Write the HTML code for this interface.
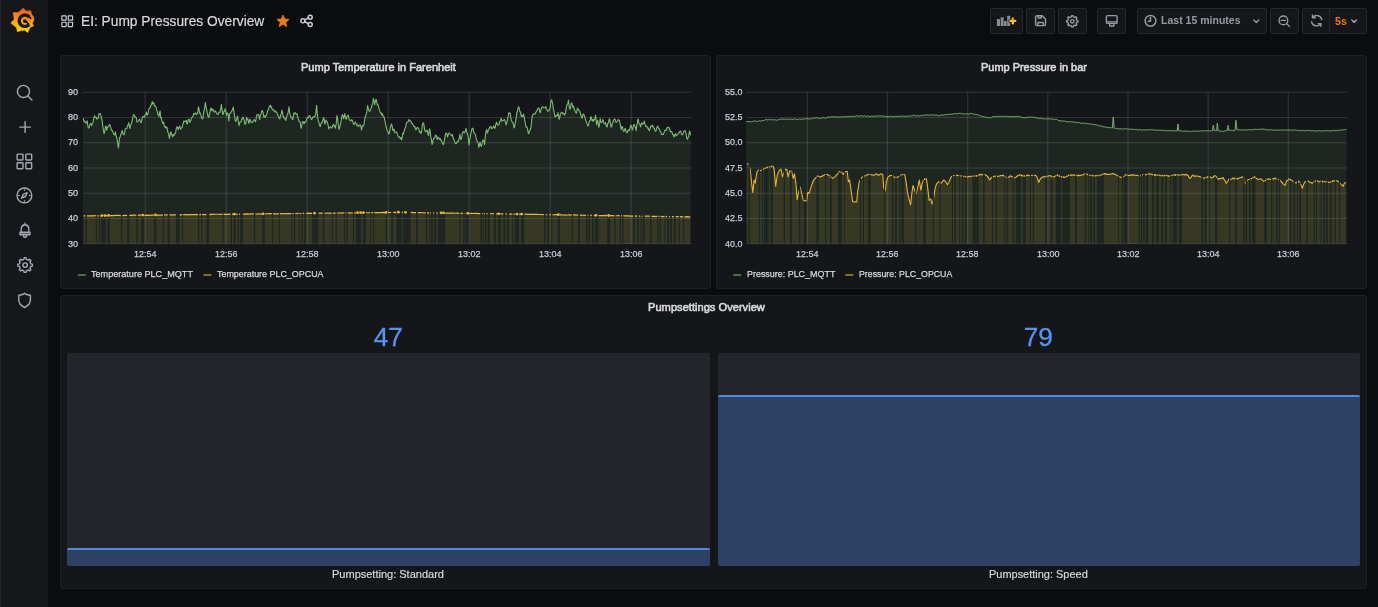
<!DOCTYPE html>
<html><head><meta charset="utf-8"><title>EI: Pump Pressures Overview - Grafana</title>
<style>
html,body{margin:0;padding:0}
body{width:1378px;height:607px;overflow:hidden;background:#0b0c0e;position:relative;font-family:"Liberation Sans",sans-serif}
.t{position:absolute;white-space:nowrap;display:block}
.i{position:absolute;display:block;overflow:visible}
.side{position:absolute;left:0;top:0;width:48px;height:607px;background:#15171a}
.panel{position:absolute;background:#141619;border:1px solid #1e2024;border-radius:3px;box-sizing:border-box}
.btn{position:absolute;top:8px;height:25.5px;background:#141619;border:1px solid #25272c;border-radius:2px;box-sizing:border-box}
.gauge{position:absolute;background:#25262b;border-radius:2px;overflow:hidden}
.fill{position:absolute;left:0;right:0;bottom:0;background:#2d4165;border-top:2px solid #5288de;border-radius:2px 2px 0 0}
svg.chart{position:absolute;left:0;top:0}
#root{position:absolute;left:0;top:0;width:1378px;height:607px;will-change:transform}
</style></head><body><div id="root">

<div class="side"></div>
<svg class="i" style="left:8px;top:5px" width="30" height="30" viewBox="8 5 30 30">
<defs><linearGradient id="lg" x1="0.3" y1="1" x2="0.45" y2="0"><stop offset="0" stop-color="#fcdc10"/><stop offset="0.5" stop-color="#f8981f"/><stop offset="1" stop-color="#f0562a"/></linearGradient></defs>
<path fill="url(#lg)" stroke="url(#lg)" stroke-width="0.6" stroke-linejoin="round" d="M23.40,8.00 L25.70,10.90 L30.70,10.80 L31.60,14.20 L33.40,16.60 L34.10,19.20 L33.40,21.40 L32.40,23.20 L33.60,25.90 L30.20,27.20 L27.70,32.50 L24.90,30.20 L21.40,30.60 L17.40,31.60 L16.50,27.60 L10.80,23.10 L14.30,19.20 L13.10,12.60 L17.60,12.60 L19.60,11.40Z"/>
<path fill="none" stroke="#15171a" stroke-width="3.3" stroke-linecap="butt" stroke-linejoin="round" d="M29.30,17.10 L28.82,16.60 L28.28,16.16 L27.69,15.79 L27.07,15.49 L26.41,15.28 L25.73,15.14 L25.03,15.09 L24.34,15.12 L23.66,15.23 L23.00,15.43 L22.36,15.70 L21.77,16.05 L21.22,16.47 L20.73,16.95 L20.29,17.48 L19.93,18.07 L19.64,18.69 L19.43,19.34 L19.30,20.02 L19.25,20.70 L19.29,21.39 L19.40,22.06 L19.60,22.71 L19.87,23.34 L20.22,23.93 L20.64,24.46 L21.12,24.95 L21.65,25.37 L22.23,25.73 L22.85,26.01 L23.49,26.22 L24.16,26.34 L24.84,26.38 L25.51,26.35 L26.18,26.23 L26.82,26.03 L27.44,25.75 L28.02,25.40 L28.55,24.99 L29.02,24.51"/>
<path fill="none" stroke="#15171a" stroke-width="1.6" stroke-linecap="round" d="M30.74,18.44 L30.71,18.40 L30.69,18.36 L30.66,18.31 L30.63,18.27 L30.60,18.23 L30.57,18.19 L30.54,18.15 L30.51,18.11 L30.48,18.07 L30.45,18.03 L30.42,17.99 L30.39,17.96 L30.36,17.92 L30.32,17.88 L30.29,17.84 L30.26,17.80 L30.23,17.77 L30.19,17.73 L30.16,17.69 L30.13,17.66 L30.10,17.62 L30.06,17.59 L30.03,17.55 L29.99,17.52 L29.96,17.48 L29.93,17.45 L29.89,17.41 L29.86,17.38 L29.82,17.35 L29.78,17.32 L29.75,17.28 L29.71,17.25 L29.68,17.22 L29.64,17.19 L29.60,17.16 L29.57,17.13 L29.53,17.10 L29.49,17.07 L29.46,17.04 L29.42,17.01"/>
<circle cx="24.799999999999997" cy="21.1" r="1.9" fill="#15171a"/>
<path fill="none" stroke="#15171a" stroke-width="1.7" stroke-linecap="round" d="M25.94,21.40 L28.62,24.15"/>
</svg>
<div style="position:absolute;left:0;top:0;width:1px;height:607px;background:#202226"></div>
<svg class="i" style="left:16.1px;top:83.5px" width="16.9" height="16.9" viewBox="0 0 24 24" fill="none" stroke="#a4a8b1" stroke-width="2.0" stroke-linecap="round" stroke-linejoin="round"><circle cx="10.6" cy="10.6" r="8.6"/><path d="M17 17 L22.6 22.6"/></svg>
<svg class="i" style="left:17.65px;top:119.6px" width="14.2" height="14.2" viewBox="0 0 24 24" fill="none" stroke="#a4a8b1" stroke-width="2.4" stroke-linecap="round" stroke-linejoin="round"><path d="M12 3 V21 M3 12 H21"/></svg>
<svg class="i" style="left:16.2px;top:152.8px" width="16.8" height="16.8" viewBox="0 0 24 24" fill="none" stroke="#a4a8b1" stroke-width="2.0" stroke-linecap="round" stroke-linejoin="round"><rect x="1.6" y="1.6" width="8.4" height="8.4" rx="1"/><rect x="14" y="1.6" width="8.4" height="8.4" rx="1"/><rect x="1.6" y="14" width="8.4" height="8.4" rx="1"/><rect x="14" y="14" width="8.4" height="8.4" rx="1"/></svg>
<svg class="i" style="left:16.2px;top:187.4px" width="16.8" height="16.8" viewBox="0 0 24 24" fill="none" stroke="#a4a8b1" stroke-width="2.0" stroke-linecap="round" stroke-linejoin="round"><circle cx="12" cy="12" r="10.6"/><path d="M16 8 L13.6 13.6 L8 16 L10.4 10.4 Z"/><path d="M12 3.6 V4.8 M12 19.2 V20.4 M3.6 12 H4.8 M19.2 12 H20.4" stroke-width="1.5"/></svg>
<svg class="i" style="left:17.7px;top:222.4px" width="14" height="16.6" viewBox="0 0 24 24" preserveAspectRatio="none" fill="none" stroke="#a4a8b1" stroke-width="2.3" stroke-linecap="round" stroke-linejoin="round"><path d="M12 1.8 V4 M5.4 15 V11 C5.4 6.8 8 4.2 12 4.2 C16 4.2 18.6 6.8 18.6 11 V15 M3.4 15 H20.6 V18.2 H3.4 Z M9.4 20.6 C10.4 22.4 13.6 22.4 14.6 20.6"/></svg>
<svg class="i" style="left:16.7px;top:257.4px" width="16.2" height="16.2" viewBox="0 0 24 24" fill="none" stroke="#a4a8b1" stroke-width="2.1" stroke-linecap="round" stroke-linejoin="round"><path d="M10.17,3.49 L10.63,1.19 L13.37,1.19 L13.83,3.49 L16.72,4.69 L18.68,3.39 L20.61,5.32 L19.31,7.28 L20.51,10.17 L22.81,10.63 L22.81,13.37 L20.51,13.83 L19.31,16.72 L20.61,18.68 L18.68,20.61 L16.72,19.31 L13.83,20.51 L13.37,22.81 L10.63,22.81 L10.17,20.51 L7.28,19.31 L5.32,20.61 L3.39,18.68 L4.69,16.72 L3.49,13.83 L1.19,13.37 L1.19,10.63 L3.49,10.17 L4.69,7.28 L3.39,5.32 L5.32,3.39 L7.28,4.69Z"/><circle cx="12" cy="12" r="3.3"/></svg>
<svg class="i" style="left:17.2px;top:291.8px" width="15.2" height="16.4" viewBox="0 0 24 24" preserveAspectRatio="none" fill="none" stroke="#a4a8b1" stroke-width="2.2" stroke-linecap="round" stroke-linejoin="round"><path d="M12 2 C9.5 4 6 4.8 2.8 4.8 V11.5 C2.8 17 7 20.6 12 22.6 C17 20.6 21.2 17 21.2 11.5 V4.8 C18 4.8 14.5 4 12 2 Z"/></svg>
<svg class="i" style="left:61px;top:15.3px" width="12.4" height="12.4" viewBox="0 0 24 24" fill="none" stroke="#c7d0d9" stroke-width="2.3" stroke-linecap="round" stroke-linejoin="round"><rect x="1.6" y="1.6" width="8.4" height="8.4" rx="1"/><rect x="14" y="1.6" width="8.4" height="8.4" rx="1"/><rect x="1.6" y="14" width="8.4" height="8.4" rx="1"/><rect x="14" y="14" width="8.4" height="8.4" rx="1"/></svg>
<span class="t" style="left:81.00px;top:14.01px;font-size:14.4px;line-height:14.4px;color:#d8d9da;transform:scaleX(0.9549);transform-origin:0 0;-webkit-text-stroke:0.2px #d8d9da;">EI: Pump Pressures Overview</span>
<svg class="i" style="left:276px;top:14px" width="14" height="14" viewBox="0 0 14 14"><path d="M7.00,1.00 L8.70,5.05 L13.09,5.42 L9.76,8.30 L10.76,12.58 L7.00,10.30 L3.24,12.58 L4.24,8.30 L0.91,5.42 L5.30,5.05Z" fill="#eb7b18" stroke="#eb7b18" stroke-width="0.8" stroke-linejoin="round"/></svg>
<svg class="i" style="left:298px;top:12px" width="18" height="18" viewBox="298 12 18 18" fill="none" stroke="#c7d0d9" stroke-width="1.45" stroke-linecap="round"><circle cx="310.2" cy="17.2" r="2.05"/><circle cx="302.9" cy="20.8" r="2.05"/><circle cx="310.2" cy="24.5" r="2.05"/><path d="M304.8 19.85 L308.3 18.15 M304.8 21.75 L308.3 23.55"/></svg>
<div class="btn" style="left:990px;width:33.2px"></div>
<div class="btn" style="left:1026px;width:29px"></div>
<div class="btn" style="left:1058px;width:28.6px"></div>
<div class="btn" style="left:1097.3px;width:28.8px"></div>
<div class="btn" style="left:1137px;width:130px"></div>
<div class="btn" style="left:1270.2px;width:28.6px"></div>
<div class="btn" style="left:1302px;width:64.8px"></div>
<div style="position:absolute;left:1329.2px;top:8px;width:1px;height:25.5px;background:#25272c"></div>
<svg class="i" style="left:995px;top:13px" width="24" height="15" viewBox="995 13 24 15">
<defs><linearGradient id="pg" x1="0" y1="0" x2="0" y2="1"><stop offset="0" stop-color="#f59a30"/><stop offset="1" stop-color="#fbd22c"/></linearGradient></defs>
<g fill="#888c94"><rect x="996.9" y="18.9" width="3.1" height="7" rx="0.5"/><rect x="1000.7" y="17.2" width="2.9" height="8.7" rx="0.5"/><rect x="1004.0" y="20.9" width="2.7" height="5" rx="0.5"/><rect x="1007.2" y="15.7" width="2.9" height="10.2" rx="0.5"/></g>
<path d="M1012.8 18.3 V23.5 M1010.2 20.9 H1015.4" stroke="#141619" stroke-width="3.9" stroke-linecap="round" fill="none"/>
<path d="M1012.8 18.4 V23.4 M1010.3 20.9 H1015.3" stroke="url(#pg)" stroke-width="2.3" stroke-linecap="round" fill="none"/></svg>
<svg class="i" style="left:1033px;top:13px" width="15" height="15" viewBox="1033 13 15 15" fill="none" stroke="#969aa2" stroke-width="1.45" stroke-linejoin="round" stroke-linecap="round"><path d="M1035.6 17 C1035.6 16.2 1036.2 15.7 1037 15.7 H1042.2 L1045.5 19 V24.2 C1045.5 25 1044.9 25.6 1044.1 25.6 H1037 C1036.2 25.6 1035.6 25 1035.6 24.2 Z M1038.2 15.9 V18 H1041.2 V15.9 M1037.9 25.4 V22.4 H1043.2 V25.4"/></svg>
<svg class="i" style="left:1065.8px;top:14.6px" width="12.6" height="12.6" viewBox="0 0 24 24" fill="none" stroke="#969aa2" stroke-width="2.6" stroke-linecap="round" stroke-linejoin="round"><path d="M10.17,3.49 L10.63,1.19 L13.37,1.19 L13.83,3.49 L16.72,4.69 L18.68,3.39 L20.61,5.32 L19.31,7.28 L20.51,10.17 L22.81,10.63 L22.81,13.37 L20.51,13.83 L19.31,16.72 L20.61,18.68 L18.68,20.61 L16.72,19.31 L13.83,20.51 L13.37,22.81 L10.63,22.81 L10.17,20.51 L7.28,19.31 L5.32,20.61 L3.39,18.68 L4.69,16.72 L3.49,13.83 L1.19,13.37 L1.19,10.63 L3.49,10.17 L4.69,7.28 L3.39,5.32 L5.32,3.39 L7.28,4.69Z"/><circle cx="12" cy="12" r="3.3"/></svg>
<svg class="i" style="left:1104px;top:13px" width="16" height="15" viewBox="1104 13 16 15" fill="none" stroke="#969aa2" stroke-width="1.4" stroke-linejoin="round"><rect x="1106.4" y="15.6" width="10.7" height="7.8" rx="1.2"/><path d="M1106.4 21.9 H1117.1 M1109.7 23.6 V26 H1113.9 V23.6"/></svg>
<svg class="i" style="left:1143px;top:13px" width="16" height="16" viewBox="1143 13 16 16" fill="none" stroke="#969aa2" stroke-width="1.5" stroke-linecap="round" stroke-linejoin="round"><circle cx="1150.5" cy="20.8" r="5.4"/><path d="M1150.5 17.4 V21.2 H1148.2"/></svg>
<span class="t" style="left:1161.40px;top:15.12px;font-size:11.2px;line-height:11.2px;color:#969aa2;transform:scaleX(0.9403);transform-origin:0 0;font-weight:bold;">Last 15 minutes</span>
<svg class="i" style="left:1252px;top:17.1px" width="8.6" height="8.6" viewBox="0 0 24 24" fill="none" stroke="#969aa2" stroke-width="3.6" stroke-linecap="round" stroke-linejoin="round"><path d="M5 8.5 L12 15.5 L19 8.5"/></svg>
<svg class="i" style="left:1278.3px;top:14.7px" width="12.2" height="12.2" viewBox="0 0 24 24" fill="none" stroke="#969aa2" stroke-width="2.7" stroke-linecap="round" stroke-linejoin="round"><circle cx="10.6" cy="10.6" r="8.6"/><path d="M17 17 L22.6 22.6 M6.6 10.6 H14.6"/></svg>
<svg class="i" style="left:1309.5px;top:14.2px" width="13.4" height="13.4" viewBox="0 0 24 24" fill="none" stroke="#969aa2" stroke-width="2.5" stroke-linecap="round" stroke-linejoin="round"><path d="M21.2 10 A9.4 9.4 0 0 0 4.6 6.4 M2.8 14 A9.4 9.4 0 0 0 19.4 17.6 M4.4 1.8 V6.8 H9.4 M19.6 22.2 V17.2 H14.6"/></svg>
<span class="t" style="left:1335.20px;top:15.62px;font-size:11.2px;line-height:11.2px;color:#eb7b18;transform:scaleX(0.9472);transform-origin:0 0;font-weight:bold;">5s</span>
<svg class="i" style="left:1350.2px;top:17.3px" width="8.2" height="8.2" viewBox="0 0 24 24" fill="none" stroke="#b8bcc4" stroke-width="3.6" stroke-linecap="round" stroke-linejoin="round"><path d="M5 8.5 L12 15.5 L19 8.5"/></svg>
<div class="panel" style="left:60px;top:55.4px;width:651px;height:233.6px"></div>
<div class="panel" style="left:716px;top:55.4px;width:651px;height:233.6px"></div>
<div class="panel" style="left:60px;top:295.3px;width:1307px;height:293.7px"></div>
<span class="t" style="left:300.90px;top:61.82px;font-size:11.2px;line-height:11.2px;color:#d8d9da;transform:scaleX(0.9854);transform-origin:0 0;-webkit-text-stroke:0.6px #d8d9da;">Pump Temperature in Farenheit</span>
<span class="t" style="left:981.40px;top:61.82px;font-size:11.2px;line-height:11.2px;color:#d8d9da;transform:scaleX(0.9786);transform-origin:0 0;-webkit-text-stroke:0.6px #d8d9da;">Pump Pressure in bar</span>
<span class="t" style="left:648.00px;top:302.02px;font-size:11.2px;line-height:11.2px;color:#d8d9da;transform:scaleX(0.9945);transform-origin:0 0;-webkit-text-stroke:0.6px #d8d9da;">Pumpsettings Overview</span>
<svg class="chart" width="1378" height="607" viewBox="0 0 1378 607">
<rect x="83.0" y="91.80" width="608.40" height="1" fill="rgba(200,204,212,0.17)"/>
<rect x="83.0" y="117.03" width="608.40" height="1" fill="rgba(200,204,212,0.17)"/>
<rect x="83.0" y="142.26" width="608.40" height="1" fill="rgba(200,204,212,0.17)"/>
<rect x="83.0" y="167.49" width="608.40" height="1" fill="rgba(200,204,212,0.17)"/>
<rect x="83.0" y="192.72" width="608.40" height="1" fill="rgba(200,204,212,0.17)"/>
<rect x="83.0" y="217.95" width="608.40" height="1" fill="rgba(200,204,212,0.17)"/>
<rect x="83.0" y="243.18" width="608.40" height="1" fill="rgba(200,204,212,0.17)"/>
<rect x="144.60" y="92.3" width="1.2" height="151.40" fill="rgba(200,204,212,0.15)"/>
<rect x="225.60" y="92.3" width="1.2" height="151.40" fill="rgba(200,204,212,0.15)"/>
<rect x="306.60" y="92.3" width="1.2" height="151.40" fill="rgba(200,204,212,0.15)"/>
<rect x="387.60" y="92.3" width="1.2" height="151.40" fill="rgba(200,204,212,0.15)"/>
<rect x="468.60" y="92.3" width="1.2" height="151.40" fill="rgba(200,204,212,0.15)"/>
<rect x="549.60" y="92.3" width="1.2" height="151.40" fill="rgba(200,204,212,0.15)"/>
<rect x="630.60" y="92.3" width="1.2" height="151.40" fill="rgba(200,204,212,0.15)"/>
<path d="M83.00,118.21 L83.48,119.10 L84.06,121.76 L84.93,121.03 L85.81,123.16 L86.50,122.77 L87.20,120.88 L87.78,125.72 L88.36,128.10 L89.11,127.58 L89.87,124.30 L90.74,123.61 L91.61,125.75 L92.19,123.27 L92.77,123.06 L93.64,118.89 L94.51,115.72 L95.38,117.63 L96.26,117.20 L96.84,119.08 L97.42,118.76 L98.00,118.52 L98.58,115.93 L99.16,113.44 L99.74,113.80 L100.32,113.61 L100.90,115.09 L101.48,118.75 L102.06,119.63 L102.64,125.10 L103.22,128.55 L104.03,133.74 L104.79,131.00 L105.54,126.06 L106.12,126.24 L106.71,130.19 L107.58,127.01 L108.45,126.76 L109.26,124.61 L110.01,124.96 L110.77,127.83 L111.64,130.35 L112.51,130.61 L113.38,133.31 L114.25,134.68 L114.83,134.86 L115.41,131.74 L115.99,135.87 L116.57,137.06 L117.45,141.06 L118.32,148.01 L118.90,144.22 L119.48,137.79 L120.06,137.29 L120.64,134.84 L121.34,133.21 L122.03,130.65 L122.61,131.06 L123.19,134.82 L123.95,134.81 L124.70,132.43 L125.28,128.99 L125.86,128.51 L126.73,128.55 L127.61,125.47 L128.19,124.66 L128.77,122.55 L129.35,126.72 L129.93,128.72 L130.51,125.07 L131.09,124.35 L131.96,121.53 L132.83,117.20 L133.58,114.53 L134.34,115.24 L135.04,117.28 L135.73,117.07 L136.31,117.90 L136.89,122.06 L137.76,121.62 L138.64,120.60 L139.22,119.36 L139.80,119.45 L140.38,121.72 L140.96,122.59 L141.54,121.90 L142.12,118.39 L142.99,116.25 L143.86,116.64 L144.44,116.96 L145.02,115.25 L145.72,114.55 L146.42,112.13 L147.00,115.06 L147.58,114.52 L148.16,112.72 L148.74,109.73 L149.20,108.03 L149.67,108.10 L150.25,107.65 L150.83,105.17 L151.52,104.95 L152.22,101.61 L152.80,103.86 L153.38,102.65 L153.85,102.94 L154.31,105.70 L154.89,105.40 L155.47,106.77 L156.05,106.76 L156.63,110.02 L157.21,110.94 L157.79,114.33 L158.37,114.70 L158.96,116.72 L159.54,112.30 L160.12,111.09 L160.70,117.87 L161.28,117.59 L161.86,120.39 L162.67,123.12 L163.13,123.66 L163.60,121.95 L164.06,124.91 L164.53,126.25 L165.22,127.79 L165.92,126.53 L166.50,128.16 L167.08,127.66 L167.66,131.55 L168.24,133.09 L168.82,135.07 L169.40,138.47 L169.87,136.47 L170.33,132.43 L170.91,131.75 L171.49,134.82 L172.08,134.42 L172.66,136.98 L173.35,134.61 L174.05,135.34 L174.75,133.64 L175.44,133.48 L176.20,128.99 L176.95,126.69 L177.53,127.22 L178.11,129.73 L178.98,127.15 L179.85,126.12 L180.44,129.24 L181.02,128.87 L181.60,127.61 L182.18,127.51 L182.76,124.45 L183.34,123.07 L183.92,120.76 L184.50,121.28 L185.37,121.65 L186.24,120.33 L186.82,123.49 L187.40,124.01 L187.98,120.60 L188.56,119.57 L189.14,119.27 L189.72,122.47 L190.30,121.02 L190.89,120.75 L191.47,117.82 L192.05,117.28 L192.92,116.46 L193.79,113.40 L194.66,114.22 L195.53,112.88 L196.40,114.48 L197.27,113.88 L197.85,111.66 L198.43,106.86 L199.01,108.99 L199.59,113.45 L200.17,112.94 L200.75,114.34 L201.63,117.96 L202.50,119.00 L203.08,117.13 L203.66,112.60 L204.53,108.30 L205.40,102.62 L205.98,106.71 L206.56,109.06 L207.43,113.78 L208.30,117.38 L208.88,117.20 L209.46,113.78 L210.04,112.28 L210.62,108.60 L211.20,108.15 L211.79,110.54 L212.37,110.42 L212.95,109.05 L213.82,111.65 L214.69,111.99 L215.56,110.91 L216.43,113.14 L217.30,114.22 L218.17,114.34 L219.04,112.12 L219.91,112.43 L220.67,109.32 L221.42,104.45 L222.00,109.24 L222.58,114.40 L223.28,114.18 L223.98,111.00 L224.56,111.23 L225.14,108.53 L225.83,111.46 L226.53,115.49 L227.11,112.96 L227.69,113.26 L228.27,115.53 L228.85,120.89 L229.43,115.75 L230.01,112.93 L230.77,112.90 L231.52,111.30 L232.39,110.07 L233.27,106.95 L233.85,111.45 L234.43,114.50 L235.01,119.12 L235.59,121.47 L236.46,120.10 L237.33,116.65 L237.55,116.01 L238.31,121.49 L239.06,125.66 L239.64,123.01 L240.22,121.67 L240.98,121.82 L241.73,118.78 L242.31,119.10 L242.90,117.31 L243.59,118.24 L244.29,120.85 L244.87,124.16 L245.45,124.28 L246.03,121.82 L246.61,117.31 L247.31,119.76 L248.00,119.20 L248.47,122.46 L248.93,123.32 L249.51,120.20 L250.09,119.14 L250.97,122.23 L251.84,121.97 L252.71,122.43 L253.58,119.69 L254.45,119.72 L255.32,121.85 L255.90,120.21 L256.48,116.17 L257.35,114.23 L258.22,114.49 L258.92,115.75 L259.62,119.57 L260.37,114.80 L261.12,113.83 L261.88,110.52 L262.63,110.86 L263.21,113.11 L263.80,117.19 L264.49,115.74 L265.19,117.41 L265.89,115.57 L266.58,115.22 L267.34,112.03 L268.09,109.87 L268.67,108.86 L269.25,106.54 L269.83,106.51 L270.41,105.28 L270.99,107.24 L271.57,106.82 L272.16,109.58 L272.74,110.10 L273.61,109.37 L274.48,111.46 L275.06,111.86 L275.64,110.95 L276.34,112.13 L277.03,112.74 L277.79,115.44 L278.54,115.76 L279.12,118.17 L279.70,118.91 L280.28,117.08 L280.86,114.48 L281.44,113.40 L282.02,110.09 L282.61,112.24 L283.19,117.03 L283.77,116.54 L284.35,118.91 L285.10,118.37 L285.86,120.70 L286.44,117.18 L287.02,115.60 L287.60,114.19 L288.18,112.15 L288.99,106.87 L289.57,112.21 L290.15,114.83 L290.91,117.03 L291.66,117.15 L292.24,119.27 L292.82,119.58 L293.40,115.53 L293.98,112.71 L294.68,113.89 L295.38,112.78 L296.25,114.11 L297.12,113.83 L297.70,117.55 L298.28,118.57 L299.15,121.48 L300.02,121.45 L300.60,125.72 L301.18,128.28 L301.76,125.67 L302.34,121.49 L303.21,121.72 L304.09,123.67 L304.96,121.66 L305.83,122.00 L306.70,118.92 L307.57,117.36 L308.32,118.04 L309.08,115.78 L309.78,115.53 L310.47,117.33 L311.34,119.65 L312.21,118.81 L313.08,116.72 L313.96,116.79 L314.65,117.10 L315.35,115.12 L315.99,111.63 L316.63,105.20 L317.15,112.10 L317.67,117.93 L318.25,120.90 L318.83,122.05 L319.59,125.57 L320.34,126.45 L320.92,123.35 L321.50,123.01 L322.08,121.62 L322.66,121.88 L323.24,118.55 L323.82,117.63 L324.40,121.54 L324.99,124.22 L325.57,121.42 L326.15,119.93 L326.73,121.73 L327.31,122.08 L328.06,124.78 L328.82,128.87 L329.51,127.24 L330.21,126.99 L330.79,126.67 L331.37,128.25 L332.24,127.20 L333.11,124.29 L333.69,124.56 L334.27,126.59 L334.85,125.83 L335.44,128.25 L336.19,123.66 L336.94,115.63 L337.53,117.82 L338.11,122.78 L338.92,129.42 L339.50,128.36 L340.08,125.97 L340.66,123.72 L341.24,120.27 L341.82,116.64 L342.40,114.68 L342.98,115.59 L343.56,118.71 L344.14,117.02 L344.72,113.52 L345.48,117.47 L346.23,119.31 L347.22,115.95 L348.21,115.18 L349.08,118.94 L349.95,120.40 L350.82,120.99 L351.69,119.53 L352.56,121.15 L353.43,123.89 L354.30,124.26 L355.17,121.98 L356.04,123.29 L356.92,125.66 L357.79,125.05 L358.66,126.61 L359.53,124.99 L360.40,124.90 L360.98,126.78 L361.56,130.23 L362.14,126.71 L362.72,125.38 L363.30,125.99 L363.88,125.15 L364.46,120.88 L365.04,118.10 L365.62,115.46 L366.20,114.22 L366.90,111.37 L367.60,105.49 L368.35,108.86 L369.11,110.87 L369.69,111.51 L370.27,109.85 L371.14,108.25 L372.01,105.23 L372.71,103.19 L373.40,98.33 L374.04,101.07 L374.68,104.78 L375.38,101.01 L376.07,99.21 L376.65,101.20 L377.24,105.03 L377.82,104.63 L378.40,105.75 L379.27,109.64 L380.14,112.18 L380.72,113.29 L381.30,112.95 L381.88,115.17 L382.46,113.75 L383.33,116.98 L384.20,117.13 L384.78,120.54 L385.36,122.67 L385.94,126.08 L386.52,127.97 L387.10,130.65 L387.69,131.18 L388.27,133.12 L388.85,134.06 L389.43,133.04 L390.01,129.26 L390.76,125.67 L391.52,123.93 L392.21,126.15 L392.90,130.54 L393.48,130.62 L394.06,128.95 L394.82,132.60 L395.57,132.34 L396.39,131.93 L397.20,133.48 L397.95,135.93 L398.71,136.92 L399.46,136.75 L400.22,138.59 L400.91,137.53 L401.61,139.97 L402.19,137.25 L402.77,133.00 L403.47,133.82 L404.17,131.14 L404.92,128.24 L405.67,127.26 L406.26,123.67 L406.84,122.10 L407.59,122.27 L408.35,121.21 L409.04,119.48 L409.74,120.89 L410.61,120.76 L411.48,123.02 L412.35,123.44 L413.22,124.92 L414.09,126.84 L414.96,126.64 L415.54,129.50 L416.12,129.83 L417.00,127.58 L417.87,127.58 L418.74,128.60 L419.61,132.39 L420.36,131.75 L421.12,133.54 L421.70,130.40 L422.28,125.71 L422.86,122.79 L423.44,122.98 L424.02,125.05 L424.60,130.01 L425.30,131.65 L425.99,131.67 L426.69,130.11 L427.39,130.74 L427.97,134.47 L428.55,135.37 L429.13,131.06 L429.71,128.82 L430.29,132.37 L430.87,137.68 L431.45,139.51 L432.03,144.46 L432.61,143.00 L433.19,139.79 L433.95,138.00 L434.70,138.20 L435.28,135.57 L435.86,134.97 L436.62,136.55 L437.37,139.53 L438.07,137.14 L438.77,137.65 L439.46,139.55 L440.16,138.54 L440.91,140.61 L441.67,140.58 L442.54,143.65 L443.41,144.53 L443.99,142.76 L444.57,139.16 L445.27,135.05 L445.97,133.05 L446.72,133.45 L447.47,136.97 L448.35,134.17 L449.22,132.72 L450.09,134.12 L450.96,134.64 L451.71,135.82 L452.47,134.65 L453.16,138.45 L453.86,139.29 L454.73,142.08 L455.60,143.69 L456.47,143.60 L457.34,141.18 L458.04,141.96 L458.74,139.83 L459.32,138.44 L459.90,134.16 L460.48,138.40 L461.06,139.61 L461.81,136.96 L462.57,132.52 L463.44,131.48 L464.31,132.98 L465.18,131.21 L466.05,128.54 L466.81,132.72 L467.56,133.70 L468.26,137.76 L468.96,144.91 L469.54,140.75 L470.12,137.95 L470.70,134.33 L471.28,131.76 L472.15,128.41 L473.02,128.29 L473.77,132.35 L474.53,133.51 L475.22,134.23 L475.92,137.14 L476.79,140.69 L477.66,141.86 L478.24,143.38 L478.82,147.47 L479.40,145.48 L479.99,141.79 L480.74,145.32 L481.49,146.44 L482.19,142.91 L482.89,139.88 L483.76,140.69 L484.63,144.56 L485.21,136.86 L485.79,132.90 L486.60,129.49 L487.07,132.07 L487.53,132.97 L488.40,129.84 L489.27,128.37 L490.03,126.68 L490.78,126.55 L491.48,128.54 L492.18,128.19 L492.87,127.84 L493.57,125.84 L494.33,127.62 L495.08,128.21 L495.83,124.17 L496.59,122.13 L497.29,124.54 L497.98,124.96 L498.85,125.06 L499.72,121.40 L500.48,120.89 L501.23,118.40 L501.93,121.16 L502.63,120.77 L503.50,120.47 L504.37,119.41 L505.24,121.17 L506.11,124.98 L506.81,122.88 L507.50,119.48 L508.08,116.70 L508.66,112.95 L509.25,113.41 L509.83,112.72 L510.41,114.29 L510.99,119.12 L511.74,121.39 L512.50,122.07 L513.25,123.52 L514.01,127.91 L514.59,126.90 L515.17,123.04 L515.75,120.73 L516.33,116.83 L516.91,112.45 L517.49,111.01 L518.07,107.56 L518.65,106.85 L519.23,107.93 L519.81,111.48 L520.51,111.91 L521.20,116.25 L521.79,115.14 L522.37,116.83 L522.95,116.11 L523.53,114.16 L524.11,116.61 L524.69,120.50 L525.38,123.03 L526.08,127.22 L526.84,126.73 L527.59,129.19 L528.17,132.82 L528.75,133.58 L529.33,131.41 L529.91,130.48 L530.49,129.08 L531.07,126.57 L531.65,120.53 L532.24,116.24 L533.11,114.04 L533.98,113.81 L534.85,114.26 L535.72,112.58 L536.47,111.15 L537.23,110.36 L537.92,108.23 L538.62,108.09 L539.20,108.44 L539.78,111.99 L540.36,112.63 L540.94,109.86 L541.81,107.45 L542.69,106.61 L543.44,107.78 L544.19,108.02 L545.00,107.68 L545.81,106.45 L546.50,109.50 L547.20,110.03 L547.95,111.38 L548.71,110.67 L549.46,109.64 L550.22,107.23 L551.03,100.54 L551.61,99.91 L552.19,101.64 L552.77,104.25 L553.35,109.17 L553.93,110.95 L554.51,114.51 L555.09,116.81 L555.67,116.77 L556.26,115.47 L556.84,114.98 L557.42,115.52 L558.00,112.53 L558.58,116.48 L559.16,119.38 L559.74,117.63 L560.32,114.20 L561.19,112.37 L562.06,112.39 L562.93,113.94 L563.80,113.04 L564.38,115.08 L564.96,114.39 L565.54,112.89 L566.12,108.16 L566.71,105.64 L567.29,104.26 L567.87,103.60 L568.45,99.99 L569.20,106.50 L569.96,109.44 L570.54,107.48 L571.12,103.91 L571.81,102.86 L572.51,105.44 L573.09,107.69 L573.67,106.22 L574.25,109.33 L574.83,110.34 L575.53,112.08 L576.23,113.25 L576.81,111.39 L577.39,107.98 L578.14,108.91 L578.90,110.64 L579.65,110.79 L580.41,113.26 L581.10,116.09 L581.80,118.09 L582.38,117.14 L582.96,114.02 L583.83,114.37 L584.70,116.74 L585.28,118.56 L585.86,120.74 L586.44,121.88 L587.02,123.66 L587.78,125.89 L588.53,125.49 L589.11,121.98 L589.70,120.85 L590.28,119.86 L590.86,116.71 L591.44,117.45 L592.02,120.66 L592.71,119.69 L593.41,121.43 L593.99,119.15 L594.57,119.66 L595.04,118.48 L595.50,114.98 L596.08,119.00 L596.66,124.82 L597.24,121.38 L597.82,120.42 L598.40,125.49 L598.98,127.22 L599.56,123.79 L600.15,118.53 L600.73,121.71 L601.31,122.61 L602.00,122.11 L602.70,119.61 L603.40,121.09 L604.09,123.72 L604.85,123.70 L605.60,122.44 L606.36,126.46 L607.11,127.00 L607.81,123.37 L608.51,122.70 L609.32,118.70 L609.90,119.82 L610.48,123.76 L611.06,127.10 L611.64,126.54 L612.28,123.28 L612.92,122.84 L613.61,119.90 L614.31,119.02 L615.01,119.03 L615.70,121.93 L616.46,122.22 L617.21,121.48 L617.97,119.77 L618.72,119.77 L619.42,120.47 L620.12,123.31 L620.70,127.19 L621.28,129.51 L621.86,126.73 L622.44,126.49 L623.13,130.18 L623.83,131.54 L624.59,129.37 L625.34,128.32 L625.92,131.02 L626.50,132.45 L627.26,132.76 L628.01,130.23 L628.71,129.78 L629.40,130.76 L630.10,127.27 L630.80,125.05 L631.55,127.05 L632.31,130.18 L632.89,128.04 L633.47,124.95 L634.05,124.41 L634.63,125.58 L635.38,127.17 L636.14,130.76 L636.72,126.14 L637.30,122.97 L637.76,120.09 L638.23,118.97 L638.81,122.60 L639.39,123.93 L639.97,124.19 L640.55,126.85 L641.25,124.27 L641.94,122.86 L642.64,124.21 L643.34,123.48 L643.80,123.38 L644.27,121.03 L644.85,123.89 L645.43,125.41 L646.12,126.36 L646.82,126.13 L647.52,128.31 L648.21,127.75 L648.80,130.13 L649.38,130.57 L650.13,128.69 L650.89,125.76 L651.76,126.52 L652.63,125.19 L653.50,127.85 L654.37,128.27 L655.24,131.29 L656.11,130.72 L656.98,127.01 L657.85,126.12 L658.61,128.39 L659.36,128.78 L660.06,131.24 L660.75,131.93 L661.63,134.60 L662.50,134.38 L663.25,134.58 L664.01,132.60 L664.70,130.45 L665.40,129.96 L666.10,130.57 L666.79,128.50 L667.55,127.17 L668.30,127.66 L669.06,127.49 L669.81,129.77 L670.51,131.83 L671.20,131.43 L671.90,131.76 L672.60,134.61 L673.35,134.79 L674.11,137.08 L674.86,134.44 L675.62,133.56 L676.31,135.99 L677.01,135.04 L677.71,134.69 L678.40,132.69 L679.16,132.90 L679.91,131.35 L680.67,131.06 L681.42,133.84 L682.12,134.83 L682.82,134.34 L683.69,131.59 L684.56,130.60 L685.31,130.82 L686.07,133.66 L686.76,137.93 L687.46,139.28 L688.04,137.31 L688.62,136.93 L689.09,133.09 L689.55,130.93 L690.01,132.10 L690.60,135.02 L690.6,243.7 L83.0,243.7Z" fill="#73bf69" fill-opacity="0.10"/>
<clipPath id="clip1"><rect x="83.61" y="92.3" width="1.82" height="153.39999999999998"/><rect x="86.95" y="92.3" width="8.81" height="153.39999999999998"/><rect x="96.87" y="92.3" width="1.92" height="153.39999999999998"/><rect x="100.11" y="92.3" width="0.91" height="153.39999999999998"/><rect x="105.88" y="92.3" width="1.52" height="153.39999999999998"/><rect x="110.03" y="92.3" width="10.83" height="153.39999999999998"/><rect x="122.38" y="92.3" width="4.86" height="153.39999999999998"/><rect x="129.36" y="92.3" width="6.99" height="153.39999999999998"/><rect x="137.77" y="92.3" width="3.34" height="153.39999999999998"/><rect x="144.45" y="92.3" width="9.41" height="153.39999999999998"/><rect x="156.50" y="92.3" width="6.38" height="153.39999999999998"/><rect x="164.09" y="92.3" width="3.64" height="153.39999999999998"/><rect x="169.55" y="92.3" width="6.38" height="153.39999999999998"/><rect x="179.68" y="92.3" width="2.63" height="153.39999999999998"/><rect x="183.12" y="92.3" width="14.98" height="153.39999999999998"/><rect x="199.22" y="92.3" width="1.92" height="153.39999999999998"/><rect x="202.25" y="92.3" width="4.15" height="153.39999999999998"/><rect x="209.14" y="92.3" width="13.36" height="153.39999999999998"/><rect x="223.61" y="92.3" width="6.99" height="153.39999999999998"/><rect x="232.01" y="92.3" width="1.72" height="153.39999999999998"/><rect x="235.56" y="92.3" width="2.23" height="153.39999999999998"/><rect x="239.00" y="92.3" width="1.11" height="153.39999999999998"/><rect x="242.85" y="92.3" width="11.14" height="153.39999999999998"/><rect x="255.30" y="92.3" width="6.88" height="153.39999999999998"/><rect x="264.81" y="92.3" width="7.09" height="153.39999999999998"/><rect x="273.01" y="92.3" width="5.67" height="153.39999999999998"/><rect x="279.80" y="92.3" width="11.54" height="153.39999999999998"/><rect x="292.35" y="92.3" width="1.42" height="153.39999999999998"/><rect x="295.18" y="92.3" width="3.44" height="153.39999999999998"/><rect x="299.54" y="92.3" width="1.72" height="153.39999999999998"/><rect x="302.57" y="92.3" width="1.62" height="153.39999999999998"/><rect x="306.12" y="92.3" width="5.97" height="153.39999999999998"/><rect x="318.47" y="92.3" width="4.35" height="153.39999999999998"/><rect x="324.34" y="92.3" width="7.59" height="153.39999999999998"/><rect x="332.84" y="92.3" width="2.83" height="153.39999999999998"/><rect x="336.79" y="92.3" width="7.49" height="153.39999999999998"/><rect x="345.40" y="92.3" width="1.11" height="153.39999999999998"/><rect x="347.83" y="92.3" width="5.06" height="153.39999999999998"/><rect x="354.00" y="92.3" width="1.92" height="153.39999999999998"/><rect x="361.19" y="92.3" width="1.82" height="153.39999999999998"/><rect x="366.05" y="92.3" width="4.15" height="153.39999999999998"/><rect x="371.31" y="92.3" width="1.82" height="153.39999999999998"/><rect x="374.25" y="92.3" width="11.44" height="153.39999999999998"/><rect x="387.81" y="92.3" width="3.44" height="153.39999999999998"/><rect x="393.08" y="92.3" width="3.34" height="153.39999999999998"/><rect x="401.68" y="92.3" width="1.11" height="153.39999999999998"/><rect x="410.69" y="92.3" width="5.26" height="153.39999999999998"/><rect x="417.78" y="92.3" width="7.90" height="153.39999999999998"/><rect x="427.19" y="92.3" width="1.82" height="153.39999999999998"/><rect x="429.82" y="92.3" width="1.11" height="153.39999999999998"/><rect x="433.06" y="92.3" width="1.21" height="153.39999999999998"/><rect x="436.20" y="92.3" width="1.82" height="153.39999999999998"/><rect x="445.21" y="92.3" width="14.17" height="153.39999999999998"/><rect x="460.50" y="92.3" width="2.63" height="153.39999999999998"/><rect x="464.65" y="92.3" width="0.71" height="153.39999999999998"/><rect x="469.51" y="92.3" width="10.83" height="153.39999999999998"/><rect x="481.86" y="92.3" width="0.81" height="153.39999999999998"/><rect x="483.78" y="92.3" width="1.11" height="153.39999999999998"/><rect x="486.41" y="92.3" width="1.21" height="153.39999999999998"/><rect x="489.86" y="92.3" width="3.95" height="153.39999999999998"/><rect x="495.83" y="92.3" width="2.23" height="153.39999999999998"/><rect x="500.69" y="92.3" width="2.63" height="153.39999999999998"/><rect x="505.34" y="92.3" width="1.72" height="153.39999999999998"/><rect x="508.89" y="92.3" width="3.44" height="153.39999999999998"/><rect x="513.44" y="92.3" width="1.52" height="153.39999999999998"/><rect x="519.01" y="92.3" width="2.02" height="153.39999999999998"/><rect x="524.27" y="92.3" width="19.54" height="153.39999999999998"/><rect x="545.53" y="92.3" width="1.72" height="153.39999999999998"/><rect x="549.38" y="92.3" width="1.52" height="153.39999999999998"/><rect x="552.42" y="92.3" width="5.26" height="153.39999999999998"/><rect x="559.91" y="92.3" width="11.84" height="153.39999999999998"/><rect x="572.97" y="92.3" width="5.06" height="153.39999999999998"/><rect x="579.75" y="92.3" width="6.38" height="153.39999999999998"/><rect x="587.65" y="92.3" width="0.91" height="153.39999999999998"/><rect x="590.08" y="92.3" width="1.92" height="153.39999999999998"/><rect x="593.72" y="92.3" width="1.32" height="153.39999999999998"/><rect x="598.58" y="92.3" width="8.71" height="153.39999999999998"/><rect x="610.12" y="92.3" width="4.15" height="153.39999999999998"/><rect x="615.59" y="92.3" width="4.15" height="153.39999999999998"/><rect x="621.05" y="92.3" width="1.11" height="153.39999999999998"/><rect x="623.48" y="92.3" width="9.72" height="153.39999999999998"/><rect x="634.92" y="92.3" width="2.02" height="153.39999999999998"/><rect x="638.67" y="92.3" width="1.82" height="153.39999999999998"/><rect x="641.60" y="92.3" width="1.11" height="153.39999999999998"/><rect x="644.64" y="92.3" width="5.26" height="153.39999999999998"/><rect x="651.52" y="92.3" width="5.87" height="153.39999999999998"/><rect x="658.51" y="92.3" width="1.11" height="153.39999999999998"/><rect x="660.74" y="92.3" width="3.75" height="153.39999999999998"/><rect x="665.60" y="92.3" width="1.52" height="153.39999999999998"/><rect x="669.04" y="92.3" width="1.11" height="153.39999999999998"/><rect x="671.97" y="92.3" width="1.92" height="153.39999999999998"/><rect x="675.72" y="92.3" width="3.04" height="153.39999999999998"/><rect x="679.87" y="92.3" width="3.34" height="153.39999999999998"/><rect x="684.32" y="92.3" width="6.28" height="153.39999999999998"/></clipPath>
<clipPath id="clip1g"><rect x="101.32" y="92.3" width="4.26" height="153.39999999999998"/><rect x="107.70" y="92.3" width="2.03" height="153.39999999999998"/><rect x="127.54" y="92.3" width="1.53" height="153.39999999999998"/><rect x="141.41" y="92.3" width="2.74" height="153.39999999999998"/><rect x="154.16" y="92.3" width="2.03" height="153.39999999999998"/><rect x="168.03" y="92.3" width="1.22" height="153.39999999999998"/><rect x="176.23" y="92.3" width="3.15" height="153.39999999999998"/><rect x="206.70" y="92.3" width="2.13" height="153.39999999999998"/><rect x="234.04" y="92.3" width="1.22" height="153.39999999999998"/><rect x="240.41" y="92.3" width="2.13" height="153.39999999999998"/><rect x="262.48" y="92.3" width="2.03" height="153.39999999999998"/><rect x="304.49" y="92.3" width="1.32" height="153.39999999999998"/><rect x="312.39" y="92.3" width="5.78" height="153.39999999999998"/><rect x="356.22" y="92.3" width="4.66" height="153.39999999999998"/><rect x="363.31" y="92.3" width="2.44" height="153.39999999999998"/><rect x="385.99" y="92.3" width="1.53" height="153.39999999999998"/><rect x="391.55" y="92.3" width="1.22" height="153.39999999999998"/><rect x="396.72" y="92.3" width="4.66" height="153.39999999999998"/><rect x="403.09" y="92.3" width="7.30" height="153.39999999999998"/><rect x="416.26" y="92.3" width="1.22" height="153.39999999999998"/><rect x="431.24" y="92.3" width="1.53" height="153.39999999999998"/><rect x="434.58" y="92.3" width="1.32" height="153.39999999999998"/><rect x="438.32" y="92.3" width="6.59" height="153.39999999999998"/><rect x="465.66" y="92.3" width="3.55" height="153.39999999999998"/><rect x="487.93" y="92.3" width="1.63" height="153.39999999999998"/><rect x="494.10" y="92.3" width="1.42" height="153.39999999999998"/><rect x="498.35" y="92.3" width="2.03" height="153.39999999999998"/><rect x="503.62" y="92.3" width="1.42" height="153.39999999999998"/><rect x="507.36" y="92.3" width="1.22" height="153.39999999999998"/><rect x="515.26" y="92.3" width="3.45" height="153.39999999999998"/><rect x="521.33" y="92.3" width="2.64" height="153.39999999999998"/><rect x="544.11" y="92.3" width="1.12" height="153.39999999999998"/><rect x="547.55" y="92.3" width="1.53" height="153.39999999999998"/><rect x="557.98" y="92.3" width="1.63" height="153.39999999999998"/><rect x="578.33" y="92.3" width="1.12" height="153.39999999999998"/><rect x="592.30" y="92.3" width="1.12" height="153.39999999999998"/><rect x="595.34" y="92.3" width="2.94" height="153.39999999999998"/><rect x="607.59" y="92.3" width="2.23" height="153.39999999999998"/><rect x="633.50" y="92.3" width="1.12" height="153.39999999999998"/><rect x="637.25" y="92.3" width="1.12" height="153.39999999999998"/><rect x="643.02" y="92.3" width="1.32" height="153.39999999999998"/><rect x="667.41" y="92.3" width="1.32" height="153.39999999999998"/><rect x="670.45" y="92.3" width="1.22" height="153.39999999999998"/><rect x="674.20" y="92.3" width="1.22" height="153.39999999999998"/></clipPath>
<g clip-path="url(#clip1)"><path d="M83.00,215.94 L85.00,215.95 L87.00,215.94 L89.00,215.96 L91.00,215.88 L93.00,215.91 L95.00,215.62 L97.00,215.73 L99.00,215.85 L101.00,215.74 L103.00,215.79 L105.00,215.53 L107.00,215.62 L109.00,215.53 L111.00,215.60 L113.00,215.58 L115.00,215.39 L117.00,215.43 L119.00,215.43 L121.00,215.59 L123.00,215.53 L125.00,215.32 L127.00,215.49 L129.00,215.27 L131.00,215.39 L133.00,215.22 L135.00,215.16 L137.00,215.40 L139.00,215.18 L141.00,215.16 L143.00,215.36 L145.00,215.31 L147.00,215.11 L149.00,215.29 L151.00,215.14 L153.00,215.16 L155.00,214.99 L157.00,215.19 L159.00,215.09 L161.00,215.15 L163.00,215.11 L165.00,214.91 L167.00,214.90 L169.00,214.82 L171.00,214.79 L173.00,214.75 L175.00,214.80 L177.00,214.86 L179.00,214.66 L181.00,214.84 L183.00,214.72 L185.00,214.68 L187.00,214.81 L189.00,214.69 L191.00,214.62 L193.00,214.65 L195.00,214.69 L197.00,214.47 L199.00,214.73 L201.00,214.42 L203.00,214.61 L205.00,214.62 L207.00,214.35 L209.00,214.56 L211.00,214.41 L213.00,214.45 L215.00,214.25 L217.00,214.24 L219.00,214.26 L221.00,214.47 L223.00,214.22 L225.00,214.36 L227.00,214.39 L229.00,214.37 L231.00,214.17 L233.00,214.15 L235.00,214.18 L237.00,214.23 L239.00,214.01 L241.00,214.18 L243.00,214.17 L245.00,214.17 L247.00,213.90 L249.00,214.15 L251.00,213.87 L253.00,213.92 L255.00,213.98 L257.00,214.05 L259.00,213.85 L261.00,214.01 L263.00,213.87 L265.00,213.78 L267.00,213.76 L269.00,213.69 L271.00,213.64 L273.00,213.64 L275.00,213.78 L277.00,213.85 L279.00,213.57 L281.00,213.52 L283.00,213.77 L285.00,213.62 L287.00,213.56 L289.00,213.48 L291.00,213.57 L293.00,213.61 L295.00,213.48 L297.00,213.45 L299.00,213.31 L301.00,213.55 L303.00,213.26 L305.00,213.38 L307.00,213.46 L309.00,213.22 L311.00,213.38 L313.00,213.42 L315.00,213.30 L317.00,213.33 L319.00,213.10 L321.00,213.18 L323.00,213.07 L325.00,213.26 L327.00,213.07 L329.00,213.09 L331.00,213.23 L333.00,213.17 L335.00,213.18 L337.00,213.00 L339.00,212.99 L341.00,213.04 L343.00,212.94 L345.00,212.86 L347.00,212.87 L349.00,212.77 L351.00,212.82 L353.00,212.98 L355.00,212.95 L357.00,212.83 L359.00,212.77 L361.00,212.69 L363.00,212.60 L365.00,212.63 L367.00,212.76 L369.00,212.76 L371.00,212.59 L373.00,212.69 L375.00,212.67 L377.00,212.62 L379.00,212.59 L381.00,212.59 L383.00,212.45 L385.00,212.53 L387.00,212.38 L389.00,212.42 L391.00,212.48 L393.00,212.44 L395.00,212.29 L397.00,212.47 L399.00,212.36 L401.00,212.34 L403.00,212.20 L405.00,212.39 L407.00,212.34 L409.00,212.49 L411.00,212.46 L413.00,212.60 L415.00,212.58 L417.00,212.66 L419.00,212.56 L421.00,212.68 L423.00,212.74 L425.00,212.79 L427.00,212.68 L429.00,212.86 L431.00,212.90 L433.00,212.88 L435.00,213.00 L437.00,213.02 L439.00,212.92 L441.00,212.96 L443.00,212.88 L445.00,213.11 L447.00,213.18 L449.00,213.07 L451.00,213.16 L453.00,213.20 L455.00,213.24 L457.00,213.10 L459.00,213.32 L461.00,213.29 L463.00,213.35 L465.00,213.31 L467.00,213.40 L469.00,213.47 L471.00,213.46 L473.00,213.52 L475.00,213.35 L477.00,213.42 L479.00,213.53 L481.00,213.63 L483.00,213.53 L485.00,213.70 L487.00,213.72 L489.00,213.57 L491.00,213.73 L493.00,213.69 L495.00,213.67 L497.00,213.73 L499.00,213.81 L501.00,213.80 L503.00,213.84 L505.00,213.82 L507.00,213.98 L509.00,213.99 L511.00,214.09 L513.00,214.12 L515.00,214.04 L517.00,214.27 L519.00,214.03 L521.00,214.19 L523.00,214.18 L525.00,214.25 L527.00,214.19 L529.00,214.44 L531.00,214.34 L533.00,214.27 L535.00,214.47 L537.00,214.35 L539.00,214.51 L541.00,214.48 L543.00,214.59 L545.00,214.73 L547.00,214.72 L549.00,214.63 L551.00,214.78 L553.00,214.76 L555.00,214.71 L557.00,214.68 L559.00,214.85 L561.00,214.87 L563.00,215.02 L565.00,215.05 L567.00,214.98 L569.00,214.93 L571.00,215.12 L573.00,214.89 L575.00,214.95 L577.00,215.12 L579.00,215.17 L581.00,215.06 L583.00,215.24 L585.00,215.35 L587.00,215.22 L589.00,215.27 L591.00,215.24 L593.00,215.29 L595.00,215.53 L597.00,215.38 L599.00,215.59 L601.00,215.61 L603.00,215.54 L605.00,215.47 L607.00,215.72 L609.00,215.61 L611.00,215.61 L613.00,215.62 L615.00,215.85 L617.00,215.73 L619.00,215.70 L621.00,215.79 L623.00,215.72 L625.00,215.90 L627.00,215.88 L629.00,215.86 L631.00,216.04 L633.00,216.09 L635.00,215.87 L637.00,216.06 L639.00,216.02 L641.00,216.25 L643.00,216.23 L645.00,216.10 L647.00,216.14 L649.00,216.14 L651.00,216.42 L653.00,216.24 L655.00,216.37 L657.00,216.36 L659.00,216.44 L661.00,216.46 L663.00,216.54 L665.00,216.38 L667.00,216.60 L669.00,216.50 L671.00,216.60 L673.00,216.57 L675.00,216.59 L677.00,216.69 L679.00,216.71 L681.00,216.71 L683.00,216.85 L685.00,216.84 L687.00,216.70 L689.00,216.80 L690.60,216.89 L690.6,243.7 L83.0,243.7Z" fill="#eab839" fill-opacity="0.125"/><path d="M83.00,215.94 L85.00,215.95 L87.00,215.94 L89.00,215.96 L91.00,215.88 L93.00,215.91 L95.00,215.62 L97.00,215.73 L99.00,215.85 L101.00,215.74 L103.00,215.79 L105.00,215.53 L107.00,215.62 L109.00,215.53 L111.00,215.60 L113.00,215.58 L115.00,215.39 L117.00,215.43 L119.00,215.43 L121.00,215.59 L123.00,215.53 L125.00,215.32 L127.00,215.49 L129.00,215.27 L131.00,215.39 L133.00,215.22 L135.00,215.16 L137.00,215.40 L139.00,215.18 L141.00,215.16 L143.00,215.36 L145.00,215.31 L147.00,215.11 L149.00,215.29 L151.00,215.14 L153.00,215.16 L155.00,214.99 L157.00,215.19 L159.00,215.09 L161.00,215.15 L163.00,215.11 L165.00,214.91 L167.00,214.90 L169.00,214.82 L171.00,214.79 L173.00,214.75 L175.00,214.80 L177.00,214.86 L179.00,214.66 L181.00,214.84 L183.00,214.72 L185.00,214.68 L187.00,214.81 L189.00,214.69 L191.00,214.62 L193.00,214.65 L195.00,214.69 L197.00,214.47 L199.00,214.73 L201.00,214.42 L203.00,214.61 L205.00,214.62 L207.00,214.35 L209.00,214.56 L211.00,214.41 L213.00,214.45 L215.00,214.25 L217.00,214.24 L219.00,214.26 L221.00,214.47 L223.00,214.22 L225.00,214.36 L227.00,214.39 L229.00,214.37 L231.00,214.17 L233.00,214.15 L235.00,214.18 L237.00,214.23 L239.00,214.01 L241.00,214.18 L243.00,214.17 L245.00,214.17 L247.00,213.90 L249.00,214.15 L251.00,213.87 L253.00,213.92 L255.00,213.98 L257.00,214.05 L259.00,213.85 L261.00,214.01 L263.00,213.87 L265.00,213.78 L267.00,213.76 L269.00,213.69 L271.00,213.64 L273.00,213.64 L275.00,213.78 L277.00,213.85 L279.00,213.57 L281.00,213.52 L283.00,213.77 L285.00,213.62 L287.00,213.56 L289.00,213.48 L291.00,213.57 L293.00,213.61 L295.00,213.48 L297.00,213.45 L299.00,213.31 L301.00,213.55 L303.00,213.26 L305.00,213.38 L307.00,213.46 L309.00,213.22 L311.00,213.38 L313.00,213.42 L315.00,213.30 L317.00,213.33 L319.00,213.10 L321.00,213.18 L323.00,213.07 L325.00,213.26 L327.00,213.07 L329.00,213.09 L331.00,213.23 L333.00,213.17 L335.00,213.18 L337.00,213.00 L339.00,212.99 L341.00,213.04 L343.00,212.94 L345.00,212.86 L347.00,212.87 L349.00,212.77 L351.00,212.82 L353.00,212.98 L355.00,212.95 L357.00,212.83 L359.00,212.77 L361.00,212.69 L363.00,212.60 L365.00,212.63 L367.00,212.76 L369.00,212.76 L371.00,212.59 L373.00,212.69 L375.00,212.67 L377.00,212.62 L379.00,212.59 L381.00,212.59 L383.00,212.45 L385.00,212.53 L387.00,212.38 L389.00,212.42 L391.00,212.48 L393.00,212.44 L395.00,212.29 L397.00,212.47 L399.00,212.36 L401.00,212.34 L403.00,212.20 L405.00,212.39 L407.00,212.34 L409.00,212.49 L411.00,212.46 L413.00,212.60 L415.00,212.58 L417.00,212.66 L419.00,212.56 L421.00,212.68 L423.00,212.74 L425.00,212.79 L427.00,212.68 L429.00,212.86 L431.00,212.90 L433.00,212.88 L435.00,213.00 L437.00,213.02 L439.00,212.92 L441.00,212.96 L443.00,212.88 L445.00,213.11 L447.00,213.18 L449.00,213.07 L451.00,213.16 L453.00,213.20 L455.00,213.24 L457.00,213.10 L459.00,213.32 L461.00,213.29 L463.00,213.35 L465.00,213.31 L467.00,213.40 L469.00,213.47 L471.00,213.46 L473.00,213.52 L475.00,213.35 L477.00,213.42 L479.00,213.53 L481.00,213.63 L483.00,213.53 L485.00,213.70 L487.00,213.72 L489.00,213.57 L491.00,213.73 L493.00,213.69 L495.00,213.67 L497.00,213.73 L499.00,213.81 L501.00,213.80 L503.00,213.84 L505.00,213.82 L507.00,213.98 L509.00,213.99 L511.00,214.09 L513.00,214.12 L515.00,214.04 L517.00,214.27 L519.00,214.03 L521.00,214.19 L523.00,214.18 L525.00,214.25 L527.00,214.19 L529.00,214.44 L531.00,214.34 L533.00,214.27 L535.00,214.47 L537.00,214.35 L539.00,214.51 L541.00,214.48 L543.00,214.59 L545.00,214.73 L547.00,214.72 L549.00,214.63 L551.00,214.78 L553.00,214.76 L555.00,214.71 L557.00,214.68 L559.00,214.85 L561.00,214.87 L563.00,215.02 L565.00,215.05 L567.00,214.98 L569.00,214.93 L571.00,215.12 L573.00,214.89 L575.00,214.95 L577.00,215.12 L579.00,215.17 L581.00,215.06 L583.00,215.24 L585.00,215.35 L587.00,215.22 L589.00,215.27 L591.00,215.24 L593.00,215.29 L595.00,215.53 L597.00,215.38 L599.00,215.59 L601.00,215.61 L603.00,215.54 L605.00,215.47 L607.00,215.72 L609.00,215.61 L611.00,215.61 L613.00,215.62 L615.00,215.85 L617.00,215.73 L619.00,215.70 L621.00,215.79 L623.00,215.72 L625.00,215.90 L627.00,215.88 L629.00,215.86 L631.00,216.04 L633.00,216.09 L635.00,215.87 L637.00,216.06 L639.00,216.02 L641.00,216.25 L643.00,216.23 L645.00,216.10 L647.00,216.14 L649.00,216.14 L651.00,216.42 L653.00,216.24 L655.00,216.37 L657.00,216.36 L659.00,216.44 L661.00,216.46 L663.00,216.54 L665.00,216.38 L667.00,216.60 L669.00,216.50 L671.00,216.60 L673.00,216.57 L675.00,216.59 L677.00,216.69 L679.00,216.71 L681.00,216.71 L683.00,216.85 L685.00,216.84 L687.00,216.70 L689.00,216.80 L690.60,216.89" fill="none" stroke="#eab839" stroke-width="1.2" stroke-linejoin="round"/></g>
<circle cx="101.9" cy="215.6" r="1.4" fill="#eab839"/>
<circle cx="104.9" cy="215.6" r="1.4" fill="#eab839"/>
<circle cx="108.6" cy="215.5" r="1.4" fill="#eab839"/>
<circle cx="142.7" cy="215.1" r="1.4" fill="#eab839"/>
<circle cx="155.5" cy="215.0" r="1.4" fill="#eab839"/>
<circle cx="234.4" cy="214.1" r="1.4" fill="#eab839"/>
<circle cx="263.0" cy="213.8" r="1.4" fill="#eab839"/>
<circle cx="314.6" cy="213.2" r="1.4" fill="#eab839"/>
<circle cx="357.5" cy="212.7" r="1.4" fill="#eab839"/>
<circle cx="360.5" cy="212.6" r="1.4" fill="#eab839"/>
<circle cx="363.5" cy="212.6" r="1.4" fill="#eab839"/>
<circle cx="386.0" cy="212.4" r="1.4" fill="#eab839"/>
<circle cx="398.4" cy="212.2" r="1.4" fill="#eab839"/>
<circle cx="405.5" cy="212.3" r="1.4" fill="#eab839"/>
<circle cx="441.0" cy="212.8" r="1.4" fill="#eab839"/>
<circle cx="443.5" cy="212.9" r="1.4" fill="#eab839"/>
<circle cx="467.8" cy="213.3" r="1.4" fill="#eab839"/>
<circle cx="498.9" cy="213.8" r="1.4" fill="#eab839"/>
<circle cx="517.0" cy="214.1" r="1.4" fill="#eab839"/>
<circle cx="521.7" cy="214.1" r="1.4" fill="#eab839"/>
<circle cx="558.4" cy="214.7" r="1.4" fill="#eab839"/>
<circle cx="596.0" cy="215.3" r="1.4" fill="#eab839"/>
<circle cx="608.7" cy="215.5" r="1.4" fill="#eab839"/>
<path d="M83.00,118.21 L83.48,119.10 L84.06,121.76 L84.93,121.03 L85.81,123.16 L86.50,122.77 L87.20,120.88 L87.78,125.72 L88.36,128.10 L89.11,127.58 L89.87,124.30 L90.74,123.61 L91.61,125.75 L92.19,123.27 L92.77,123.06 L93.64,118.89 L94.51,115.72 L95.38,117.63 L96.26,117.20 L96.84,119.08 L97.42,118.76 L98.00,118.52 L98.58,115.93 L99.16,113.44 L99.74,113.80 L100.32,113.61 L100.90,115.09 L101.48,118.75 L102.06,119.63 L102.64,125.10 L103.22,128.55 L104.03,133.74 L104.79,131.00 L105.54,126.06 L106.12,126.24 L106.71,130.19 L107.58,127.01 L108.45,126.76 L109.26,124.61 L110.01,124.96 L110.77,127.83 L111.64,130.35 L112.51,130.61 L113.38,133.31 L114.25,134.68 L114.83,134.86 L115.41,131.74 L115.99,135.87 L116.57,137.06 L117.45,141.06 L118.32,148.01 L118.90,144.22 L119.48,137.79 L120.06,137.29 L120.64,134.84 L121.34,133.21 L122.03,130.65 L122.61,131.06 L123.19,134.82 L123.95,134.81 L124.70,132.43 L125.28,128.99 L125.86,128.51 L126.73,128.55 L127.61,125.47 L128.19,124.66 L128.77,122.55 L129.35,126.72 L129.93,128.72 L130.51,125.07 L131.09,124.35 L131.96,121.53 L132.83,117.20 L133.58,114.53 L134.34,115.24 L135.04,117.28 L135.73,117.07 L136.31,117.90 L136.89,122.06 L137.76,121.62 L138.64,120.60 L139.22,119.36 L139.80,119.45 L140.38,121.72 L140.96,122.59 L141.54,121.90 L142.12,118.39 L142.99,116.25 L143.86,116.64 L144.44,116.96 L145.02,115.25 L145.72,114.55 L146.42,112.13 L147.00,115.06 L147.58,114.52 L148.16,112.72 L148.74,109.73 L149.20,108.03 L149.67,108.10 L150.25,107.65 L150.83,105.17 L151.52,104.95 L152.22,101.61 L152.80,103.86 L153.38,102.65 L153.85,102.94 L154.31,105.70 L154.89,105.40 L155.47,106.77 L156.05,106.76 L156.63,110.02 L157.21,110.94 L157.79,114.33 L158.37,114.70 L158.96,116.72 L159.54,112.30 L160.12,111.09 L160.70,117.87 L161.28,117.59 L161.86,120.39 L162.67,123.12 L163.13,123.66 L163.60,121.95 L164.06,124.91 L164.53,126.25 L165.22,127.79 L165.92,126.53 L166.50,128.16 L167.08,127.66 L167.66,131.55 L168.24,133.09 L168.82,135.07 L169.40,138.47 L169.87,136.47 L170.33,132.43 L170.91,131.75 L171.49,134.82 L172.08,134.42 L172.66,136.98 L173.35,134.61 L174.05,135.34 L174.75,133.64 L175.44,133.48 L176.20,128.99 L176.95,126.69 L177.53,127.22 L178.11,129.73 L178.98,127.15 L179.85,126.12 L180.44,129.24 L181.02,128.87 L181.60,127.61 L182.18,127.51 L182.76,124.45 L183.34,123.07 L183.92,120.76 L184.50,121.28 L185.37,121.65 L186.24,120.33 L186.82,123.49 L187.40,124.01 L187.98,120.60 L188.56,119.57 L189.14,119.27 L189.72,122.47 L190.30,121.02 L190.89,120.75 L191.47,117.82 L192.05,117.28 L192.92,116.46 L193.79,113.40 L194.66,114.22 L195.53,112.88 L196.40,114.48 L197.27,113.88 L197.85,111.66 L198.43,106.86 L199.01,108.99 L199.59,113.45 L200.17,112.94 L200.75,114.34 L201.63,117.96 L202.50,119.00 L203.08,117.13 L203.66,112.60 L204.53,108.30 L205.40,102.62 L205.98,106.71 L206.56,109.06 L207.43,113.78 L208.30,117.38 L208.88,117.20 L209.46,113.78 L210.04,112.28 L210.62,108.60 L211.20,108.15 L211.79,110.54 L212.37,110.42 L212.95,109.05 L213.82,111.65 L214.69,111.99 L215.56,110.91 L216.43,113.14 L217.30,114.22 L218.17,114.34 L219.04,112.12 L219.91,112.43 L220.67,109.32 L221.42,104.45 L222.00,109.24 L222.58,114.40 L223.28,114.18 L223.98,111.00 L224.56,111.23 L225.14,108.53 L225.83,111.46 L226.53,115.49 L227.11,112.96 L227.69,113.26 L228.27,115.53 L228.85,120.89 L229.43,115.75 L230.01,112.93 L230.77,112.90 L231.52,111.30 L232.39,110.07 L233.27,106.95 L233.85,111.45 L234.43,114.50 L235.01,119.12 L235.59,121.47 L236.46,120.10 L237.33,116.65 L237.55,116.01 L238.31,121.49 L239.06,125.66 L239.64,123.01 L240.22,121.67 L240.98,121.82 L241.73,118.78 L242.31,119.10 L242.90,117.31 L243.59,118.24 L244.29,120.85 L244.87,124.16 L245.45,124.28 L246.03,121.82 L246.61,117.31 L247.31,119.76 L248.00,119.20 L248.47,122.46 L248.93,123.32 L249.51,120.20 L250.09,119.14 L250.97,122.23 L251.84,121.97 L252.71,122.43 L253.58,119.69 L254.45,119.72 L255.32,121.85 L255.90,120.21 L256.48,116.17 L257.35,114.23 L258.22,114.49 L258.92,115.75 L259.62,119.57 L260.37,114.80 L261.12,113.83 L261.88,110.52 L262.63,110.86 L263.21,113.11 L263.80,117.19 L264.49,115.74 L265.19,117.41 L265.89,115.57 L266.58,115.22 L267.34,112.03 L268.09,109.87 L268.67,108.86 L269.25,106.54 L269.83,106.51 L270.41,105.28 L270.99,107.24 L271.57,106.82 L272.16,109.58 L272.74,110.10 L273.61,109.37 L274.48,111.46 L275.06,111.86 L275.64,110.95 L276.34,112.13 L277.03,112.74 L277.79,115.44 L278.54,115.76 L279.12,118.17 L279.70,118.91 L280.28,117.08 L280.86,114.48 L281.44,113.40 L282.02,110.09 L282.61,112.24 L283.19,117.03 L283.77,116.54 L284.35,118.91 L285.10,118.37 L285.86,120.70 L286.44,117.18 L287.02,115.60 L287.60,114.19 L288.18,112.15 L288.99,106.87 L289.57,112.21 L290.15,114.83 L290.91,117.03 L291.66,117.15 L292.24,119.27 L292.82,119.58 L293.40,115.53 L293.98,112.71 L294.68,113.89 L295.38,112.78 L296.25,114.11 L297.12,113.83 L297.70,117.55 L298.28,118.57 L299.15,121.48 L300.02,121.45 L300.60,125.72 L301.18,128.28 L301.76,125.67 L302.34,121.49 L303.21,121.72 L304.09,123.67 L304.96,121.66 L305.83,122.00 L306.70,118.92 L307.57,117.36 L308.32,118.04 L309.08,115.78 L309.78,115.53 L310.47,117.33 L311.34,119.65 L312.21,118.81 L313.08,116.72 L313.96,116.79 L314.65,117.10 L315.35,115.12 L315.99,111.63 L316.63,105.20 L317.15,112.10 L317.67,117.93 L318.25,120.90 L318.83,122.05 L319.59,125.57 L320.34,126.45 L320.92,123.35 L321.50,123.01 L322.08,121.62 L322.66,121.88 L323.24,118.55 L323.82,117.63 L324.40,121.54 L324.99,124.22 L325.57,121.42 L326.15,119.93 L326.73,121.73 L327.31,122.08 L328.06,124.78 L328.82,128.87 L329.51,127.24 L330.21,126.99 L330.79,126.67 L331.37,128.25 L332.24,127.20 L333.11,124.29 L333.69,124.56 L334.27,126.59 L334.85,125.83 L335.44,128.25 L336.19,123.66 L336.94,115.63 L337.53,117.82 L338.11,122.78 L338.92,129.42 L339.50,128.36 L340.08,125.97 L340.66,123.72 L341.24,120.27 L341.82,116.64 L342.40,114.68 L342.98,115.59 L343.56,118.71 L344.14,117.02 L344.72,113.52 L345.48,117.47 L346.23,119.31 L347.22,115.95 L348.21,115.18 L349.08,118.94 L349.95,120.40 L350.82,120.99 L351.69,119.53 L352.56,121.15 L353.43,123.89 L354.30,124.26 L355.17,121.98 L356.04,123.29 L356.92,125.66 L357.79,125.05 L358.66,126.61 L359.53,124.99 L360.40,124.90 L360.98,126.78 L361.56,130.23 L362.14,126.71 L362.72,125.38 L363.30,125.99 L363.88,125.15 L364.46,120.88 L365.04,118.10 L365.62,115.46 L366.20,114.22 L366.90,111.37 L367.60,105.49 L368.35,108.86 L369.11,110.87 L369.69,111.51 L370.27,109.85 L371.14,108.25 L372.01,105.23 L372.71,103.19 L373.40,98.33 L374.04,101.07 L374.68,104.78 L375.38,101.01 L376.07,99.21 L376.65,101.20 L377.24,105.03 L377.82,104.63 L378.40,105.75 L379.27,109.64 L380.14,112.18 L380.72,113.29 L381.30,112.95 L381.88,115.17 L382.46,113.75 L383.33,116.98 L384.20,117.13 L384.78,120.54 L385.36,122.67 L385.94,126.08 L386.52,127.97 L387.10,130.65 L387.69,131.18 L388.27,133.12 L388.85,134.06 L389.43,133.04 L390.01,129.26 L390.76,125.67 L391.52,123.93 L392.21,126.15 L392.90,130.54 L393.48,130.62 L394.06,128.95 L394.82,132.60 L395.57,132.34 L396.39,131.93 L397.20,133.48 L397.95,135.93 L398.71,136.92 L399.46,136.75 L400.22,138.59 L400.91,137.53 L401.61,139.97 L402.19,137.25 L402.77,133.00 L403.47,133.82 L404.17,131.14 L404.92,128.24 L405.67,127.26 L406.26,123.67 L406.84,122.10 L407.59,122.27 L408.35,121.21 L409.04,119.48 L409.74,120.89 L410.61,120.76 L411.48,123.02 L412.35,123.44 L413.22,124.92 L414.09,126.84 L414.96,126.64 L415.54,129.50 L416.12,129.83 L417.00,127.58 L417.87,127.58 L418.74,128.60 L419.61,132.39 L420.36,131.75 L421.12,133.54 L421.70,130.40 L422.28,125.71 L422.86,122.79 L423.44,122.98 L424.02,125.05 L424.60,130.01 L425.30,131.65 L425.99,131.67 L426.69,130.11 L427.39,130.74 L427.97,134.47 L428.55,135.37 L429.13,131.06 L429.71,128.82 L430.29,132.37 L430.87,137.68 L431.45,139.51 L432.03,144.46 L432.61,143.00 L433.19,139.79 L433.95,138.00 L434.70,138.20 L435.28,135.57 L435.86,134.97 L436.62,136.55 L437.37,139.53 L438.07,137.14 L438.77,137.65 L439.46,139.55 L440.16,138.54 L440.91,140.61 L441.67,140.58 L442.54,143.65 L443.41,144.53 L443.99,142.76 L444.57,139.16 L445.27,135.05 L445.97,133.05 L446.72,133.45 L447.47,136.97 L448.35,134.17 L449.22,132.72 L450.09,134.12 L450.96,134.64 L451.71,135.82 L452.47,134.65 L453.16,138.45 L453.86,139.29 L454.73,142.08 L455.60,143.69 L456.47,143.60 L457.34,141.18 L458.04,141.96 L458.74,139.83 L459.32,138.44 L459.90,134.16 L460.48,138.40 L461.06,139.61 L461.81,136.96 L462.57,132.52 L463.44,131.48 L464.31,132.98 L465.18,131.21 L466.05,128.54 L466.81,132.72 L467.56,133.70 L468.26,137.76 L468.96,144.91 L469.54,140.75 L470.12,137.95 L470.70,134.33 L471.28,131.76 L472.15,128.41 L473.02,128.29 L473.77,132.35 L474.53,133.51 L475.22,134.23 L475.92,137.14 L476.79,140.69 L477.66,141.86 L478.24,143.38 L478.82,147.47 L479.40,145.48 L479.99,141.79 L480.74,145.32 L481.49,146.44 L482.19,142.91 L482.89,139.88 L483.76,140.69 L484.63,144.56 L485.21,136.86 L485.79,132.90 L486.60,129.49 L487.07,132.07 L487.53,132.97 L488.40,129.84 L489.27,128.37 L490.03,126.68 L490.78,126.55 L491.48,128.54 L492.18,128.19 L492.87,127.84 L493.57,125.84 L494.33,127.62 L495.08,128.21 L495.83,124.17 L496.59,122.13 L497.29,124.54 L497.98,124.96 L498.85,125.06 L499.72,121.40 L500.48,120.89 L501.23,118.40 L501.93,121.16 L502.63,120.77 L503.50,120.47 L504.37,119.41 L505.24,121.17 L506.11,124.98 L506.81,122.88 L507.50,119.48 L508.08,116.70 L508.66,112.95 L509.25,113.41 L509.83,112.72 L510.41,114.29 L510.99,119.12 L511.74,121.39 L512.50,122.07 L513.25,123.52 L514.01,127.91 L514.59,126.90 L515.17,123.04 L515.75,120.73 L516.33,116.83 L516.91,112.45 L517.49,111.01 L518.07,107.56 L518.65,106.85 L519.23,107.93 L519.81,111.48 L520.51,111.91 L521.20,116.25 L521.79,115.14 L522.37,116.83 L522.95,116.11 L523.53,114.16 L524.11,116.61 L524.69,120.50 L525.38,123.03 L526.08,127.22 L526.84,126.73 L527.59,129.19 L528.17,132.82 L528.75,133.58 L529.33,131.41 L529.91,130.48 L530.49,129.08 L531.07,126.57 L531.65,120.53 L532.24,116.24 L533.11,114.04 L533.98,113.81 L534.85,114.26 L535.72,112.58 L536.47,111.15 L537.23,110.36 L537.92,108.23 L538.62,108.09 L539.20,108.44 L539.78,111.99 L540.36,112.63 L540.94,109.86 L541.81,107.45 L542.69,106.61 L543.44,107.78 L544.19,108.02 L545.00,107.68 L545.81,106.45 L546.50,109.50 L547.20,110.03 L547.95,111.38 L548.71,110.67 L549.46,109.64 L550.22,107.23 L551.03,100.54 L551.61,99.91 L552.19,101.64 L552.77,104.25 L553.35,109.17 L553.93,110.95 L554.51,114.51 L555.09,116.81 L555.67,116.77 L556.26,115.47 L556.84,114.98 L557.42,115.52 L558.00,112.53 L558.58,116.48 L559.16,119.38 L559.74,117.63 L560.32,114.20 L561.19,112.37 L562.06,112.39 L562.93,113.94 L563.80,113.04 L564.38,115.08 L564.96,114.39 L565.54,112.89 L566.12,108.16 L566.71,105.64 L567.29,104.26 L567.87,103.60 L568.45,99.99 L569.20,106.50 L569.96,109.44 L570.54,107.48 L571.12,103.91 L571.81,102.86 L572.51,105.44 L573.09,107.69 L573.67,106.22 L574.25,109.33 L574.83,110.34 L575.53,112.08 L576.23,113.25 L576.81,111.39 L577.39,107.98 L578.14,108.91 L578.90,110.64 L579.65,110.79 L580.41,113.26 L581.10,116.09 L581.80,118.09 L582.38,117.14 L582.96,114.02 L583.83,114.37 L584.70,116.74 L585.28,118.56 L585.86,120.74 L586.44,121.88 L587.02,123.66 L587.78,125.89 L588.53,125.49 L589.11,121.98 L589.70,120.85 L590.28,119.86 L590.86,116.71 L591.44,117.45 L592.02,120.66 L592.71,119.69 L593.41,121.43 L593.99,119.15 L594.57,119.66 L595.04,118.48 L595.50,114.98 L596.08,119.00 L596.66,124.82 L597.24,121.38 L597.82,120.42 L598.40,125.49 L598.98,127.22 L599.56,123.79 L600.15,118.53 L600.73,121.71 L601.31,122.61 L602.00,122.11 L602.70,119.61 L603.40,121.09 L604.09,123.72 L604.85,123.70 L605.60,122.44 L606.36,126.46 L607.11,127.00 L607.81,123.37 L608.51,122.70 L609.32,118.70 L609.90,119.82 L610.48,123.76 L611.06,127.10 L611.64,126.54 L612.28,123.28 L612.92,122.84 L613.61,119.90 L614.31,119.02 L615.01,119.03 L615.70,121.93 L616.46,122.22 L617.21,121.48 L617.97,119.77 L618.72,119.77 L619.42,120.47 L620.12,123.31 L620.70,127.19 L621.28,129.51 L621.86,126.73 L622.44,126.49 L623.13,130.18 L623.83,131.54 L624.59,129.37 L625.34,128.32 L625.92,131.02 L626.50,132.45 L627.26,132.76 L628.01,130.23 L628.71,129.78 L629.40,130.76 L630.10,127.27 L630.80,125.05 L631.55,127.05 L632.31,130.18 L632.89,128.04 L633.47,124.95 L634.05,124.41 L634.63,125.58 L635.38,127.17 L636.14,130.76 L636.72,126.14 L637.30,122.97 L637.76,120.09 L638.23,118.97 L638.81,122.60 L639.39,123.93 L639.97,124.19 L640.55,126.85 L641.25,124.27 L641.94,122.86 L642.64,124.21 L643.34,123.48 L643.80,123.38 L644.27,121.03 L644.85,123.89 L645.43,125.41 L646.12,126.36 L646.82,126.13 L647.52,128.31 L648.21,127.75 L648.80,130.13 L649.38,130.57 L650.13,128.69 L650.89,125.76 L651.76,126.52 L652.63,125.19 L653.50,127.85 L654.37,128.27 L655.24,131.29 L656.11,130.72 L656.98,127.01 L657.85,126.12 L658.61,128.39 L659.36,128.78 L660.06,131.24 L660.75,131.93 L661.63,134.60 L662.50,134.38 L663.25,134.58 L664.01,132.60 L664.70,130.45 L665.40,129.96 L666.10,130.57 L666.79,128.50 L667.55,127.17 L668.30,127.66 L669.06,127.49 L669.81,129.77 L670.51,131.83 L671.20,131.43 L671.90,131.76 L672.60,134.61 L673.35,134.79 L674.11,137.08 L674.86,134.44 L675.62,133.56 L676.31,135.99 L677.01,135.04 L677.71,134.69 L678.40,132.69 L679.16,132.90 L679.91,131.35 L680.67,131.06 L681.42,133.84 L682.12,134.83 L682.82,134.34 L683.69,131.59 L684.56,130.60 L685.31,130.82 L686.07,133.66 L686.76,137.93 L687.46,139.28 L688.04,137.31 L688.62,136.93 L689.09,133.09 L689.55,130.93 L690.01,132.10 L690.60,135.02" fill="none" stroke="#7abc70" stroke-width="1.1" stroke-linejoin="round"/>
<rect x="746.2" y="91.80" width="601.00" height="1" fill="rgba(200,204,212,0.17)"/>
<rect x="746.2" y="117.03" width="601.00" height="1" fill="rgba(200,204,212,0.17)"/>
<rect x="746.2" y="142.26" width="601.00" height="1" fill="rgba(200,204,212,0.17)"/>
<rect x="746.2" y="167.49" width="601.00" height="1" fill="rgba(200,204,212,0.17)"/>
<rect x="746.2" y="192.72" width="601.00" height="1" fill="rgba(200,204,212,0.17)"/>
<rect x="746.2" y="217.95" width="601.00" height="1" fill="rgba(200,204,212,0.17)"/>
<rect x="746.2" y="243.18" width="601.00" height="1" fill="rgba(200,204,212,0.17)"/>
<rect x="806.70" y="92.3" width="1.2" height="151.40" fill="rgba(200,204,212,0.15)"/>
<rect x="886.87" y="92.3" width="1.2" height="151.40" fill="rgba(200,204,212,0.15)"/>
<rect x="967.04" y="92.3" width="1.2" height="151.40" fill="rgba(200,204,212,0.15)"/>
<rect x="1047.21" y="92.3" width="1.2" height="151.40" fill="rgba(200,204,212,0.15)"/>
<rect x="1127.38" y="92.3" width="1.2" height="151.40" fill="rgba(200,204,212,0.15)"/>
<rect x="1207.55" y="92.3" width="1.2" height="151.40" fill="rgba(200,204,212,0.15)"/>
<rect x="1287.72" y="92.3" width="1.2" height="151.40" fill="rgba(200,204,212,0.15)"/>
<path d="M746.20,121.71 L746.71,121.56 L747.38,121.72 L748.05,121.49 L748.72,121.37 L749.39,121.55 L750.06,121.87 L750.73,121.73 L751.40,121.65 L751.61,121.44 L752.07,121.22 L752.74,121.41 L753.41,121.19 L754.08,121.08 L754.75,121.00 L755.42,121.04 L756.09,121.52 L756.76,121.42 L757.43,121.37 L758.10,121.33 L758.58,121.09 L758.77,120.85 L759.44,120.85 L760.11,120.99 L760.78,120.98 L761.45,120.99 L762.12,120.92 L762.79,120.27 L763.22,120.51 L763.46,120.52 L764.13,120.39 L764.80,120.09 L765.47,119.68 L766.14,119.71 L766.71,119.58 L766.81,119.29 L767.48,119.89 L768.15,119.85 L768.82,119.62 L769.49,119.44 L770.16,119.88 L770.83,119.63 L771.50,119.86 L772.17,119.83 L772.51,119.58 L772.84,119.64 L773.51,119.67 L774.18,119.90 L774.85,119.88 L775.52,119.79 L776.19,119.99 L776.86,120.46 L777.16,120.28 L777.53,119.83 L778.20,119.60 L778.87,119.80 L779.54,119.33 L780.21,119.29 L780.64,119.12 L780.88,119.10 L781.55,119.02 L782.22,119.51 L782.89,118.94 L783.56,119.11 L784.23,118.98 L784.90,119.30 L785.57,119.06 L786.24,119.13 L786.91,119.42 L787.58,119.13 L788.25,119.31 L788.92,119.57 L789.59,119.01 L790.26,118.99 L790.93,119.13 L791.60,119.53 L792.25,119.35 L792.27,119.43 L792.94,119.14 L793.61,119.19 L794.28,119.06 L794.95,119.24 L795.62,118.92 L796.29,119.38 L796.96,119.50 L797.63,119.52 L798.30,119.35 L798.97,119.49 L799.64,118.79 L800.31,118.97 L800.38,119.12 L800.98,119.42 L801.65,119.25 L802.32,118.96 L802.99,119.31 L803.66,119.05 L804.33,119.16 L805.00,118.75 L805.67,118.64 L806.34,118.79 L807.01,118.53 L807.58,118.77 L807.68,118.69 L808.35,119.18 L809.02,118.80 L809.69,118.64 L810.36,118.74 L810.83,119.12 L811.03,118.78 L811.70,118.89 L812.37,118.25 L813.04,117.86 L813.15,117.96 L813.71,117.70 L814.38,118.37 L815.05,118.01 L815.72,117.89 L816.39,117.82 L817.06,117.86 L817.73,117.98 L818.40,118.38 L819.07,118.04 L819.74,118.00 L820.41,118.36 L821.08,118.23 L821.28,118.42 L821.75,118.54 L822.42,117.58 L823.09,117.54 L823.60,117.26 L823.76,117.56 L824.43,117.75 L825.10,118.61 L825.34,118.42 L825.77,118.20 L826.44,117.71 L827.11,117.51 L827.78,116.92 L828.24,117.03 L828.45,116.97 L829.12,116.83 L829.79,117.28 L830.46,117.23 L831.13,116.98 L831.80,116.63 L832.47,116.78 L833.14,116.76 L833.81,116.72 L834.48,116.73 L835.15,117.18 L835.82,116.64 L836.49,116.57 L837.16,117.19 L837.83,116.91 L838.50,117.21 L839.17,116.78 L839.84,117.12 L840.51,116.93 L841.18,117.02 L841.85,116.98 L842.18,116.80 L842.52,116.77 L843.19,116.44 L843.86,116.49 L844.53,116.93 L845.20,116.91 L845.87,116.89 L846.54,116.43 L847.21,116.62 L847.88,116.69 L848.55,116.53 L849.22,116.62 L849.89,116.37 L850.30,116.33 L850.56,116.43 L851.23,116.42 L851.90,116.08 L852.57,116.52 L853.24,116.51 L853.91,115.84 L854.58,116.46 L855.25,116.42 L855.92,116.17 L856.59,115.69 L857.26,116.27 L857.93,115.68 L858.60,116.25 L859.27,116.00 L859.59,115.87 L859.94,115.56 L860.61,115.66 L861.28,116.02 L861.95,115.99 L862.62,116.14 L863.29,116.30 L863.96,115.81 L864.63,115.68 L865.30,116.36 L865.97,115.73 L866.64,116.37 L867.31,115.85 L867.98,116.37 L868.65,116.37 L869.32,116.46 L869.99,116.25 L870.66,116.51 L871.33,116.04 L872.00,116.40 L872.67,116.18 L873.34,116.61 L873.53,116.33 L874.01,116.49 L874.68,116.22 L875.35,116.20 L876.02,115.79 L876.69,115.74 L877.36,116.09 L878.03,115.96 L878.70,116.18 L879.33,115.87 L879.37,115.95 L880.04,115.67 L880.71,115.89 L881.38,116.23 L882.05,116.12 L882.72,115.80 L883.39,116.46 L884.06,116.51 L884.73,116.03 L885.40,116.42 L886.07,116.36 L886.74,116.71 L887.41,116.42 L887.46,116.56 L888.08,116.36 L888.75,116.53 L889.42,116.86 L890.09,116.22 L890.76,116.23 L891.43,116.58 L892.10,116.76 L892.77,116.48 L893.44,116.41 L894.11,116.70 L894.78,116.63 L895.45,116.11 L896.12,116.68 L896.79,116.17 L897.46,116.24 L898.13,116.61 L898.80,116.30 L899.47,116.56 L900.14,116.09 L900.81,116.59 L901.48,116.08 L902.15,116.04 L902.82,116.28 L903.49,116.16 L904.16,116.29 L904.83,116.54 L905.50,116.39 L906.17,115.87 L906.61,116.21 L906.84,116.07 L907.51,116.19 L908.18,116.11 L908.85,116.24 L909.52,116.03 L910.19,115.69 L910.86,115.78 L911.53,116.17 L912.20,115.78 L912.42,115.87 L912.87,115.70 L913.54,115.32 L913.58,114.94 L914.21,115.28 L914.88,115.58 L915.55,115.80 L915.90,115.87 L916.22,115.71 L916.89,116.10 L917.56,115.73 L918.23,116.01 L918.90,115.53 L919.57,115.89 L920.24,115.78 L920.91,115.61 L921.58,115.45 L922.25,115.18 L922.92,115.59 L923.59,115.25 L924.26,115.43 L924.93,115.00 L925.60,114.92 L926.27,114.92 L926.94,115.35 L927.61,114.85 L928.28,115.33 L928.95,114.90 L929.62,115.01 L929.83,114.94 L930.29,114.86 L930.96,115.09 L931.63,114.75 L932.30,115.01 L932.97,115.43 L933.64,114.92 L934.31,115.30 L934.98,115.11 L935.65,115.13 L936.32,114.96 L936.99,115.00 L937.66,115.71 L937.96,115.40 L938.33,115.60 L939.00,115.52 L939.67,115.45 L940.34,115.49 L941.01,114.85 L941.68,115.09 L942.35,114.96 L943.02,114.95 L943.69,115.14 L944.36,114.95 L945.03,115.03 L945.70,114.35 L946.37,114.67 L947.04,114.62 L947.25,114.47 L947.71,114.60 L948.38,114.45 L949.05,114.53 L949.72,114.08 L950.39,114.47 L951.06,114.02 L951.73,114.10 L952.40,114.24 L953.07,114.04 L953.74,113.69 L954.41,113.56 L955.08,113.57 L955.75,113.71 L956.42,113.91 L957.09,113.78 L957.76,113.35 L958.43,113.28 L958.86,113.31 L959.10,113.57 L959.77,113.27 L960.44,113.44 L961.11,113.23 L961.78,113.43 L962.45,113.77 L963.12,113.96 L963.79,113.99 L964.46,113.89 L964.67,114.01 L965.13,114.30 L965.80,114.02 L966.47,113.64 L967.14,113.53 L967.81,114.14 L968.48,114.11 L969.15,114.01 L969.82,113.74 L970.49,113.49 L971.16,113.28 L971.63,113.54 L971.83,113.41 L972.50,113.52 L973.17,114.16 L973.84,114.27 L974.51,114.32 L975.18,114.00 L975.85,114.20 L976.52,114.38 L977.19,114.98 L977.86,114.55 L978.53,115.13 L978.60,114.94 L979.20,115.34 L979.87,115.54 L980.54,116.14 L981.21,115.94 L981.88,116.43 L982.55,116.47 L983.22,116.73 L983.24,117.03 L983.89,116.75 L984.56,117.03 L985.23,116.95 L985.90,116.98 L986.57,117.71 L987.24,117.28 L987.91,117.77 L988.58,117.71 L989.25,117.79 L989.92,117.81 L990.21,117.72 L990.59,117.86 L991.26,117.47 L991.93,117.02 L992.53,116.56 L992.60,116.61 L993.27,116.69 L993.94,116.70 L994.61,116.57 L995.28,116.52 L995.95,116.26 L996.62,116.74 L997.29,116.47 L997.96,116.16 L998.63,116.22 L999.30,116.72 L999.50,116.45 L999.97,116.28 L1000.64,116.38 L1001.31,116.60 L1001.98,116.73 L1002.65,116.35 L1003.32,116.40 L1003.99,116.44 L1004.66,116.16 L1005.33,116.78 L1006.00,116.17 L1006.67,116.85 L1007.34,116.28 L1008.01,116.28 L1008.68,116.79 L1009.35,116.78 L1010.02,116.36 L1010.69,116.60 L1011.11,116.56 L1011.36,116.54 L1012.03,116.69 L1012.70,116.28 L1013.37,116.72 L1014.04,116.82 L1014.71,116.59 L1015.38,116.72 L1016.05,116.71 L1016.72,116.29 L1017.39,116.60 L1018.06,116.57 L1018.08,116.33 L1018.73,116.55 L1019.40,116.36 L1020.07,116.88 L1020.74,117.25 L1021.41,116.97 L1022.08,117.37 L1022.75,117.71 L1023.42,117.65 L1024.09,117.40 L1024.76,117.98 L1025.04,117.96 L1025.43,117.68 L1026.10,117.95 L1026.77,117.64 L1027.44,117.22 L1028.11,117.48 L1028.78,117.11 L1029.45,116.74 L1029.69,116.80 L1030.12,117.08 L1030.79,117.19 L1031.46,117.26 L1032.13,117.32 L1032.80,117.22 L1033.47,117.32 L1034.14,117.32 L1034.33,117.26 L1034.81,117.40 L1035.48,117.90 L1036.15,117.61 L1036.82,117.58 L1037.49,118.20 L1038.16,118.21 L1038.83,118.42 L1038.98,118.42 L1039.50,118.52 L1040.17,118.30 L1040.84,118.30 L1041.51,118.25 L1042.18,118.79 L1042.85,118.92 L1043.52,118.80 L1044.19,118.42 L1044.86,119.08 L1045.53,119.00 L1046.20,118.81 L1046.87,118.48 L1047.54,119.12 L1048.21,119.00 L1048.88,119.03 L1049.55,118.63 L1050.22,119.18 L1050.89,118.71 L1051.56,119.07 L1052.23,118.86 L1052.90,119.05 L1053.57,119.47 L1054.24,119.40 L1054.91,119.49 L1055.58,119.15 L1056.25,119.25 L1056.61,119.35 L1056.92,119.58 L1057.59,119.50 L1058.26,120.11 L1058.93,120.85 L1058.93,120.51 L1059.60,120.77 L1060.27,120.93 L1060.94,120.60 L1061.61,120.96 L1062.28,121.10 L1062.95,121.12 L1063.62,121.01 L1064.29,120.89 L1064.96,120.86 L1065.63,121.56 L1066.30,121.67 L1066.97,121.28 L1067.64,121.70 L1068.31,121.53 L1068.98,121.76 L1069.65,121.99 L1070.32,121.70 L1070.99,121.99 L1071.66,121.80 L1072.33,122.06 L1073.00,121.80 L1073.67,122.04 L1074.03,122.25 L1074.34,122.13 L1075.01,122.65 L1075.68,122.15 L1076.35,122.67 L1077.02,122.25 L1077.69,122.97 L1078.36,122.45 L1079.03,122.46 L1079.70,122.61 L1080.37,123.20 L1081.04,123.08 L1081.71,123.30 L1082.38,123.09 L1083.05,122.88 L1083.72,123.11 L1084.39,123.26 L1085.06,123.71 L1085.73,123.18 L1086.40,123.31 L1087.07,123.80 L1087.74,123.35 L1088.41,124.03 L1089.08,123.61 L1089.75,123.87 L1090.42,124.01 L1091.09,124.25 L1091.44,123.99 L1091.76,123.76 L1092.43,124.46 L1093.10,124.13 L1093.77,124.66 L1094.44,124.31 L1095.11,124.99 L1095.78,124.72 L1096.45,124.88 L1097.12,124.91 L1097.79,125.26 L1098.46,125.41 L1099.13,126.03 L1099.80,125.91 L1100.47,125.88 L1101.14,126.48 L1101.81,126.04 L1102.48,126.22 L1103.06,126.55 L1103.15,126.89 L1103.82,127.00 L1104.49,126.91 L1105.16,127.23 L1105.83,126.68 L1106.50,127.40 L1107.17,127.36 L1107.84,127.45 L1108.51,127.68 L1109.18,127.26 L1109.85,127.44 L1110.52,127.50 L1111.19,127.85 L1111.86,128.01 L1112.34,128.06 L1112.53,125.91 L1113.20,117.82 L1113.27,117.03 L1113.87,124.27 L1114.20,128.06 L1114.54,128.40 L1115.21,128.54 L1115.88,128.21 L1116.55,128.49 L1116.99,128.87 L1117.22,128.67 L1117.89,128.68 L1118.56,128.92 L1119.23,128.65 L1119.90,128.96 L1120.57,128.76 L1121.24,128.77 L1121.91,129.02 L1122.58,129.19 L1123.25,128.65 L1123.92,128.76 L1124.59,129.22 L1125.26,128.66 L1125.93,128.53 L1126.28,128.87 L1126.60,128.67 L1127.27,129.18 L1127.94,129.17 L1128.61,129.37 L1129.28,129.11 L1129.95,128.83 L1130.62,129.08 L1131.29,129.43 L1131.96,129.25 L1132.63,129.12 L1133.30,129.34 L1133.97,129.46 L1134.64,129.44 L1135.31,129.55 L1135.98,129.39 L1136.65,129.36 L1137.32,129.96 L1137.89,129.80 L1137.99,129.97 L1138.66,129.75 L1139.33,129.54 L1140.00,129.68 L1140.67,129.88 L1141.34,130.13 L1142.01,129.84 L1142.68,130.20 L1143.35,129.89 L1144.02,129.65 L1144.69,129.97 L1145.36,129.97 L1146.03,129.98 L1146.70,130.08 L1147.37,129.58 L1148.04,129.89 L1148.71,130.16 L1149.38,129.69 L1150.05,129.63 L1150.72,129.74 L1151.39,129.83 L1152.06,129.94 L1152.73,129.86 L1153.40,130.10 L1154.07,129.78 L1154.74,129.91 L1155.30,130.03 L1155.41,130.16 L1156.08,130.09 L1156.75,130.42 L1157.42,130.43 L1158.09,129.97 L1158.76,130.05 L1159.43,130.22 L1160.10,130.26 L1160.77,130.15 L1161.44,130.54 L1162.11,130.09 L1162.78,130.31 L1163.45,130.08 L1164.12,130.66 L1164.79,130.48 L1165.46,130.79 L1166.13,130.21 L1166.80,130.64 L1167.47,130.59 L1168.14,130.22 L1168.81,130.80 L1169.48,130.87 L1170.15,130.32 L1170.82,130.97 L1171.49,130.88 L1172.16,130.78 L1172.72,130.73 L1172.83,130.77 L1173.50,130.60 L1174.17,130.49 L1174.84,130.82 L1175.51,131.14 L1176.18,130.70 L1176.85,130.93 L1177.13,130.96 L1177.52,127.51 L1177.95,123.99 L1178.19,126.13 L1178.76,130.73 L1178.86,131.07 L1179.53,131.07 L1180.20,130.70 L1180.87,130.84 L1181.54,130.60 L1182.21,131.04 L1182.88,131.33 L1183.55,131.38 L1184.22,130.88 L1184.33,131.19 L1184.89,131.15 L1185.56,130.89 L1186.23,131.14 L1186.90,131.49 L1187.57,131.04 L1188.24,131.44 L1188.91,131.52 L1189.58,131.42 L1190.25,130.98 L1190.92,131.49 L1191.59,131.50 L1192.26,131.55 L1192.93,130.84 L1193.60,130.84 L1194.27,131.04 L1194.94,131.21 L1195.61,131.14 L1195.94,131.19 L1196.28,130.89 L1196.95,131.25 L1197.62,131.24 L1198.29,131.18 L1198.96,131.07 L1199.63,131.07 L1200.30,131.14 L1200.97,130.66 L1201.64,130.90 L1202.31,130.65 L1202.98,130.60 L1203.65,131.05 L1204.32,130.70 L1204.99,130.68 L1205.66,130.61 L1206.33,130.80 L1206.61,130.73 L1207.00,130.47 L1207.67,130.87 L1208.34,130.49 L1209.01,131.15 L1209.68,130.60 L1210.35,131.07 L1211.02,130.94 L1211.69,130.88 L1212.36,130.82 L1212.42,130.96 L1213.03,127.04 L1213.35,125.16 L1213.70,127.46 L1214.27,130.73 L1214.37,130.75 L1215.04,130.75 L1215.71,130.55 L1216.38,130.82 L1216.60,130.73 L1217.05,125.53 L1217.29,123.07 L1217.72,126.56 L1218.22,130.73 L1218.39,130.85 L1219.06,130.84 L1219.73,130.94 L1220.40,131.00 L1221.07,130.79 L1221.74,131.41 L1222.41,131.28 L1222.87,131.19 L1223.08,131.33 L1223.75,131.43 L1224.42,130.99 L1225.09,130.84 L1225.76,130.75 L1226.43,130.69 L1227.10,130.60 L1227.28,130.73 L1227.77,127.38 L1228.09,125.39 L1228.44,127.31 L1228.90,130.38 L1229.11,130.37 L1229.78,130.23 L1230.45,130.29 L1231.12,130.50 L1231.79,130.25 L1232.46,130.64 L1233.13,130.59 L1233.80,130.26 L1234.47,130.62 L1235.06,130.38 L1235.14,129.16 L1235.81,120.77 L1235.87,120.28 L1236.48,125.61 L1237.03,129.80 L1237.15,129.47 L1237.82,129.47 L1238.49,130.11 L1239.16,129.50 L1239.83,129.99 L1240.50,129.94 L1241.17,129.72 L1241.84,129.76 L1242.51,130.30 L1243.18,129.90 L1243.85,129.81 L1244.52,129.98 L1244.93,130.03 L1245.19,130.18 L1245.86,129.83 L1246.53,129.64 L1247.20,130.11 L1247.87,129.57 L1248.54,129.50 L1249.21,129.43 L1249.88,130.10 L1250.55,129.66 L1251.22,129.84 L1251.89,129.67 L1252.56,129.93 L1253.23,129.43 L1253.90,129.40 L1254.57,129.60 L1255.24,129.07 L1255.91,129.29 L1256.58,129.54 L1257.25,129.37 L1257.92,129.27 L1258.59,129.55 L1258.86,129.22 L1259.26,129.19 L1259.93,129.44 L1260.60,129.22 L1261.27,129.03 L1261.94,129.28 L1262.61,129.19 L1263.28,129.08 L1263.95,129.30 L1264.62,129.22 L1265.29,129.49 L1265.96,129.72 L1266.63,129.77 L1267.30,129.89 L1267.97,129.51 L1268.64,129.80 L1269.31,129.99 L1269.98,129.66 L1270.65,130.07 L1271.32,129.51 L1271.99,130.13 L1272.66,130.14 L1273.33,130.24 L1274.00,130.16 L1274.67,130.11 L1275.34,129.94 L1276.01,130.18 L1276.28,130.03 L1276.68,130.30 L1277.35,130.09 L1278.02,130.12 L1278.69,130.34 L1279.36,129.88 L1280.03,129.91 L1280.70,129.70 L1281.37,130.30 L1282.04,130.13 L1282.71,130.16 L1283.38,129.84 L1284.05,129.80 L1284.72,130.02 L1285.39,130.30 L1286.06,129.93 L1286.73,129.98 L1287.40,129.97 L1288.07,130.28 L1288.74,129.76 L1289.41,130.30 L1290.08,129.68 L1290.75,130.18 L1291.42,130.22 L1292.09,130.01 L1292.76,130.21 L1293.43,129.87 L1293.69,130.03 L1294.10,129.79 L1294.77,129.97 L1295.44,129.93 L1296.11,130.28 L1296.78,130.20 L1297.45,130.30 L1298.12,130.55 L1298.79,130.43 L1299.46,130.47 L1300.13,130.63 L1300.80,130.62 L1301.47,130.52 L1302.14,130.26 L1302.81,130.40 L1303.48,130.61 L1304.15,130.66 L1304.82,130.76 L1305.49,130.68 L1306.16,130.65 L1306.83,130.38 L1307.50,130.67 L1308.17,130.39 L1308.84,130.74 L1309.51,130.43 L1310.18,130.34 L1310.85,131.05 L1311.11,130.73 L1311.52,131.00 L1312.19,130.61 L1312.86,130.44 L1313.53,131.01 L1314.20,130.99 L1314.87,130.56 L1315.54,131.05 L1316.21,131.07 L1316.88,130.90 L1317.55,130.69 L1318.22,130.55 L1318.89,130.57 L1319.56,130.86 L1320.23,131.07 L1320.90,131.02 L1321.57,130.74 L1322.24,131.17 L1322.72,130.96 L1322.91,130.64 L1323.58,131.01 L1324.25,130.68 L1324.92,130.53 L1325.59,130.64 L1326.26,131.06 L1326.93,130.62 L1327.60,130.45 L1328.27,130.76 L1328.94,130.64 L1329.61,130.78 L1330.28,130.76 L1330.95,130.84 L1331.62,130.96 L1332.29,130.53 L1332.96,130.72 L1333.63,130.32 L1334.30,130.40 L1334.97,130.26 L1335.64,130.79 L1336.31,130.39 L1336.98,130.64 L1337.65,130.73 L1338.32,130.36 L1338.99,130.21 L1339.66,130.21 L1340.14,130.38 L1340.33,130.33 L1341.00,130.08 L1341.67,129.69 L1342.34,130.08 L1343.01,129.76 L1343.68,129.76 L1344.35,129.58 L1344.78,129.22 L1345.02,129.47 L1345.69,129.80 L1346.40,129.80 L1346.4,243.7 L746.2,243.7Z" fill="#73bf69" fill-opacity="0.10"/>
<clipPath id="clip2"><rect x="746.80" y="92.3" width="1.80" height="153.39999999999998"/><rect x="750.10" y="92.3" width="8.70" height="153.39999999999998"/><rect x="759.90" y="92.3" width="1.90" height="153.39999999999998"/><rect x="763.10" y="92.3" width="0.90" height="153.39999999999998"/><rect x="768.80" y="92.3" width="1.50" height="153.39999999999998"/><rect x="772.90" y="92.3" width="10.70" height="153.39999999999998"/><rect x="785.10" y="92.3" width="4.80" height="153.39999999999998"/><rect x="792.00" y="92.3" width="6.90" height="153.39999999999998"/><rect x="800.30" y="92.3" width="3.30" height="153.39999999999998"/><rect x="806.90" y="92.3" width="9.30" height="153.39999999999998"/><rect x="818.80" y="92.3" width="6.30" height="153.39999999999998"/><rect x="826.30" y="92.3" width="3.60" height="153.39999999999998"/><rect x="831.70" y="92.3" width="6.30" height="153.39999999999998"/><rect x="841.70" y="92.3" width="2.60" height="153.39999999999998"/><rect x="845.10" y="92.3" width="14.80" height="153.39999999999998"/><rect x="861.00" y="92.3" width="1.90" height="153.39999999999998"/><rect x="864.00" y="92.3" width="4.10" height="153.39999999999998"/><rect x="870.80" y="92.3" width="13.20" height="153.39999999999998"/><rect x="885.10" y="92.3" width="6.90" height="153.39999999999998"/><rect x="893.40" y="92.3" width="1.70" height="153.39999999999998"/><rect x="896.90" y="92.3" width="2.20" height="153.39999999999998"/><rect x="900.30" y="92.3" width="1.10" height="153.39999999999998"/><rect x="904.10" y="92.3" width="11.00" height="153.39999999999998"/><rect x="916.40" y="92.3" width="6.80" height="153.39999999999998"/><rect x="925.80" y="92.3" width="7.00" height="153.39999999999998"/><rect x="933.90" y="92.3" width="5.60" height="153.39999999999998"/><rect x="940.60" y="92.3" width="11.40" height="153.39999999999998"/><rect x="953.00" y="92.3" width="1.40" height="153.39999999999998"/><rect x="955.80" y="92.3" width="3.40" height="153.39999999999998"/><rect x="960.10" y="92.3" width="1.70" height="153.39999999999998"/><rect x="963.10" y="92.3" width="1.60" height="153.39999999999998"/><rect x="966.60" y="92.3" width="5.90" height="153.39999999999998"/><rect x="978.80" y="92.3" width="4.30" height="153.39999999999998"/><rect x="984.60" y="92.3" width="7.50" height="153.39999999999998"/><rect x="993.00" y="92.3" width="2.80" height="153.39999999999998"/><rect x="996.90" y="92.3" width="7.40" height="153.39999999999998"/><rect x="1005.40" y="92.3" width="1.10" height="153.39999999999998"/><rect x="1007.80" y="92.3" width="5.00" height="153.39999999999998"/><rect x="1013.90" y="92.3" width="1.90" height="153.39999999999998"/><rect x="1021.00" y="92.3" width="1.80" height="153.39999999999998"/><rect x="1025.80" y="92.3" width="4.10" height="153.39999999999998"/><rect x="1031.00" y="92.3" width="1.80" height="153.39999999999998"/><rect x="1033.90" y="92.3" width="11.30" height="153.39999999999998"/><rect x="1047.30" y="92.3" width="3.40" height="153.39999999999998"/><rect x="1052.50" y="92.3" width="3.30" height="153.39999999999998"/><rect x="1061.00" y="92.3" width="1.10" height="153.39999999999998"/><rect x="1069.90" y="92.3" width="5.20" height="153.39999999999998"/><rect x="1076.90" y="92.3" width="7.80" height="153.39999999999998"/><rect x="1086.20" y="92.3" width="1.80" height="153.39999999999998"/><rect x="1088.80" y="92.3" width="1.10" height="153.39999999999998"/><rect x="1092.00" y="92.3" width="1.20" height="153.39999999999998"/><rect x="1095.10" y="92.3" width="1.80" height="153.39999999999998"/><rect x="1104.00" y="92.3" width="14.00" height="153.39999999999998"/><rect x="1119.10" y="92.3" width="2.60" height="153.39999999999998"/><rect x="1123.20" y="92.3" width="0.70" height="153.39999999999998"/><rect x="1128.00" y="92.3" width="10.70" height="153.39999999999998"/><rect x="1140.20" y="92.3" width="0.80" height="153.39999999999998"/><rect x="1142.10" y="92.3" width="1.10" height="153.39999999999998"/><rect x="1144.70" y="92.3" width="1.20" height="153.39999999999998"/><rect x="1148.10" y="92.3" width="3.90" height="153.39999999999998"/><rect x="1154.00" y="92.3" width="2.20" height="153.39999999999998"/><rect x="1158.80" y="92.3" width="2.60" height="153.39999999999998"/><rect x="1163.40" y="92.3" width="1.70" height="153.39999999999998"/><rect x="1166.90" y="92.3" width="3.40" height="153.39999999999998"/><rect x="1171.40" y="92.3" width="1.50" height="153.39999999999998"/><rect x="1176.90" y="92.3" width="2.00" height="153.39999999999998"/><rect x="1182.10" y="92.3" width="19.30" height="153.39999999999998"/><rect x="1203.10" y="92.3" width="1.70" height="153.39999999999998"/><rect x="1206.90" y="92.3" width="1.50" height="153.39999999999998"/><rect x="1209.90" y="92.3" width="5.20" height="153.39999999999998"/><rect x="1217.30" y="92.3" width="11.70" height="153.39999999999998"/><rect x="1230.20" y="92.3" width="5.00" height="153.39999999999998"/><rect x="1236.90" y="92.3" width="6.30" height="153.39999999999998"/><rect x="1244.70" y="92.3" width="0.90" height="153.39999999999998"/><rect x="1247.10" y="92.3" width="1.90" height="153.39999999999998"/><rect x="1250.70" y="92.3" width="1.30" height="153.39999999999998"/><rect x="1255.50" y="92.3" width="8.60" height="153.39999999999998"/><rect x="1266.90" y="92.3" width="4.10" height="153.39999999999998"/><rect x="1272.30" y="92.3" width="4.10" height="153.39999999999998"/><rect x="1277.70" y="92.3" width="1.10" height="153.39999999999998"/><rect x="1280.10" y="92.3" width="9.60" height="153.39999999999998"/><rect x="1291.40" y="92.3" width="2.00" height="153.39999999999998"/><rect x="1295.10" y="92.3" width="1.80" height="153.39999999999998"/><rect x="1298.00" y="92.3" width="1.10" height="153.39999999999998"/><rect x="1301.00" y="92.3" width="5.20" height="153.39999999999998"/><rect x="1307.80" y="92.3" width="5.80" height="153.39999999999998"/><rect x="1314.70" y="92.3" width="1.10" height="153.39999999999998"/><rect x="1316.90" y="92.3" width="3.70" height="153.39999999999998"/><rect x="1321.70" y="92.3" width="1.50" height="153.39999999999998"/><rect x="1325.10" y="92.3" width="1.10" height="153.39999999999998"/><rect x="1328.00" y="92.3" width="1.90" height="153.39999999999998"/><rect x="1331.70" y="92.3" width="3.00" height="153.39999999999998"/><rect x="1335.80" y="92.3" width="3.30" height="153.39999999999998"/><rect x="1340.20" y="92.3" width="6.20" height="153.39999999999998"/></clipPath>
<clipPath id="clip2g"><rect x="764.30" y="92.3" width="4.20" height="153.39999999999998"/><rect x="770.60" y="92.3" width="2.00" height="153.39999999999998"/><rect x="790.20" y="92.3" width="1.50" height="153.39999999999998"/><rect x="803.90" y="92.3" width="2.70" height="153.39999999999998"/><rect x="816.50" y="92.3" width="2.00" height="153.39999999999998"/><rect x="830.20" y="92.3" width="1.20" height="153.39999999999998"/><rect x="838.30" y="92.3" width="3.10" height="153.39999999999998"/><rect x="868.40" y="92.3" width="2.10" height="153.39999999999998"/><rect x="895.40" y="92.3" width="1.20" height="153.39999999999998"/><rect x="901.70" y="92.3" width="2.10" height="153.39999999999998"/><rect x="923.50" y="92.3" width="2.00" height="153.39999999999998"/><rect x="965.00" y="92.3" width="1.30" height="153.39999999999998"/><rect x="972.80" y="92.3" width="5.70" height="153.39999999999998"/><rect x="1016.10" y="92.3" width="4.60" height="153.39999999999998"/><rect x="1023.10" y="92.3" width="2.40" height="153.39999999999998"/><rect x="1045.50" y="92.3" width="1.50" height="153.39999999999998"/><rect x="1051.00" y="92.3" width="1.20" height="153.39999999999998"/><rect x="1056.10" y="92.3" width="4.60" height="153.39999999999998"/><rect x="1062.40" y="92.3" width="7.20" height="153.39999999999998"/><rect x="1075.40" y="92.3" width="1.20" height="153.39999999999998"/><rect x="1090.20" y="92.3" width="1.50" height="153.39999999999998"/><rect x="1093.50" y="92.3" width="1.30" height="153.39999999999998"/><rect x="1097.20" y="92.3" width="6.50" height="153.39999999999998"/><rect x="1124.20" y="92.3" width="3.50" height="153.39999999999998"/><rect x="1146.20" y="92.3" width="1.60" height="153.39999999999998"/><rect x="1152.30" y="92.3" width="1.40" height="153.39999999999998"/><rect x="1156.50" y="92.3" width="2.00" height="153.39999999999998"/><rect x="1161.70" y="92.3" width="1.40" height="153.39999999999998"/><rect x="1165.40" y="92.3" width="1.20" height="153.39999999999998"/><rect x="1173.20" y="92.3" width="3.40" height="153.39999999999998"/><rect x="1179.20" y="92.3" width="2.60" height="153.39999999999998"/><rect x="1205.10" y="92.3" width="1.50" height="153.39999999999998"/><rect x="1215.40" y="92.3" width="1.60" height="153.39999999999998"/><rect x="1235.50" y="92.3" width="1.10" height="153.39999999999998"/><rect x="1249.30" y="92.3" width="1.10" height="153.39999999999998"/><rect x="1252.30" y="92.3" width="2.90" height="153.39999999999998"/><rect x="1264.40" y="92.3" width="2.20" height="153.39999999999998"/><rect x="1290.00" y="92.3" width="1.10" height="153.39999999999998"/><rect x="1299.40" y="92.3" width="1.30" height="153.39999999999998"/><rect x="1323.50" y="92.3" width="1.30" height="153.39999999999998"/><rect x="1326.50" y="92.3" width="1.20" height="153.39999999999998"/><rect x="1330.20" y="92.3" width="1.20" height="153.39999999999998"/></clipPath>
<g clip-path="url(#clip2)"><path d="M746.20,163.47 L748.18,164.09 L748.77,164.08 L748.85,164.20 L749.52,166.88 L750.18,169.09 L750.19,169.06 L750.86,175.50 L751.53,182.25 L751.74,183.96 L752.20,187.46 L752.84,192.57 L752.87,192.27 L753.54,185.48 L754.09,180.05 L754.21,180.38 L754.88,182.32 L755.19,183.18 L755.55,180.68 L756.22,176.73 L756.89,172.10 L756.91,172.22 L757.56,171.27 L758.23,170.32 L758.79,169.87 L758.90,169.80 L759.57,170.09 L760.24,170.56 L760.91,170.52 L761.14,170.66 L761.58,170.16 L762.25,169.79 L762.92,169.71 L763.48,169.09 L763.59,168.82 L764.26,168.76 L764.93,168.30 L765.60,168.11 L766.27,167.61 L766.61,167.52 L766.94,167.54 L767.61,167.27 L768.28,167.18 L768.95,167.14 L769.62,166.81 L769.75,166.74 L770.29,166.43 L770.96,166.22 L771.63,166.49 L772.30,166.10 L772.88,165.96 L772.97,166.05 L773.64,168.10 L774.13,169.09 L774.31,171.17 L774.98,178.62 L775.65,186.06 L775.69,186.31 L776.32,181.79 L776.99,177.14 L777.26,175.35 L777.66,174.53 L778.33,172.48 L779.00,171.12 L779.14,170.66 L779.67,170.01 L780.34,169.75 L781.01,169.19 L781.02,169.09 L781.68,172.65 L782.35,175.95 L782.58,176.92 L783.02,175.45 L783.52,173.79 L783.69,173.21 L784.36,171.51 L785.03,170.02 L785.40,169.09 L785.70,169.25 L786.37,169.36 L786.97,169.87 L787.04,170.51 L787.71,174.08 L788.22,176.92 L788.38,176.36 L789.05,173.44 L789.72,170.77 L789.78,170.66 L790.39,170.67 L791.06,171.11 L791.66,171.44 L791.73,171.64 L792.40,174.74 L793.07,177.73 L793.23,178.48 L793.74,176.72 L794.41,174.23 L794.48,173.79 L795.08,177.85 L795.75,182.65 L796.05,184.75 L796.42,189.70 L797.09,199.05 L797.14,199.62 L797.76,196.75 L798.43,193.01 L798.71,191.79 L799.10,190.74 L799.77,188.49 L800.27,187.09 L800.44,187.62 L801.11,191.01 L801.78,193.81 L801.84,194.14 L802.45,196.43 L803.12,199.25 L803.41,200.40 L803.79,200.36 L804.46,200.62 L805.13,200.81 L805.80,200.96 L806.47,201.21 L806.54,201.18 L807.14,196.90 L807.79,192.57 L807.81,192.39 L808.48,192.75 L809.15,193.14 L809.20,193.36 L809.82,191.20 L810.49,188.80 L811.16,186.70 L811.23,186.31 L811.83,184.69 L812.50,182.99 L813.17,181.32 L813.27,180.83 L813.84,179.89 L814.51,179.03 L815.15,178.48 L815.18,178.27 L815.85,177.72 L816.52,177.14 L817.19,176.56 L817.50,176.14 L817.86,176.18 L818.53,176.71 L819.20,176.46 L819.84,176.92 L819.87,177.08 L820.54,176.54 L821.21,176.65 L821.88,176.00 L822.19,176.14 L822.55,176.13 L823.22,175.58 L823.89,175.24 L824.54,174.57 L824.56,174.61 L825.23,174.41 L825.90,174.80 L826.57,174.54 L827.24,174.36 L827.67,174.57 L827.91,174.78 L828.58,175.18 L829.25,175.61 L829.92,175.90 L830.02,176.14 L830.59,176.52 L831.26,177.42 L831.93,178.03 L832.37,178.48 L832.60,178.14 L833.27,177.85 L833.94,177.54 L834.61,177.09 L834.72,176.92 L835.28,176.34 L835.95,175.63 L836.62,174.94 L837.06,174.57 L837.29,174.13 L837.96,173.22 L838.63,172.45 L839.30,171.39 L839.41,171.44 L839.97,171.77 L840.64,172.02 L841.31,172.23 L841.45,172.22 L841.98,172.65 L842.65,173.66 L843.32,174.53 L843.33,174.57 L843.99,173.25 L844.66,172.57 L845.21,171.44 L845.33,171.57 L846.00,171.44 L846.67,171.54 L847.24,171.44 L847.34,172.25 L848.01,178.49 L848.34,181.61 L848.68,181.19 L849.35,180.46 L849.59,180.05 L850.02,183.17 L850.69,187.54 L851.15,191.01 L851.36,192.49 L852.03,197.20 L852.70,201.67 L852.72,201.65 L853.37,201.92 L854.04,202.00 L854.71,201.68 L855.38,201.76 L856.05,201.94 L856.63,201.97 L856.72,201.30 L857.39,194.30 L857.73,191.01 L858.06,189.22 L858.73,185.15 L859.30,181.61 L859.40,181.41 L860.07,180.18 L860.74,179.06 L861.33,177.70 L861.41,177.79 L862.08,177.10 L862.75,176.92 L863.42,176.15 L863.68,176.14 L864.09,175.93 L864.76,176.00 L865.43,175.72 L866.03,175.35 L866.10,175.22 L866.77,174.87 L867.44,174.70 L867.59,174.57 L868.11,174.74 L868.78,174.66 L869.45,174.79 L870.12,174.68 L870.79,174.73 L871.46,174.62 L871.51,174.57 L872.13,174.71 L872.80,174.97 L873.47,175.22 L873.86,175.35 L874.14,175.17 L874.81,174.88 L875.48,174.15 L876.15,173.60 L876.20,173.79 L876.82,174.32 L877.49,174.53 L878.16,175.05 L878.55,175.35 L878.83,174.97 L879.50,174.88 L880.17,174.16 L880.84,173.72 L880.90,173.79 L881.51,174.19 L882.18,174.32 L882.78,174.57 L882.85,175.53 L883.52,185.33 L883.72,187.88 L884.19,188.79 L884.86,190.10 L885.28,191.01 L885.53,189.09 L886.20,183.26 L886.38,181.61 L886.87,180.25 L887.54,177.99 L887.95,176.92 L888.21,176.89 L888.88,176.34 L889.55,176.01 L890.22,175.33 L890.29,175.35 L890.89,175.49 L891.56,175.50 L892.23,175.30 L892.64,175.35 L892.90,175.69 L893.57,176.43 L894.24,177.20 L894.91,177.84 L894.99,177.70 L895.58,177.70 L896.25,177.20 L896.92,177.27 L897.59,177.14 L898.13,176.92 L898.26,176.61 L898.93,176.30 L899.60,176.00 L900.27,175.51 L900.94,175.02 L901.26,174.57 L901.61,174.37 L902.28,174.62 L902.95,174.75 L903.62,174.65 L904.29,174.48 L904.71,174.57 L904.96,175.63 L905.63,179.42 L905.96,180.83 L906.30,183.60 L906.97,188.53 L907.52,192.57 L907.64,193.01 L908.31,196.03 L908.98,198.82 L909.40,200.40 L909.65,201.39 L910.32,203.68 L910.66,204.78 L910.99,201.39 L911.66,194.84 L911.91,192.57 L912.33,189.76 L913.00,185.53 L913.00,185.44 L913.67,187.55 L914.34,189.36 L914.57,190.23 L915.01,191.45 L915.68,192.94 L916.14,194.14 L916.35,193.09 L917.02,190.46 L917.69,187.84 L917.70,187.88 L918.36,184.52 L919.03,181.35 L919.27,180.05 L919.70,182.70 L920.37,187.12 L920.83,190.23 L921.04,189.06 L921.71,185.65 L922.38,182.58 L922.40,182.40 L923.05,180.89 L923.72,179.52 L923.96,179.27 L924.39,179.15 L925.06,179.02 L925.73,178.84 L926.31,178.48 L926.40,179.10 L927.07,183.17 L927.56,186.31 L927.74,188.13 L928.41,194.09 L929.08,199.99 L929.13,200.40 L929.75,199.81 L930.42,199.32 L930.69,198.84 L931.09,200.48 L931.76,202.80 L932.26,204.32 L932.43,203.35 L933.10,200.43 L933.77,197.45 L933.83,197.27 L934.44,192.68 L934.92,189.44 L935.11,188.90 L935.78,186.20 L936.45,184.27 L936.49,183.96 L937.12,183.37 L937.79,182.71 L938.46,181.94 L938.84,181.61 L939.13,182.03 L939.80,182.30 L940.47,182.91 L941.14,183.37 L941.18,183.18 L941.81,182.44 L942.48,181.69 L943.15,180.55 L943.53,180.05 L943.82,180.13 L944.49,180.70 L945.10,180.83 L945.16,180.96 L945.83,181.96 L946.50,183.27 L947.17,184.28 L947.45,184.75 L947.84,183.76 L948.51,182.78 L949.01,181.61 L949.18,181.22 L949.85,179.91 L950.52,178.14 L951.05,176.92 L951.19,177.05 L951.86,176.33 L952.53,175.90 L953.20,175.66 L953.71,175.35 L953.87,175.49 L954.54,175.51 L955.21,175.43 L955.88,175.16 L956.55,175.30 L957.22,175.12 L957.62,175.35 L957.89,175.33 L958.56,175.73 L959.23,175.54 L959.90,175.83 L960.57,175.91 L961.24,175.78 L961.91,176.16 L962.32,176.14 L962.58,175.97 L963.25,176.13 L963.92,176.44 L964.59,176.33 L965.26,176.86 L965.93,176.70 L966.60,176.91 L967.02,176.92 L967.27,177.11 L967.94,176.57 L968.61,176.90 L969.28,176.31 L969.95,176.48 L970.62,176.39 L971.29,176.45 L971.71,176.14 L971.96,176.06 L972.63,176.36 L973.30,176.21 L973.97,176.12 L974.64,175.97 L975.31,175.84 L975.98,175.99 L976.41,176.14 L976.65,175.87 L977.32,175.63 L977.99,175.84 L978.66,175.10 L979.33,175.11 L980.00,174.19 L980.32,174.57 L980.67,174.17 L981.34,174.80 L982.01,175.00 L982.68,174.36 L983.35,174.06 L984.02,174.28 L984.69,174.42 L985.02,174.57 L985.36,174.68 L986.03,175.40 L986.70,175.62 L987.37,176.50 L988.04,177.15 L988.15,176.92 L988.71,178.36 L989.38,179.65 L989.72,180.05 L990.05,179.63 L990.72,178.27 L991.28,177.70 L991.39,178.02 L992.06,177.08 L992.73,177.37 L993.40,176.58 L994.07,176.45 L994.41,176.14 L994.74,176.13 L995.41,176.30 L996.08,175.96 L996.75,176.22 L997.42,176.40 L998.09,175.98 L998.33,176.14 L998.76,176.17 L999.43,175.90 L1000.10,175.81 L1000.77,175.60 L1001.44,175.67 L1002.11,175.73 L1002.78,175.03 L1003.02,175.35 L1003.45,175.22 L1004.12,176.37 L1004.79,175.96 L1005.46,177.14 L1006.13,177.50 L1006.80,177.31 L1006.94,177.70 L1007.47,177.64 L1008.14,176.95 L1008.81,177.37 L1009.48,176.35 L1010.15,175.99 L1010.82,175.64 L1010.85,176.14 L1011.49,176.63 L1012.16,176.34 L1012.83,176.72 L1013.50,177.72 L1014.17,177.72 L1014.77,177.70 L1014.84,177.91 L1015.51,177.27 L1016.18,176.89 L1016.85,175.74 L1017.52,176.17 L1018.19,175.18 L1018.68,175.04 L1018.86,175.45 L1019.53,175.06 L1020.20,175.69 L1020.87,174.78 L1021.54,175.95 L1022.21,175.07 L1022.88,175.61 L1023.38,175.67 L1023.55,175.63 L1024.22,176.14 L1024.89,175.80 L1025.56,176.05 L1026.23,175.92 L1026.90,175.35 L1027.57,175.00 L1028.07,175.35 L1028.24,174.96 L1028.91,175.58 L1029.58,175.85 L1030.25,175.53 L1030.92,175.18 L1031.59,175.46 L1032.26,175.52 L1032.77,175.35 L1032.93,175.11 L1033.60,175.73 L1034.27,175.32 L1034.94,175.27 L1035.61,175.44 L1036.28,176.04 L1036.68,176.14 L1036.95,177.19 L1037.62,178.73 L1038.29,180.98 L1038.72,182.40 L1038.96,182.10 L1039.63,180.23 L1040.30,179.12 L1040.60,178.48 L1040.97,178.34 L1041.64,177.68 L1042.31,177.02 L1042.95,176.92 L1042.98,177.12 L1043.65,177.00 L1044.32,176.30 L1044.99,176.85 L1045.66,176.54 L1046.33,176.64 L1046.86,176.14 L1047.00,176.42 L1047.67,175.99 L1048.34,176.13 L1049.01,175.57 L1049.68,175.84 L1049.70,175.67 L1050.35,175.47 L1051.02,176.03 L1051.69,176.47 L1052.36,177.16 L1052.83,176.92 L1053.03,177.02 L1053.70,176.95 L1054.37,176.58 L1055.04,176.37 L1055.71,175.66 L1056.38,175.34 L1056.74,175.04 L1057.05,175.13 L1057.72,175.13 L1058.39,176.03 L1059.06,176.09 L1059.73,175.86 L1060.40,176.22 L1060.66,176.60 L1061.07,176.41 L1061.74,177.15 L1062.41,177.20 L1063.08,176.96 L1063.75,177.68 L1064.42,177.73 L1064.57,177.70 L1065.09,177.13 L1065.76,176.92 L1066.43,177.12 L1067.10,175.78 L1067.77,175.49 L1068.44,175.48 L1068.48,175.35 L1069.11,175.68 L1069.78,175.73 L1070.45,175.11 L1071.12,175.47 L1071.79,174.71 L1072.46,174.96 L1073.13,175.43 L1073.18,175.04 L1073.80,175.26 L1074.47,175.07 L1075.14,175.28 L1075.81,175.20 L1076.48,175.31 L1077.15,175.73 L1077.82,175.87 L1077.88,175.35 L1078.49,174.98 L1079.16,175.55 L1079.83,175.71 L1080.50,175.30 L1081.17,175.13 L1081.84,174.95 L1082.51,175.03 L1082.57,175.04 L1083.18,174.82 L1083.85,174.52 L1084.52,173.64 L1085.19,174.28 L1085.70,173.47 L1085.86,173.32 L1086.53,174.02 L1087.20,174.04 L1087.87,174.92 L1088.54,174.71 L1088.84,175.35 L1089.21,175.19 L1089.88,175.28 L1090.55,175.23 L1091.22,175.46 L1091.89,175.13 L1092.56,175.53 L1093.23,175.90 L1093.90,175.75 L1094.57,176.16 L1095.10,175.67 L1095.24,176.15 L1095.91,175.59 L1096.58,175.53 L1097.25,175.81 L1097.92,175.89 L1098.59,175.48 L1099.26,175.57 L1099.79,175.35 L1099.93,175.52 L1100.60,175.10 L1101.27,174.87 L1101.94,174.53 L1102.61,174.36 L1103.28,174.16 L1103.95,174.30 L1104.49,173.79 L1104.62,173.42 L1105.29,173.42 L1105.96,174.35 L1106.63,173.94 L1107.30,174.19 L1107.97,174.48 L1108.64,174.32 L1109.19,174.10 L1109.31,174.16 L1109.98,174.54 L1110.65,174.14 L1111.32,173.90 L1111.99,173.56 L1112.66,173.49 L1113.33,174.14 L1113.88,173.79 L1114.00,174.28 L1114.67,174.02 L1115.34,174.55 L1116.01,175.05 L1116.68,175.30 L1117.35,175.27 L1118.02,176.31 L1118.58,176.14 L1118.69,176.25 L1119.36,176.76 L1120.03,177.07 L1120.70,177.13 L1121.37,177.75 L1121.71,177.70 L1122.04,177.11 L1122.71,177.00 L1123.38,176.61 L1124.05,176.09 L1124.72,175.21 L1124.84,175.35 L1125.39,175.00 L1126.06,174.91 L1126.73,174.94 L1127.40,175.00 L1128.07,175.34 L1128.74,175.43 L1129.41,175.58 L1129.54,175.35 L1130.08,175.25 L1130.75,175.57 L1131.42,174.71 L1132.09,175.02 L1132.76,174.72 L1133.43,175.11 L1134.10,175.13 L1134.24,175.04 L1134.77,175.26 L1135.44,175.26 L1136.11,175.33 L1136.78,175.45 L1137.45,175.36 L1138.12,175.61 L1138.79,176.09 L1138.93,176.14 L1139.46,176.03 L1140.13,175.30 L1140.80,175.89 L1141.47,174.77 L1142.14,174.65 L1142.81,174.78 L1143.48,174.43 L1143.63,174.57 L1144.15,174.55 L1144.82,174.69 L1145.49,174.53 L1146.16,174.69 L1146.83,174.30 L1147.50,174.47 L1148.17,174.14 L1148.84,173.77 L1149.51,173.66 L1149.89,174.10 L1150.18,173.81 L1150.85,174.23 L1151.52,174.18 L1152.19,174.63 L1152.86,174.88 L1153.53,175.29 L1154.20,174.58 L1154.59,175.04 L1154.87,175.54 L1155.54,174.49 L1156.21,175.47 L1156.88,175.57 L1157.55,174.89 L1158.22,175.37 L1158.89,175.04 L1159.29,175.04 L1159.56,175.14 L1160.23,175.53 L1160.90,175.69 L1161.57,175.05 L1162.24,175.03 L1162.91,175.86 L1163.58,175.57 L1164.25,175.98 L1164.92,175.30 L1165.55,175.67 L1165.59,176.05 L1166.26,175.36 L1166.93,175.42 L1167.60,175.64 L1168.27,176.41 L1168.94,175.88 L1169.61,176.01 L1170.24,176.14 L1170.28,175.89 L1170.95,175.43 L1171.62,175.61 L1172.29,175.45 L1172.96,175.05 L1173.63,175.26 L1174.30,174.57 L1174.94,174.57 L1174.97,175.10 L1175.64,175.09 L1176.31,174.79 L1176.98,174.34 L1177.65,174.91 L1178.32,175.04 L1178.99,175.14 L1179.64,175.04 L1179.66,174.95 L1180.33,175.22 L1181.00,175.45 L1181.67,175.06 L1182.34,174.26 L1183.01,174.84 L1183.68,174.77 L1184.33,174.57 L1184.35,174.62 L1185.02,175.16 L1185.69,174.28 L1186.36,174.34 L1187.03,175.22 L1187.47,175.04 L1187.70,174.95 L1188.37,175.97 L1189.04,177.70 L1189.71,178.19 L1189.81,178.48 L1190.38,178.14 L1191.05,177.16 L1191.72,176.11 L1192.16,175.35 L1192.39,175.24 L1193.06,175.04 L1193.73,176.14 L1194.40,176.13 L1195.07,176.30 L1195.74,175.96 L1196.41,175.82 L1196.86,176.14 L1197.08,176.34 L1197.75,176.29 L1198.42,176.23 L1199.09,176.33 L1199.70,176.92 L1199.76,176.84 L1200.43,176.77 L1201.10,177.11 L1201.77,178.11 L1202.44,178.27 L1203.11,178.44 L1203.61,178.17 L1203.78,178.11 L1204.45,178.12 L1205.12,177.19 L1205.79,177.43 L1206.46,177.55 L1207.13,177.08 L1207.52,176.60 L1207.80,177.22 L1208.47,177.01 L1209.14,176.84 L1209.81,176.72 L1210.48,177.18 L1211.15,177.98 L1211.44,177.70 L1211.82,177.53 L1212.49,177.29 L1213.16,177.14 L1213.83,176.23 L1214.50,175.71 L1215.17,176.18 L1215.35,175.67 L1215.84,176.34 L1216.51,176.48 L1217.18,177.99 L1217.85,178.79 L1218.48,179.27 L1218.52,179.54 L1219.19,178.62 L1219.86,178.56 L1220.53,178.83 L1220.83,178.48 L1221.20,178.55 L1221.87,177.97 L1222.54,178.43 L1223.18,177.70 L1223.21,177.54 L1223.88,179.36 L1224.55,179.71 L1225.22,181.23 L1225.89,182.99 L1226.31,183.18 L1226.56,182.97 L1227.23,181.92 L1227.90,180.95 L1228.57,179.55 L1228.66,179.27 L1229.24,179.20 L1229.91,179.37 L1230.58,178.92 L1231.25,179.25 L1231.92,178.90 L1232.57,178.48 L1232.59,177.93 L1233.26,178.25 L1233.93,178.91 L1234.60,178.06 L1235.27,177.95 L1235.94,178.57 L1236.61,178.70 L1237.27,178.48 L1237.28,179.01 L1237.95,178.76 L1238.62,178.17 L1239.29,178.03 L1239.96,177.62 L1240.63,177.75 L1241.30,177.35 L1241.97,176.92 L1241.97,176.51 L1242.64,177.51 L1243.31,177.32 L1243.98,178.08 L1244.32,178.48 L1244.65,180.68 L1245.10,183.96 L1245.32,184.05 L1245.99,182.16 L1246.66,181.22 L1247.33,180.31 L1247.45,180.05 L1248.00,179.50 L1248.67,179.51 L1249.34,179.07 L1250.01,179.27 L1250.68,179.08 L1251.35,178.58 L1251.36,178.48 L1252.02,178.56 L1252.69,177.81 L1253.36,177.75 L1254.03,176.70 L1254.49,176.92 L1254.70,176.95 L1255.37,177.39 L1256.04,178.51 L1256.71,178.58 L1257.38,178.95 L1257.62,179.27 L1258.05,179.34 L1258.72,179.49 L1259.39,179.19 L1260.06,178.99 L1260.73,178.67 L1260.75,178.48 L1261.40,179.47 L1262.07,179.87 L1262.74,180.35 L1263.41,180.94 L1263.88,181.61 L1264.08,181.20 L1264.75,180.78 L1265.42,180.46 L1266.09,180.35 L1266.76,179.16 L1267.02,179.27 L1267.43,179.15 L1268.10,179.00 L1268.77,179.25 L1269.44,178.78 L1270.11,179.40 L1270.15,179.27 L1270.78,179.55 L1271.45,179.50 L1272.12,178.78 L1272.79,178.46 L1273.46,178.97 L1274.13,178.88 L1274.80,178.15 L1274.84,178.48 L1275.47,178.13 L1276.14,178.93 L1276.81,178.75 L1277.48,179.04 L1278.15,179.22 L1278.76,179.27 L1278.82,179.76 L1279.49,179.59 L1280.16,180.41 L1280.83,180.83 L1281.50,182.22 L1281.89,182.40 L1282.17,182.22 L1282.84,183.74 L1283.51,184.14 L1284.18,184.71 L1284.85,185.11 L1285.02,185.53 L1285.52,184.42 L1286.19,181.58 L1286.59,180.83 L1286.86,180.73 L1287.53,180.56 L1288.20,179.93 L1288.87,178.81 L1288.93,179.27 L1289.54,179.08 L1290.21,179.54 L1290.88,180.30 L1291.55,179.92 L1292.22,181.08 L1292.85,180.83 L1292.89,181.29 L1293.56,181.45 L1294.23,182.29 L1294.90,182.52 L1295.57,182.50 L1295.98,183.18 L1296.24,182.88 L1296.91,181.95 L1297.58,181.91 L1298.25,182.01 L1298.92,180.86 L1299.11,180.83 L1299.59,182.10 L1300.26,183.28 L1300.93,185.13 L1301.60,186.26 L1302.24,187.88 L1302.27,188.25 L1302.94,186.14 L1303.61,184.42 L1304.28,183.03 L1304.59,182.40 L1304.95,181.75 L1305.62,181.69 L1306.29,181.81 L1306.96,181.10 L1307.63,180.82 L1307.72,180.83 L1308.30,180.89 L1308.97,181.94 L1309.64,182.41 L1310.31,182.29 L1310.98,182.24 L1311.63,183.18 L1311.65,183.09 L1312.32,183.18 L1312.99,182.53 L1313.66,181.66 L1314.33,181.13 L1315.00,181.58 L1315.55,180.83 L1315.67,180.39 L1316.34,181.09 L1317.01,181.18 L1317.68,180.84 L1318.35,181.24 L1319.02,181.81 L1319.69,182.07 L1320.24,181.61 L1320.36,181.15 L1321.03,181.10 L1321.70,181.35 L1322.37,181.12 L1323.04,182.09 L1323.71,181.15 L1324.38,181.47 L1324.94,181.61 L1325.05,182.03 L1325.72,181.71 L1326.39,181.56 L1327.06,181.49 L1327.73,181.78 L1328.40,181.98 L1329.07,182.69 L1329.64,182.40 L1329.74,182.28 L1330.41,182.14 L1331.08,181.56 L1331.75,181.45 L1332.42,181.75 L1333.09,180.59 L1333.55,180.83 L1333.76,181.05 L1334.43,180.63 L1335.10,180.74 L1335.77,181.07 L1336.44,180.67 L1337.11,180.82 L1337.47,180.83 L1337.78,181.14 L1338.45,181.80 L1339.12,182.02 L1339.79,183.04 L1340.46,183.70 L1340.60,183.96 L1341.13,184.41 L1341.80,184.94 L1342.47,185.78 L1342.95,186.31 L1343.14,186.24 L1343.81,184.39 L1344.48,183.28 L1345.15,182.67 L1346.40,182.40 L1346.4,243.7 L746.2,243.7Z" fill="#eab839" fill-opacity="0.125"/><path d="M746.20,163.47 L748.18,164.09 L748.77,164.08 L748.85,164.20 L749.52,166.88 L750.18,169.09 L750.19,169.06 L750.86,175.50 L751.53,182.25 L751.74,183.96 L752.20,187.46 L752.84,192.57 L752.87,192.27 L753.54,185.48 L754.09,180.05 L754.21,180.38 L754.88,182.32 L755.19,183.18 L755.55,180.68 L756.22,176.73 L756.89,172.10 L756.91,172.22 L757.56,171.27 L758.23,170.32 L758.79,169.87 L758.90,169.80 L759.57,170.09 L760.24,170.56 L760.91,170.52 L761.14,170.66 L761.58,170.16 L762.25,169.79 L762.92,169.71 L763.48,169.09 L763.59,168.82 L764.26,168.76 L764.93,168.30 L765.60,168.11 L766.27,167.61 L766.61,167.52 L766.94,167.54 L767.61,167.27 L768.28,167.18 L768.95,167.14 L769.62,166.81 L769.75,166.74 L770.29,166.43 L770.96,166.22 L771.63,166.49 L772.30,166.10 L772.88,165.96 L772.97,166.05 L773.64,168.10 L774.13,169.09 L774.31,171.17 L774.98,178.62 L775.65,186.06 L775.69,186.31 L776.32,181.79 L776.99,177.14 L777.26,175.35 L777.66,174.53 L778.33,172.48 L779.00,171.12 L779.14,170.66 L779.67,170.01 L780.34,169.75 L781.01,169.19 L781.02,169.09 L781.68,172.65 L782.35,175.95 L782.58,176.92 L783.02,175.45 L783.52,173.79 L783.69,173.21 L784.36,171.51 L785.03,170.02 L785.40,169.09 L785.70,169.25 L786.37,169.36 L786.97,169.87 L787.04,170.51 L787.71,174.08 L788.22,176.92 L788.38,176.36 L789.05,173.44 L789.72,170.77 L789.78,170.66 L790.39,170.67 L791.06,171.11 L791.66,171.44 L791.73,171.64 L792.40,174.74 L793.07,177.73 L793.23,178.48 L793.74,176.72 L794.41,174.23 L794.48,173.79 L795.08,177.85 L795.75,182.65 L796.05,184.75 L796.42,189.70 L797.09,199.05 L797.14,199.62 L797.76,196.75 L798.43,193.01 L798.71,191.79 L799.10,190.74 L799.77,188.49 L800.27,187.09 L800.44,187.62 L801.11,191.01 L801.78,193.81 L801.84,194.14 L802.45,196.43 L803.12,199.25 L803.41,200.40 L803.79,200.36 L804.46,200.62 L805.13,200.81 L805.80,200.96 L806.47,201.21 L806.54,201.18 L807.14,196.90 L807.79,192.57 L807.81,192.39 L808.48,192.75 L809.15,193.14 L809.20,193.36 L809.82,191.20 L810.49,188.80 L811.16,186.70 L811.23,186.31 L811.83,184.69 L812.50,182.99 L813.17,181.32 L813.27,180.83 L813.84,179.89 L814.51,179.03 L815.15,178.48 L815.18,178.27 L815.85,177.72 L816.52,177.14 L817.19,176.56 L817.50,176.14 L817.86,176.18 L818.53,176.71 L819.20,176.46 L819.84,176.92 L819.87,177.08 L820.54,176.54 L821.21,176.65 L821.88,176.00 L822.19,176.14 L822.55,176.13 L823.22,175.58 L823.89,175.24 L824.54,174.57 L824.56,174.61 L825.23,174.41 L825.90,174.80 L826.57,174.54 L827.24,174.36 L827.67,174.57 L827.91,174.78 L828.58,175.18 L829.25,175.61 L829.92,175.90 L830.02,176.14 L830.59,176.52 L831.26,177.42 L831.93,178.03 L832.37,178.48 L832.60,178.14 L833.27,177.85 L833.94,177.54 L834.61,177.09 L834.72,176.92 L835.28,176.34 L835.95,175.63 L836.62,174.94 L837.06,174.57 L837.29,174.13 L837.96,173.22 L838.63,172.45 L839.30,171.39 L839.41,171.44 L839.97,171.77 L840.64,172.02 L841.31,172.23 L841.45,172.22 L841.98,172.65 L842.65,173.66 L843.32,174.53 L843.33,174.57 L843.99,173.25 L844.66,172.57 L845.21,171.44 L845.33,171.57 L846.00,171.44 L846.67,171.54 L847.24,171.44 L847.34,172.25 L848.01,178.49 L848.34,181.61 L848.68,181.19 L849.35,180.46 L849.59,180.05 L850.02,183.17 L850.69,187.54 L851.15,191.01 L851.36,192.49 L852.03,197.20 L852.70,201.67 L852.72,201.65 L853.37,201.92 L854.04,202.00 L854.71,201.68 L855.38,201.76 L856.05,201.94 L856.63,201.97 L856.72,201.30 L857.39,194.30 L857.73,191.01 L858.06,189.22 L858.73,185.15 L859.30,181.61 L859.40,181.41 L860.07,180.18 L860.74,179.06 L861.33,177.70 L861.41,177.79 L862.08,177.10 L862.75,176.92 L863.42,176.15 L863.68,176.14 L864.09,175.93 L864.76,176.00 L865.43,175.72 L866.03,175.35 L866.10,175.22 L866.77,174.87 L867.44,174.70 L867.59,174.57 L868.11,174.74 L868.78,174.66 L869.45,174.79 L870.12,174.68 L870.79,174.73 L871.46,174.62 L871.51,174.57 L872.13,174.71 L872.80,174.97 L873.47,175.22 L873.86,175.35 L874.14,175.17 L874.81,174.88 L875.48,174.15 L876.15,173.60 L876.20,173.79 L876.82,174.32 L877.49,174.53 L878.16,175.05 L878.55,175.35 L878.83,174.97 L879.50,174.88 L880.17,174.16 L880.84,173.72 L880.90,173.79 L881.51,174.19 L882.18,174.32 L882.78,174.57 L882.85,175.53 L883.52,185.33 L883.72,187.88 L884.19,188.79 L884.86,190.10 L885.28,191.01 L885.53,189.09 L886.20,183.26 L886.38,181.61 L886.87,180.25 L887.54,177.99 L887.95,176.92 L888.21,176.89 L888.88,176.34 L889.55,176.01 L890.22,175.33 L890.29,175.35 L890.89,175.49 L891.56,175.50 L892.23,175.30 L892.64,175.35 L892.90,175.69 L893.57,176.43 L894.24,177.20 L894.91,177.84 L894.99,177.70 L895.58,177.70 L896.25,177.20 L896.92,177.27 L897.59,177.14 L898.13,176.92 L898.26,176.61 L898.93,176.30 L899.60,176.00 L900.27,175.51 L900.94,175.02 L901.26,174.57 L901.61,174.37 L902.28,174.62 L902.95,174.75 L903.62,174.65 L904.29,174.48 L904.71,174.57 L904.96,175.63 L905.63,179.42 L905.96,180.83 L906.30,183.60 L906.97,188.53 L907.52,192.57 L907.64,193.01 L908.31,196.03 L908.98,198.82 L909.40,200.40 L909.65,201.39 L910.32,203.68 L910.66,204.78 L910.99,201.39 L911.66,194.84 L911.91,192.57 L912.33,189.76 L913.00,185.53 L913.00,185.44 L913.67,187.55 L914.34,189.36 L914.57,190.23 L915.01,191.45 L915.68,192.94 L916.14,194.14 L916.35,193.09 L917.02,190.46 L917.69,187.84 L917.70,187.88 L918.36,184.52 L919.03,181.35 L919.27,180.05 L919.70,182.70 L920.37,187.12 L920.83,190.23 L921.04,189.06 L921.71,185.65 L922.38,182.58 L922.40,182.40 L923.05,180.89 L923.72,179.52 L923.96,179.27 L924.39,179.15 L925.06,179.02 L925.73,178.84 L926.31,178.48 L926.40,179.10 L927.07,183.17 L927.56,186.31 L927.74,188.13 L928.41,194.09 L929.08,199.99 L929.13,200.40 L929.75,199.81 L930.42,199.32 L930.69,198.84 L931.09,200.48 L931.76,202.80 L932.26,204.32 L932.43,203.35 L933.10,200.43 L933.77,197.45 L933.83,197.27 L934.44,192.68 L934.92,189.44 L935.11,188.90 L935.78,186.20 L936.45,184.27 L936.49,183.96 L937.12,183.37 L937.79,182.71 L938.46,181.94 L938.84,181.61 L939.13,182.03 L939.80,182.30 L940.47,182.91 L941.14,183.37 L941.18,183.18 L941.81,182.44 L942.48,181.69 L943.15,180.55 L943.53,180.05 L943.82,180.13 L944.49,180.70 L945.10,180.83 L945.16,180.96 L945.83,181.96 L946.50,183.27 L947.17,184.28 L947.45,184.75 L947.84,183.76 L948.51,182.78 L949.01,181.61 L949.18,181.22 L949.85,179.91 L950.52,178.14 L951.05,176.92 L951.19,177.05 L951.86,176.33 L952.53,175.90 L953.20,175.66 L953.71,175.35 L953.87,175.49 L954.54,175.51 L955.21,175.43 L955.88,175.16 L956.55,175.30 L957.22,175.12 L957.62,175.35 L957.89,175.33 L958.56,175.73 L959.23,175.54 L959.90,175.83 L960.57,175.91 L961.24,175.78 L961.91,176.16 L962.32,176.14 L962.58,175.97 L963.25,176.13 L963.92,176.44 L964.59,176.33 L965.26,176.86 L965.93,176.70 L966.60,176.91 L967.02,176.92 L967.27,177.11 L967.94,176.57 L968.61,176.90 L969.28,176.31 L969.95,176.48 L970.62,176.39 L971.29,176.45 L971.71,176.14 L971.96,176.06 L972.63,176.36 L973.30,176.21 L973.97,176.12 L974.64,175.97 L975.31,175.84 L975.98,175.99 L976.41,176.14 L976.65,175.87 L977.32,175.63 L977.99,175.84 L978.66,175.10 L979.33,175.11 L980.00,174.19 L980.32,174.57 L980.67,174.17 L981.34,174.80 L982.01,175.00 L982.68,174.36 L983.35,174.06 L984.02,174.28 L984.69,174.42 L985.02,174.57 L985.36,174.68 L986.03,175.40 L986.70,175.62 L987.37,176.50 L988.04,177.15 L988.15,176.92 L988.71,178.36 L989.38,179.65 L989.72,180.05 L990.05,179.63 L990.72,178.27 L991.28,177.70 L991.39,178.02 L992.06,177.08 L992.73,177.37 L993.40,176.58 L994.07,176.45 L994.41,176.14 L994.74,176.13 L995.41,176.30 L996.08,175.96 L996.75,176.22 L997.42,176.40 L998.09,175.98 L998.33,176.14 L998.76,176.17 L999.43,175.90 L1000.10,175.81 L1000.77,175.60 L1001.44,175.67 L1002.11,175.73 L1002.78,175.03 L1003.02,175.35 L1003.45,175.22 L1004.12,176.37 L1004.79,175.96 L1005.46,177.14 L1006.13,177.50 L1006.80,177.31 L1006.94,177.70 L1007.47,177.64 L1008.14,176.95 L1008.81,177.37 L1009.48,176.35 L1010.15,175.99 L1010.82,175.64 L1010.85,176.14 L1011.49,176.63 L1012.16,176.34 L1012.83,176.72 L1013.50,177.72 L1014.17,177.72 L1014.77,177.70 L1014.84,177.91 L1015.51,177.27 L1016.18,176.89 L1016.85,175.74 L1017.52,176.17 L1018.19,175.18 L1018.68,175.04 L1018.86,175.45 L1019.53,175.06 L1020.20,175.69 L1020.87,174.78 L1021.54,175.95 L1022.21,175.07 L1022.88,175.61 L1023.38,175.67 L1023.55,175.63 L1024.22,176.14 L1024.89,175.80 L1025.56,176.05 L1026.23,175.92 L1026.90,175.35 L1027.57,175.00 L1028.07,175.35 L1028.24,174.96 L1028.91,175.58 L1029.58,175.85 L1030.25,175.53 L1030.92,175.18 L1031.59,175.46 L1032.26,175.52 L1032.77,175.35 L1032.93,175.11 L1033.60,175.73 L1034.27,175.32 L1034.94,175.27 L1035.61,175.44 L1036.28,176.04 L1036.68,176.14 L1036.95,177.19 L1037.62,178.73 L1038.29,180.98 L1038.72,182.40 L1038.96,182.10 L1039.63,180.23 L1040.30,179.12 L1040.60,178.48 L1040.97,178.34 L1041.64,177.68 L1042.31,177.02 L1042.95,176.92 L1042.98,177.12 L1043.65,177.00 L1044.32,176.30 L1044.99,176.85 L1045.66,176.54 L1046.33,176.64 L1046.86,176.14 L1047.00,176.42 L1047.67,175.99 L1048.34,176.13 L1049.01,175.57 L1049.68,175.84 L1049.70,175.67 L1050.35,175.47 L1051.02,176.03 L1051.69,176.47 L1052.36,177.16 L1052.83,176.92 L1053.03,177.02 L1053.70,176.95 L1054.37,176.58 L1055.04,176.37 L1055.71,175.66 L1056.38,175.34 L1056.74,175.04 L1057.05,175.13 L1057.72,175.13 L1058.39,176.03 L1059.06,176.09 L1059.73,175.86 L1060.40,176.22 L1060.66,176.60 L1061.07,176.41 L1061.74,177.15 L1062.41,177.20 L1063.08,176.96 L1063.75,177.68 L1064.42,177.73 L1064.57,177.70 L1065.09,177.13 L1065.76,176.92 L1066.43,177.12 L1067.10,175.78 L1067.77,175.49 L1068.44,175.48 L1068.48,175.35 L1069.11,175.68 L1069.78,175.73 L1070.45,175.11 L1071.12,175.47 L1071.79,174.71 L1072.46,174.96 L1073.13,175.43 L1073.18,175.04 L1073.80,175.26 L1074.47,175.07 L1075.14,175.28 L1075.81,175.20 L1076.48,175.31 L1077.15,175.73 L1077.82,175.87 L1077.88,175.35 L1078.49,174.98 L1079.16,175.55 L1079.83,175.71 L1080.50,175.30 L1081.17,175.13 L1081.84,174.95 L1082.51,175.03 L1082.57,175.04 L1083.18,174.82 L1083.85,174.52 L1084.52,173.64 L1085.19,174.28 L1085.70,173.47 L1085.86,173.32 L1086.53,174.02 L1087.20,174.04 L1087.87,174.92 L1088.54,174.71 L1088.84,175.35 L1089.21,175.19 L1089.88,175.28 L1090.55,175.23 L1091.22,175.46 L1091.89,175.13 L1092.56,175.53 L1093.23,175.90 L1093.90,175.75 L1094.57,176.16 L1095.10,175.67 L1095.24,176.15 L1095.91,175.59 L1096.58,175.53 L1097.25,175.81 L1097.92,175.89 L1098.59,175.48 L1099.26,175.57 L1099.79,175.35 L1099.93,175.52 L1100.60,175.10 L1101.27,174.87 L1101.94,174.53 L1102.61,174.36 L1103.28,174.16 L1103.95,174.30 L1104.49,173.79 L1104.62,173.42 L1105.29,173.42 L1105.96,174.35 L1106.63,173.94 L1107.30,174.19 L1107.97,174.48 L1108.64,174.32 L1109.19,174.10 L1109.31,174.16 L1109.98,174.54 L1110.65,174.14 L1111.32,173.90 L1111.99,173.56 L1112.66,173.49 L1113.33,174.14 L1113.88,173.79 L1114.00,174.28 L1114.67,174.02 L1115.34,174.55 L1116.01,175.05 L1116.68,175.30 L1117.35,175.27 L1118.02,176.31 L1118.58,176.14 L1118.69,176.25 L1119.36,176.76 L1120.03,177.07 L1120.70,177.13 L1121.37,177.75 L1121.71,177.70 L1122.04,177.11 L1122.71,177.00 L1123.38,176.61 L1124.05,176.09 L1124.72,175.21 L1124.84,175.35 L1125.39,175.00 L1126.06,174.91 L1126.73,174.94 L1127.40,175.00 L1128.07,175.34 L1128.74,175.43 L1129.41,175.58 L1129.54,175.35 L1130.08,175.25 L1130.75,175.57 L1131.42,174.71 L1132.09,175.02 L1132.76,174.72 L1133.43,175.11 L1134.10,175.13 L1134.24,175.04 L1134.77,175.26 L1135.44,175.26 L1136.11,175.33 L1136.78,175.45 L1137.45,175.36 L1138.12,175.61 L1138.79,176.09 L1138.93,176.14 L1139.46,176.03 L1140.13,175.30 L1140.80,175.89 L1141.47,174.77 L1142.14,174.65 L1142.81,174.78 L1143.48,174.43 L1143.63,174.57 L1144.15,174.55 L1144.82,174.69 L1145.49,174.53 L1146.16,174.69 L1146.83,174.30 L1147.50,174.47 L1148.17,174.14 L1148.84,173.77 L1149.51,173.66 L1149.89,174.10 L1150.18,173.81 L1150.85,174.23 L1151.52,174.18 L1152.19,174.63 L1152.86,174.88 L1153.53,175.29 L1154.20,174.58 L1154.59,175.04 L1154.87,175.54 L1155.54,174.49 L1156.21,175.47 L1156.88,175.57 L1157.55,174.89 L1158.22,175.37 L1158.89,175.04 L1159.29,175.04 L1159.56,175.14 L1160.23,175.53 L1160.90,175.69 L1161.57,175.05 L1162.24,175.03 L1162.91,175.86 L1163.58,175.57 L1164.25,175.98 L1164.92,175.30 L1165.55,175.67 L1165.59,176.05 L1166.26,175.36 L1166.93,175.42 L1167.60,175.64 L1168.27,176.41 L1168.94,175.88 L1169.61,176.01 L1170.24,176.14 L1170.28,175.89 L1170.95,175.43 L1171.62,175.61 L1172.29,175.45 L1172.96,175.05 L1173.63,175.26 L1174.30,174.57 L1174.94,174.57 L1174.97,175.10 L1175.64,175.09 L1176.31,174.79 L1176.98,174.34 L1177.65,174.91 L1178.32,175.04 L1178.99,175.14 L1179.64,175.04 L1179.66,174.95 L1180.33,175.22 L1181.00,175.45 L1181.67,175.06 L1182.34,174.26 L1183.01,174.84 L1183.68,174.77 L1184.33,174.57 L1184.35,174.62 L1185.02,175.16 L1185.69,174.28 L1186.36,174.34 L1187.03,175.22 L1187.47,175.04 L1187.70,174.95 L1188.37,175.97 L1189.04,177.70 L1189.71,178.19 L1189.81,178.48 L1190.38,178.14 L1191.05,177.16 L1191.72,176.11 L1192.16,175.35 L1192.39,175.24 L1193.06,175.04 L1193.73,176.14 L1194.40,176.13 L1195.07,176.30 L1195.74,175.96 L1196.41,175.82 L1196.86,176.14 L1197.08,176.34 L1197.75,176.29 L1198.42,176.23 L1199.09,176.33 L1199.70,176.92 L1199.76,176.84 L1200.43,176.77 L1201.10,177.11 L1201.77,178.11 L1202.44,178.27 L1203.11,178.44 L1203.61,178.17 L1203.78,178.11 L1204.45,178.12 L1205.12,177.19 L1205.79,177.43 L1206.46,177.55 L1207.13,177.08 L1207.52,176.60 L1207.80,177.22 L1208.47,177.01 L1209.14,176.84 L1209.81,176.72 L1210.48,177.18 L1211.15,177.98 L1211.44,177.70 L1211.82,177.53 L1212.49,177.29 L1213.16,177.14 L1213.83,176.23 L1214.50,175.71 L1215.17,176.18 L1215.35,175.67 L1215.84,176.34 L1216.51,176.48 L1217.18,177.99 L1217.85,178.79 L1218.48,179.27 L1218.52,179.54 L1219.19,178.62 L1219.86,178.56 L1220.53,178.83 L1220.83,178.48 L1221.20,178.55 L1221.87,177.97 L1222.54,178.43 L1223.18,177.70 L1223.21,177.54 L1223.88,179.36 L1224.55,179.71 L1225.22,181.23 L1225.89,182.99 L1226.31,183.18 L1226.56,182.97 L1227.23,181.92 L1227.90,180.95 L1228.57,179.55 L1228.66,179.27 L1229.24,179.20 L1229.91,179.37 L1230.58,178.92 L1231.25,179.25 L1231.92,178.90 L1232.57,178.48 L1232.59,177.93 L1233.26,178.25 L1233.93,178.91 L1234.60,178.06 L1235.27,177.95 L1235.94,178.57 L1236.61,178.70 L1237.27,178.48 L1237.28,179.01 L1237.95,178.76 L1238.62,178.17 L1239.29,178.03 L1239.96,177.62 L1240.63,177.75 L1241.30,177.35 L1241.97,176.92 L1241.97,176.51 L1242.64,177.51 L1243.31,177.32 L1243.98,178.08 L1244.32,178.48 L1244.65,180.68 L1245.10,183.96 L1245.32,184.05 L1245.99,182.16 L1246.66,181.22 L1247.33,180.31 L1247.45,180.05 L1248.00,179.50 L1248.67,179.51 L1249.34,179.07 L1250.01,179.27 L1250.68,179.08 L1251.35,178.58 L1251.36,178.48 L1252.02,178.56 L1252.69,177.81 L1253.36,177.75 L1254.03,176.70 L1254.49,176.92 L1254.70,176.95 L1255.37,177.39 L1256.04,178.51 L1256.71,178.58 L1257.38,178.95 L1257.62,179.27 L1258.05,179.34 L1258.72,179.49 L1259.39,179.19 L1260.06,178.99 L1260.73,178.67 L1260.75,178.48 L1261.40,179.47 L1262.07,179.87 L1262.74,180.35 L1263.41,180.94 L1263.88,181.61 L1264.08,181.20 L1264.75,180.78 L1265.42,180.46 L1266.09,180.35 L1266.76,179.16 L1267.02,179.27 L1267.43,179.15 L1268.10,179.00 L1268.77,179.25 L1269.44,178.78 L1270.11,179.40 L1270.15,179.27 L1270.78,179.55 L1271.45,179.50 L1272.12,178.78 L1272.79,178.46 L1273.46,178.97 L1274.13,178.88 L1274.80,178.15 L1274.84,178.48 L1275.47,178.13 L1276.14,178.93 L1276.81,178.75 L1277.48,179.04 L1278.15,179.22 L1278.76,179.27 L1278.82,179.76 L1279.49,179.59 L1280.16,180.41 L1280.83,180.83 L1281.50,182.22 L1281.89,182.40 L1282.17,182.22 L1282.84,183.74 L1283.51,184.14 L1284.18,184.71 L1284.85,185.11 L1285.02,185.53 L1285.52,184.42 L1286.19,181.58 L1286.59,180.83 L1286.86,180.73 L1287.53,180.56 L1288.20,179.93 L1288.87,178.81 L1288.93,179.27 L1289.54,179.08 L1290.21,179.54 L1290.88,180.30 L1291.55,179.92 L1292.22,181.08 L1292.85,180.83 L1292.89,181.29 L1293.56,181.45 L1294.23,182.29 L1294.90,182.52 L1295.57,182.50 L1295.98,183.18 L1296.24,182.88 L1296.91,181.95 L1297.58,181.91 L1298.25,182.01 L1298.92,180.86 L1299.11,180.83 L1299.59,182.10 L1300.26,183.28 L1300.93,185.13 L1301.60,186.26 L1302.24,187.88 L1302.27,188.25 L1302.94,186.14 L1303.61,184.42 L1304.28,183.03 L1304.59,182.40 L1304.95,181.75 L1305.62,181.69 L1306.29,181.81 L1306.96,181.10 L1307.63,180.82 L1307.72,180.83 L1308.30,180.89 L1308.97,181.94 L1309.64,182.41 L1310.31,182.29 L1310.98,182.24 L1311.63,183.18 L1311.65,183.09 L1312.32,183.18 L1312.99,182.53 L1313.66,181.66 L1314.33,181.13 L1315.00,181.58 L1315.55,180.83 L1315.67,180.39 L1316.34,181.09 L1317.01,181.18 L1317.68,180.84 L1318.35,181.24 L1319.02,181.81 L1319.69,182.07 L1320.24,181.61 L1320.36,181.15 L1321.03,181.10 L1321.70,181.35 L1322.37,181.12 L1323.04,182.09 L1323.71,181.15 L1324.38,181.47 L1324.94,181.61 L1325.05,182.03 L1325.72,181.71 L1326.39,181.56 L1327.06,181.49 L1327.73,181.78 L1328.40,181.98 L1329.07,182.69 L1329.64,182.40 L1329.74,182.28 L1330.41,182.14 L1331.08,181.56 L1331.75,181.45 L1332.42,181.75 L1333.09,180.59 L1333.55,180.83 L1333.76,181.05 L1334.43,180.63 L1335.10,180.74 L1335.77,181.07 L1336.44,180.67 L1337.11,180.82 L1337.47,180.83 L1337.78,181.14 L1338.45,181.80 L1339.12,182.02 L1339.79,183.04 L1340.46,183.70 L1340.60,183.96 L1341.13,184.41 L1341.80,184.94 L1342.47,185.78 L1342.95,186.31 L1343.14,186.24 L1343.81,184.39 L1344.48,183.28 L1345.15,182.67 L1346.40,182.40" fill="none" stroke="#eab839" stroke-width="1.05" stroke-linejoin="round"/></g>
<g clip-path="url(#clip2g)"><path d="M746.20,163.47 L748.18,164.09 L748.77,164.08 L748.85,164.20 L749.52,166.88 L750.18,169.09 L750.19,169.06 L750.86,175.50 L751.53,182.25 L751.74,183.96 L752.20,187.46 L752.84,192.57 L752.87,192.27 L753.54,185.48 L754.09,180.05 L754.21,180.38 L754.88,182.32 L755.19,183.18 L755.55,180.68 L756.22,176.73 L756.89,172.10 L756.91,172.22 L757.56,171.27 L758.23,170.32 L758.79,169.87 L758.90,169.80 L759.57,170.09 L760.24,170.56 L760.91,170.52 L761.14,170.66 L761.58,170.16 L762.25,169.79 L762.92,169.71 L763.48,169.09 L763.59,168.82 L764.26,168.76 L764.93,168.30 L765.60,168.11 L766.27,167.61 L766.61,167.52 L766.94,167.54 L767.61,167.27 L768.28,167.18 L768.95,167.14 L769.62,166.81 L769.75,166.74 L770.29,166.43 L770.96,166.22 L771.63,166.49 L772.30,166.10 L772.88,165.96 L772.97,166.05 L773.64,168.10 L774.13,169.09 L774.31,171.17 L774.98,178.62 L775.65,186.06 L775.69,186.31 L776.32,181.79 L776.99,177.14 L777.26,175.35 L777.66,174.53 L778.33,172.48 L779.00,171.12 L779.14,170.66 L779.67,170.01 L780.34,169.75 L781.01,169.19 L781.02,169.09 L781.68,172.65 L782.35,175.95 L782.58,176.92 L783.02,175.45 L783.52,173.79 L783.69,173.21 L784.36,171.51 L785.03,170.02 L785.40,169.09 L785.70,169.25 L786.37,169.36 L786.97,169.87 L787.04,170.51 L787.71,174.08 L788.22,176.92 L788.38,176.36 L789.05,173.44 L789.72,170.77 L789.78,170.66 L790.39,170.67 L791.06,171.11 L791.66,171.44 L791.73,171.64 L792.40,174.74 L793.07,177.73 L793.23,178.48 L793.74,176.72 L794.41,174.23 L794.48,173.79 L795.08,177.85 L795.75,182.65 L796.05,184.75 L796.42,189.70 L797.09,199.05 L797.14,199.62 L797.76,196.75 L798.43,193.01 L798.71,191.79 L799.10,190.74 L799.77,188.49 L800.27,187.09 L800.44,187.62 L801.11,191.01 L801.78,193.81 L801.84,194.14 L802.45,196.43 L803.12,199.25 L803.41,200.40 L803.79,200.36 L804.46,200.62 L805.13,200.81 L805.80,200.96 L806.47,201.21 L806.54,201.18 L807.14,196.90 L807.79,192.57 L807.81,192.39 L808.48,192.75 L809.15,193.14 L809.20,193.36 L809.82,191.20 L810.49,188.80 L811.16,186.70 L811.23,186.31 L811.83,184.69 L812.50,182.99 L813.17,181.32 L813.27,180.83 L813.84,179.89 L814.51,179.03 L815.15,178.48 L815.18,178.27 L815.85,177.72 L816.52,177.14 L817.19,176.56 L817.50,176.14 L817.86,176.18 L818.53,176.71 L819.20,176.46 L819.84,176.92 L819.87,177.08 L820.54,176.54 L821.21,176.65 L821.88,176.00 L822.19,176.14 L822.55,176.13 L823.22,175.58 L823.89,175.24 L824.54,174.57 L824.56,174.61 L825.23,174.41 L825.90,174.80 L826.57,174.54 L827.24,174.36 L827.67,174.57 L827.91,174.78 L828.58,175.18 L829.25,175.61 L829.92,175.90 L830.02,176.14 L830.59,176.52 L831.26,177.42 L831.93,178.03 L832.37,178.48 L832.60,178.14 L833.27,177.85 L833.94,177.54 L834.61,177.09 L834.72,176.92 L835.28,176.34 L835.95,175.63 L836.62,174.94 L837.06,174.57 L837.29,174.13 L837.96,173.22 L838.63,172.45 L839.30,171.39 L839.41,171.44 L839.97,171.77 L840.64,172.02 L841.31,172.23 L841.45,172.22 L841.98,172.65 L842.65,173.66 L843.32,174.53 L843.33,174.57 L843.99,173.25 L844.66,172.57 L845.21,171.44 L845.33,171.57 L846.00,171.44 L846.67,171.54 L847.24,171.44 L847.34,172.25 L848.01,178.49 L848.34,181.61 L848.68,181.19 L849.35,180.46 L849.59,180.05 L850.02,183.17 L850.69,187.54 L851.15,191.01 L851.36,192.49 L852.03,197.20 L852.70,201.67 L852.72,201.65 L853.37,201.92 L854.04,202.00 L854.71,201.68 L855.38,201.76 L856.05,201.94 L856.63,201.97 L856.72,201.30 L857.39,194.30 L857.73,191.01 L858.06,189.22 L858.73,185.15 L859.30,181.61 L859.40,181.41 L860.07,180.18 L860.74,179.06 L861.33,177.70 L861.41,177.79 L862.08,177.10 L862.75,176.92 L863.42,176.15 L863.68,176.14 L864.09,175.93 L864.76,176.00 L865.43,175.72 L866.03,175.35 L866.10,175.22 L866.77,174.87 L867.44,174.70 L867.59,174.57 L868.11,174.74 L868.78,174.66 L869.45,174.79 L870.12,174.68 L870.79,174.73 L871.46,174.62 L871.51,174.57 L872.13,174.71 L872.80,174.97 L873.47,175.22 L873.86,175.35 L874.14,175.17 L874.81,174.88 L875.48,174.15 L876.15,173.60 L876.20,173.79 L876.82,174.32 L877.49,174.53 L878.16,175.05 L878.55,175.35 L878.83,174.97 L879.50,174.88 L880.17,174.16 L880.84,173.72 L880.90,173.79 L881.51,174.19 L882.18,174.32 L882.78,174.57 L882.85,175.53 L883.52,185.33 L883.72,187.88 L884.19,188.79 L884.86,190.10 L885.28,191.01 L885.53,189.09 L886.20,183.26 L886.38,181.61 L886.87,180.25 L887.54,177.99 L887.95,176.92 L888.21,176.89 L888.88,176.34 L889.55,176.01 L890.22,175.33 L890.29,175.35 L890.89,175.49 L891.56,175.50 L892.23,175.30 L892.64,175.35 L892.90,175.69 L893.57,176.43 L894.24,177.20 L894.91,177.84 L894.99,177.70 L895.58,177.70 L896.25,177.20 L896.92,177.27 L897.59,177.14 L898.13,176.92 L898.26,176.61 L898.93,176.30 L899.60,176.00 L900.27,175.51 L900.94,175.02 L901.26,174.57 L901.61,174.37 L902.28,174.62 L902.95,174.75 L903.62,174.65 L904.29,174.48 L904.71,174.57 L904.96,175.63 L905.63,179.42 L905.96,180.83 L906.30,183.60 L906.97,188.53 L907.52,192.57 L907.64,193.01 L908.31,196.03 L908.98,198.82 L909.40,200.40 L909.65,201.39 L910.32,203.68 L910.66,204.78 L910.99,201.39 L911.66,194.84 L911.91,192.57 L912.33,189.76 L913.00,185.53 L913.00,185.44 L913.67,187.55 L914.34,189.36 L914.57,190.23 L915.01,191.45 L915.68,192.94 L916.14,194.14 L916.35,193.09 L917.02,190.46 L917.69,187.84 L917.70,187.88 L918.36,184.52 L919.03,181.35 L919.27,180.05 L919.70,182.70 L920.37,187.12 L920.83,190.23 L921.04,189.06 L921.71,185.65 L922.38,182.58 L922.40,182.40 L923.05,180.89 L923.72,179.52 L923.96,179.27 L924.39,179.15 L925.06,179.02 L925.73,178.84 L926.31,178.48 L926.40,179.10 L927.07,183.17 L927.56,186.31 L927.74,188.13 L928.41,194.09 L929.08,199.99 L929.13,200.40 L929.75,199.81 L930.42,199.32 L930.69,198.84 L931.09,200.48 L931.76,202.80 L932.26,204.32 L932.43,203.35 L933.10,200.43 L933.77,197.45 L933.83,197.27 L934.44,192.68 L934.92,189.44 L935.11,188.90 L935.78,186.20 L936.45,184.27 L936.49,183.96 L937.12,183.37 L937.79,182.71 L938.46,181.94 L938.84,181.61 L939.13,182.03 L939.80,182.30 L940.47,182.91 L941.14,183.37 L941.18,183.18 L941.81,182.44 L942.48,181.69 L943.15,180.55 L943.53,180.05 L943.82,180.13 L944.49,180.70 L945.10,180.83 L945.16,180.96 L945.83,181.96 L946.50,183.27 L947.17,184.28 L947.45,184.75 L947.84,183.76 L948.51,182.78 L949.01,181.61 L949.18,181.22 L949.85,179.91 L950.52,178.14 L951.05,176.92 L951.19,177.05 L951.86,176.33 L952.53,175.90 L953.20,175.66 L953.71,175.35 L953.87,175.49 L954.54,175.51 L955.21,175.43 L955.88,175.16 L956.55,175.30 L957.22,175.12 L957.62,175.35 L957.89,175.33 L958.56,175.73 L959.23,175.54 L959.90,175.83 L960.57,175.91 L961.24,175.78 L961.91,176.16 L962.32,176.14 L962.58,175.97 L963.25,176.13 L963.92,176.44 L964.59,176.33 L965.26,176.86 L965.93,176.70 L966.60,176.91 L967.02,176.92 L967.27,177.11 L967.94,176.57 L968.61,176.90 L969.28,176.31 L969.95,176.48 L970.62,176.39 L971.29,176.45 L971.71,176.14 L971.96,176.06 L972.63,176.36 L973.30,176.21 L973.97,176.12 L974.64,175.97 L975.31,175.84 L975.98,175.99 L976.41,176.14 L976.65,175.87 L977.32,175.63 L977.99,175.84 L978.66,175.10 L979.33,175.11 L980.00,174.19 L980.32,174.57 L980.67,174.17 L981.34,174.80 L982.01,175.00 L982.68,174.36 L983.35,174.06 L984.02,174.28 L984.69,174.42 L985.02,174.57 L985.36,174.68 L986.03,175.40 L986.70,175.62 L987.37,176.50 L988.04,177.15 L988.15,176.92 L988.71,178.36 L989.38,179.65 L989.72,180.05 L990.05,179.63 L990.72,178.27 L991.28,177.70 L991.39,178.02 L992.06,177.08 L992.73,177.37 L993.40,176.58 L994.07,176.45 L994.41,176.14 L994.74,176.13 L995.41,176.30 L996.08,175.96 L996.75,176.22 L997.42,176.40 L998.09,175.98 L998.33,176.14 L998.76,176.17 L999.43,175.90 L1000.10,175.81 L1000.77,175.60 L1001.44,175.67 L1002.11,175.73 L1002.78,175.03 L1003.02,175.35 L1003.45,175.22 L1004.12,176.37 L1004.79,175.96 L1005.46,177.14 L1006.13,177.50 L1006.80,177.31 L1006.94,177.70 L1007.47,177.64 L1008.14,176.95 L1008.81,177.37 L1009.48,176.35 L1010.15,175.99 L1010.82,175.64 L1010.85,176.14 L1011.49,176.63 L1012.16,176.34 L1012.83,176.72 L1013.50,177.72 L1014.17,177.72 L1014.77,177.70 L1014.84,177.91 L1015.51,177.27 L1016.18,176.89 L1016.85,175.74 L1017.52,176.17 L1018.19,175.18 L1018.68,175.04 L1018.86,175.45 L1019.53,175.06 L1020.20,175.69 L1020.87,174.78 L1021.54,175.95 L1022.21,175.07 L1022.88,175.61 L1023.38,175.67 L1023.55,175.63 L1024.22,176.14 L1024.89,175.80 L1025.56,176.05 L1026.23,175.92 L1026.90,175.35 L1027.57,175.00 L1028.07,175.35 L1028.24,174.96 L1028.91,175.58 L1029.58,175.85 L1030.25,175.53 L1030.92,175.18 L1031.59,175.46 L1032.26,175.52 L1032.77,175.35 L1032.93,175.11 L1033.60,175.73 L1034.27,175.32 L1034.94,175.27 L1035.61,175.44 L1036.28,176.04 L1036.68,176.14 L1036.95,177.19 L1037.62,178.73 L1038.29,180.98 L1038.72,182.40 L1038.96,182.10 L1039.63,180.23 L1040.30,179.12 L1040.60,178.48 L1040.97,178.34 L1041.64,177.68 L1042.31,177.02 L1042.95,176.92 L1042.98,177.12 L1043.65,177.00 L1044.32,176.30 L1044.99,176.85 L1045.66,176.54 L1046.33,176.64 L1046.86,176.14 L1047.00,176.42 L1047.67,175.99 L1048.34,176.13 L1049.01,175.57 L1049.68,175.84 L1049.70,175.67 L1050.35,175.47 L1051.02,176.03 L1051.69,176.47 L1052.36,177.16 L1052.83,176.92 L1053.03,177.02 L1053.70,176.95 L1054.37,176.58 L1055.04,176.37 L1055.71,175.66 L1056.38,175.34 L1056.74,175.04 L1057.05,175.13 L1057.72,175.13 L1058.39,176.03 L1059.06,176.09 L1059.73,175.86 L1060.40,176.22 L1060.66,176.60 L1061.07,176.41 L1061.74,177.15 L1062.41,177.20 L1063.08,176.96 L1063.75,177.68 L1064.42,177.73 L1064.57,177.70 L1065.09,177.13 L1065.76,176.92 L1066.43,177.12 L1067.10,175.78 L1067.77,175.49 L1068.44,175.48 L1068.48,175.35 L1069.11,175.68 L1069.78,175.73 L1070.45,175.11 L1071.12,175.47 L1071.79,174.71 L1072.46,174.96 L1073.13,175.43 L1073.18,175.04 L1073.80,175.26 L1074.47,175.07 L1075.14,175.28 L1075.81,175.20 L1076.48,175.31 L1077.15,175.73 L1077.82,175.87 L1077.88,175.35 L1078.49,174.98 L1079.16,175.55 L1079.83,175.71 L1080.50,175.30 L1081.17,175.13 L1081.84,174.95 L1082.51,175.03 L1082.57,175.04 L1083.18,174.82 L1083.85,174.52 L1084.52,173.64 L1085.19,174.28 L1085.70,173.47 L1085.86,173.32 L1086.53,174.02 L1087.20,174.04 L1087.87,174.92 L1088.54,174.71 L1088.84,175.35 L1089.21,175.19 L1089.88,175.28 L1090.55,175.23 L1091.22,175.46 L1091.89,175.13 L1092.56,175.53 L1093.23,175.90 L1093.90,175.75 L1094.57,176.16 L1095.10,175.67 L1095.24,176.15 L1095.91,175.59 L1096.58,175.53 L1097.25,175.81 L1097.92,175.89 L1098.59,175.48 L1099.26,175.57 L1099.79,175.35 L1099.93,175.52 L1100.60,175.10 L1101.27,174.87 L1101.94,174.53 L1102.61,174.36 L1103.28,174.16 L1103.95,174.30 L1104.49,173.79 L1104.62,173.42 L1105.29,173.42 L1105.96,174.35 L1106.63,173.94 L1107.30,174.19 L1107.97,174.48 L1108.64,174.32 L1109.19,174.10 L1109.31,174.16 L1109.98,174.54 L1110.65,174.14 L1111.32,173.90 L1111.99,173.56 L1112.66,173.49 L1113.33,174.14 L1113.88,173.79 L1114.00,174.28 L1114.67,174.02 L1115.34,174.55 L1116.01,175.05 L1116.68,175.30 L1117.35,175.27 L1118.02,176.31 L1118.58,176.14 L1118.69,176.25 L1119.36,176.76 L1120.03,177.07 L1120.70,177.13 L1121.37,177.75 L1121.71,177.70 L1122.04,177.11 L1122.71,177.00 L1123.38,176.61 L1124.05,176.09 L1124.72,175.21 L1124.84,175.35 L1125.39,175.00 L1126.06,174.91 L1126.73,174.94 L1127.40,175.00 L1128.07,175.34 L1128.74,175.43 L1129.41,175.58 L1129.54,175.35 L1130.08,175.25 L1130.75,175.57 L1131.42,174.71 L1132.09,175.02 L1132.76,174.72 L1133.43,175.11 L1134.10,175.13 L1134.24,175.04 L1134.77,175.26 L1135.44,175.26 L1136.11,175.33 L1136.78,175.45 L1137.45,175.36 L1138.12,175.61 L1138.79,176.09 L1138.93,176.14 L1139.46,176.03 L1140.13,175.30 L1140.80,175.89 L1141.47,174.77 L1142.14,174.65 L1142.81,174.78 L1143.48,174.43 L1143.63,174.57 L1144.15,174.55 L1144.82,174.69 L1145.49,174.53 L1146.16,174.69 L1146.83,174.30 L1147.50,174.47 L1148.17,174.14 L1148.84,173.77 L1149.51,173.66 L1149.89,174.10 L1150.18,173.81 L1150.85,174.23 L1151.52,174.18 L1152.19,174.63 L1152.86,174.88 L1153.53,175.29 L1154.20,174.58 L1154.59,175.04 L1154.87,175.54 L1155.54,174.49 L1156.21,175.47 L1156.88,175.57 L1157.55,174.89 L1158.22,175.37 L1158.89,175.04 L1159.29,175.04 L1159.56,175.14 L1160.23,175.53 L1160.90,175.69 L1161.57,175.05 L1162.24,175.03 L1162.91,175.86 L1163.58,175.57 L1164.25,175.98 L1164.92,175.30 L1165.55,175.67 L1165.59,176.05 L1166.26,175.36 L1166.93,175.42 L1167.60,175.64 L1168.27,176.41 L1168.94,175.88 L1169.61,176.01 L1170.24,176.14 L1170.28,175.89 L1170.95,175.43 L1171.62,175.61 L1172.29,175.45 L1172.96,175.05 L1173.63,175.26 L1174.30,174.57 L1174.94,174.57 L1174.97,175.10 L1175.64,175.09 L1176.31,174.79 L1176.98,174.34 L1177.65,174.91 L1178.32,175.04 L1178.99,175.14 L1179.64,175.04 L1179.66,174.95 L1180.33,175.22 L1181.00,175.45 L1181.67,175.06 L1182.34,174.26 L1183.01,174.84 L1183.68,174.77 L1184.33,174.57 L1184.35,174.62 L1185.02,175.16 L1185.69,174.28 L1186.36,174.34 L1187.03,175.22 L1187.47,175.04 L1187.70,174.95 L1188.37,175.97 L1189.04,177.70 L1189.71,178.19 L1189.81,178.48 L1190.38,178.14 L1191.05,177.16 L1191.72,176.11 L1192.16,175.35 L1192.39,175.24 L1193.06,175.04 L1193.73,176.14 L1194.40,176.13 L1195.07,176.30 L1195.74,175.96 L1196.41,175.82 L1196.86,176.14 L1197.08,176.34 L1197.75,176.29 L1198.42,176.23 L1199.09,176.33 L1199.70,176.92 L1199.76,176.84 L1200.43,176.77 L1201.10,177.11 L1201.77,178.11 L1202.44,178.27 L1203.11,178.44 L1203.61,178.17 L1203.78,178.11 L1204.45,178.12 L1205.12,177.19 L1205.79,177.43 L1206.46,177.55 L1207.13,177.08 L1207.52,176.60 L1207.80,177.22 L1208.47,177.01 L1209.14,176.84 L1209.81,176.72 L1210.48,177.18 L1211.15,177.98 L1211.44,177.70 L1211.82,177.53 L1212.49,177.29 L1213.16,177.14 L1213.83,176.23 L1214.50,175.71 L1215.17,176.18 L1215.35,175.67 L1215.84,176.34 L1216.51,176.48 L1217.18,177.99 L1217.85,178.79 L1218.48,179.27 L1218.52,179.54 L1219.19,178.62 L1219.86,178.56 L1220.53,178.83 L1220.83,178.48 L1221.20,178.55 L1221.87,177.97 L1222.54,178.43 L1223.18,177.70 L1223.21,177.54 L1223.88,179.36 L1224.55,179.71 L1225.22,181.23 L1225.89,182.99 L1226.31,183.18 L1226.56,182.97 L1227.23,181.92 L1227.90,180.95 L1228.57,179.55 L1228.66,179.27 L1229.24,179.20 L1229.91,179.37 L1230.58,178.92 L1231.25,179.25 L1231.92,178.90 L1232.57,178.48 L1232.59,177.93 L1233.26,178.25 L1233.93,178.91 L1234.60,178.06 L1235.27,177.95 L1235.94,178.57 L1236.61,178.70 L1237.27,178.48 L1237.28,179.01 L1237.95,178.76 L1238.62,178.17 L1239.29,178.03 L1239.96,177.62 L1240.63,177.75 L1241.30,177.35 L1241.97,176.92 L1241.97,176.51 L1242.64,177.51 L1243.31,177.32 L1243.98,178.08 L1244.32,178.48 L1244.65,180.68 L1245.10,183.96 L1245.32,184.05 L1245.99,182.16 L1246.66,181.22 L1247.33,180.31 L1247.45,180.05 L1248.00,179.50 L1248.67,179.51 L1249.34,179.07 L1250.01,179.27 L1250.68,179.08 L1251.35,178.58 L1251.36,178.48 L1252.02,178.56 L1252.69,177.81 L1253.36,177.75 L1254.03,176.70 L1254.49,176.92 L1254.70,176.95 L1255.37,177.39 L1256.04,178.51 L1256.71,178.58 L1257.38,178.95 L1257.62,179.27 L1258.05,179.34 L1258.72,179.49 L1259.39,179.19 L1260.06,178.99 L1260.73,178.67 L1260.75,178.48 L1261.40,179.47 L1262.07,179.87 L1262.74,180.35 L1263.41,180.94 L1263.88,181.61 L1264.08,181.20 L1264.75,180.78 L1265.42,180.46 L1266.09,180.35 L1266.76,179.16 L1267.02,179.27 L1267.43,179.15 L1268.10,179.00 L1268.77,179.25 L1269.44,178.78 L1270.11,179.40 L1270.15,179.27 L1270.78,179.55 L1271.45,179.50 L1272.12,178.78 L1272.79,178.46 L1273.46,178.97 L1274.13,178.88 L1274.80,178.15 L1274.84,178.48 L1275.47,178.13 L1276.14,178.93 L1276.81,178.75 L1277.48,179.04 L1278.15,179.22 L1278.76,179.27 L1278.82,179.76 L1279.49,179.59 L1280.16,180.41 L1280.83,180.83 L1281.50,182.22 L1281.89,182.40 L1282.17,182.22 L1282.84,183.74 L1283.51,184.14 L1284.18,184.71 L1284.85,185.11 L1285.02,185.53 L1285.52,184.42 L1286.19,181.58 L1286.59,180.83 L1286.86,180.73 L1287.53,180.56 L1288.20,179.93 L1288.87,178.81 L1288.93,179.27 L1289.54,179.08 L1290.21,179.54 L1290.88,180.30 L1291.55,179.92 L1292.22,181.08 L1292.85,180.83 L1292.89,181.29 L1293.56,181.45 L1294.23,182.29 L1294.90,182.52 L1295.57,182.50 L1295.98,183.18 L1296.24,182.88 L1296.91,181.95 L1297.58,181.91 L1298.25,182.01 L1298.92,180.86 L1299.11,180.83 L1299.59,182.10 L1300.26,183.28 L1300.93,185.13 L1301.60,186.26 L1302.24,187.88 L1302.27,188.25 L1302.94,186.14 L1303.61,184.42 L1304.28,183.03 L1304.59,182.40 L1304.95,181.75 L1305.62,181.69 L1306.29,181.81 L1306.96,181.10 L1307.63,180.82 L1307.72,180.83 L1308.30,180.89 L1308.97,181.94 L1309.64,182.41 L1310.31,182.29 L1310.98,182.24 L1311.63,183.18 L1311.65,183.09 L1312.32,183.18 L1312.99,182.53 L1313.66,181.66 L1314.33,181.13 L1315.00,181.58 L1315.55,180.83 L1315.67,180.39 L1316.34,181.09 L1317.01,181.18 L1317.68,180.84 L1318.35,181.24 L1319.02,181.81 L1319.69,182.07 L1320.24,181.61 L1320.36,181.15 L1321.03,181.10 L1321.70,181.35 L1322.37,181.12 L1323.04,182.09 L1323.71,181.15 L1324.38,181.47 L1324.94,181.61 L1325.05,182.03 L1325.72,181.71 L1326.39,181.56 L1327.06,181.49 L1327.73,181.78 L1328.40,181.98 L1329.07,182.69 L1329.64,182.40 L1329.74,182.28 L1330.41,182.14 L1331.08,181.56 L1331.75,181.45 L1332.42,181.75 L1333.09,180.59 L1333.55,180.83 L1333.76,181.05 L1334.43,180.63 L1335.10,180.74 L1335.77,181.07 L1336.44,180.67 L1337.11,180.82 L1337.47,180.83 L1337.78,181.14 L1338.45,181.80 L1339.12,182.02 L1339.79,183.04 L1340.46,183.70 L1340.60,183.96 L1341.13,184.41 L1341.80,184.94 L1342.47,185.78 L1342.95,186.31 L1343.14,186.24 L1343.81,184.39 L1344.48,183.28 L1345.15,182.67 L1346.40,182.40" fill="none" stroke="#eab839" stroke-width="1.7" stroke-linecap="round" stroke-dasharray="0.01 2.3"/></g>
<path d="M746.20,121.71 L746.71,121.56 L747.38,121.72 L748.05,121.49 L748.72,121.37 L749.39,121.55 L750.06,121.87 L750.73,121.73 L751.40,121.65 L751.61,121.44 L752.07,121.22 L752.74,121.41 L753.41,121.19 L754.08,121.08 L754.75,121.00 L755.42,121.04 L756.09,121.52 L756.76,121.42 L757.43,121.37 L758.10,121.33 L758.58,121.09 L758.77,120.85 L759.44,120.85 L760.11,120.99 L760.78,120.98 L761.45,120.99 L762.12,120.92 L762.79,120.27 L763.22,120.51 L763.46,120.52 L764.13,120.39 L764.80,120.09 L765.47,119.68 L766.14,119.71 L766.71,119.58 L766.81,119.29 L767.48,119.89 L768.15,119.85 L768.82,119.62 L769.49,119.44 L770.16,119.88 L770.83,119.63 L771.50,119.86 L772.17,119.83 L772.51,119.58 L772.84,119.64 L773.51,119.67 L774.18,119.90 L774.85,119.88 L775.52,119.79 L776.19,119.99 L776.86,120.46 L777.16,120.28 L777.53,119.83 L778.20,119.60 L778.87,119.80 L779.54,119.33 L780.21,119.29 L780.64,119.12 L780.88,119.10 L781.55,119.02 L782.22,119.51 L782.89,118.94 L783.56,119.11 L784.23,118.98 L784.90,119.30 L785.57,119.06 L786.24,119.13 L786.91,119.42 L787.58,119.13 L788.25,119.31 L788.92,119.57 L789.59,119.01 L790.26,118.99 L790.93,119.13 L791.60,119.53 L792.25,119.35 L792.27,119.43 L792.94,119.14 L793.61,119.19 L794.28,119.06 L794.95,119.24 L795.62,118.92 L796.29,119.38 L796.96,119.50 L797.63,119.52 L798.30,119.35 L798.97,119.49 L799.64,118.79 L800.31,118.97 L800.38,119.12 L800.98,119.42 L801.65,119.25 L802.32,118.96 L802.99,119.31 L803.66,119.05 L804.33,119.16 L805.00,118.75 L805.67,118.64 L806.34,118.79 L807.01,118.53 L807.58,118.77 L807.68,118.69 L808.35,119.18 L809.02,118.80 L809.69,118.64 L810.36,118.74 L810.83,119.12 L811.03,118.78 L811.70,118.89 L812.37,118.25 L813.04,117.86 L813.15,117.96 L813.71,117.70 L814.38,118.37 L815.05,118.01 L815.72,117.89 L816.39,117.82 L817.06,117.86 L817.73,117.98 L818.40,118.38 L819.07,118.04 L819.74,118.00 L820.41,118.36 L821.08,118.23 L821.28,118.42 L821.75,118.54 L822.42,117.58 L823.09,117.54 L823.60,117.26 L823.76,117.56 L824.43,117.75 L825.10,118.61 L825.34,118.42 L825.77,118.20 L826.44,117.71 L827.11,117.51 L827.78,116.92 L828.24,117.03 L828.45,116.97 L829.12,116.83 L829.79,117.28 L830.46,117.23 L831.13,116.98 L831.80,116.63 L832.47,116.78 L833.14,116.76 L833.81,116.72 L834.48,116.73 L835.15,117.18 L835.82,116.64 L836.49,116.57 L837.16,117.19 L837.83,116.91 L838.50,117.21 L839.17,116.78 L839.84,117.12 L840.51,116.93 L841.18,117.02 L841.85,116.98 L842.18,116.80 L842.52,116.77 L843.19,116.44 L843.86,116.49 L844.53,116.93 L845.20,116.91 L845.87,116.89 L846.54,116.43 L847.21,116.62 L847.88,116.69 L848.55,116.53 L849.22,116.62 L849.89,116.37 L850.30,116.33 L850.56,116.43 L851.23,116.42 L851.90,116.08 L852.57,116.52 L853.24,116.51 L853.91,115.84 L854.58,116.46 L855.25,116.42 L855.92,116.17 L856.59,115.69 L857.26,116.27 L857.93,115.68 L858.60,116.25 L859.27,116.00 L859.59,115.87 L859.94,115.56 L860.61,115.66 L861.28,116.02 L861.95,115.99 L862.62,116.14 L863.29,116.30 L863.96,115.81 L864.63,115.68 L865.30,116.36 L865.97,115.73 L866.64,116.37 L867.31,115.85 L867.98,116.37 L868.65,116.37 L869.32,116.46 L869.99,116.25 L870.66,116.51 L871.33,116.04 L872.00,116.40 L872.67,116.18 L873.34,116.61 L873.53,116.33 L874.01,116.49 L874.68,116.22 L875.35,116.20 L876.02,115.79 L876.69,115.74 L877.36,116.09 L878.03,115.96 L878.70,116.18 L879.33,115.87 L879.37,115.95 L880.04,115.67 L880.71,115.89 L881.38,116.23 L882.05,116.12 L882.72,115.80 L883.39,116.46 L884.06,116.51 L884.73,116.03 L885.40,116.42 L886.07,116.36 L886.74,116.71 L887.41,116.42 L887.46,116.56 L888.08,116.36 L888.75,116.53 L889.42,116.86 L890.09,116.22 L890.76,116.23 L891.43,116.58 L892.10,116.76 L892.77,116.48 L893.44,116.41 L894.11,116.70 L894.78,116.63 L895.45,116.11 L896.12,116.68 L896.79,116.17 L897.46,116.24 L898.13,116.61 L898.80,116.30 L899.47,116.56 L900.14,116.09 L900.81,116.59 L901.48,116.08 L902.15,116.04 L902.82,116.28 L903.49,116.16 L904.16,116.29 L904.83,116.54 L905.50,116.39 L906.17,115.87 L906.61,116.21 L906.84,116.07 L907.51,116.19 L908.18,116.11 L908.85,116.24 L909.52,116.03 L910.19,115.69 L910.86,115.78 L911.53,116.17 L912.20,115.78 L912.42,115.87 L912.87,115.70 L913.54,115.32 L913.58,114.94 L914.21,115.28 L914.88,115.58 L915.55,115.80 L915.90,115.87 L916.22,115.71 L916.89,116.10 L917.56,115.73 L918.23,116.01 L918.90,115.53 L919.57,115.89 L920.24,115.78 L920.91,115.61 L921.58,115.45 L922.25,115.18 L922.92,115.59 L923.59,115.25 L924.26,115.43 L924.93,115.00 L925.60,114.92 L926.27,114.92 L926.94,115.35 L927.61,114.85 L928.28,115.33 L928.95,114.90 L929.62,115.01 L929.83,114.94 L930.29,114.86 L930.96,115.09 L931.63,114.75 L932.30,115.01 L932.97,115.43 L933.64,114.92 L934.31,115.30 L934.98,115.11 L935.65,115.13 L936.32,114.96 L936.99,115.00 L937.66,115.71 L937.96,115.40 L938.33,115.60 L939.00,115.52 L939.67,115.45 L940.34,115.49 L941.01,114.85 L941.68,115.09 L942.35,114.96 L943.02,114.95 L943.69,115.14 L944.36,114.95 L945.03,115.03 L945.70,114.35 L946.37,114.67 L947.04,114.62 L947.25,114.47 L947.71,114.60 L948.38,114.45 L949.05,114.53 L949.72,114.08 L950.39,114.47 L951.06,114.02 L951.73,114.10 L952.40,114.24 L953.07,114.04 L953.74,113.69 L954.41,113.56 L955.08,113.57 L955.75,113.71 L956.42,113.91 L957.09,113.78 L957.76,113.35 L958.43,113.28 L958.86,113.31 L959.10,113.57 L959.77,113.27 L960.44,113.44 L961.11,113.23 L961.78,113.43 L962.45,113.77 L963.12,113.96 L963.79,113.99 L964.46,113.89 L964.67,114.01 L965.13,114.30 L965.80,114.02 L966.47,113.64 L967.14,113.53 L967.81,114.14 L968.48,114.11 L969.15,114.01 L969.82,113.74 L970.49,113.49 L971.16,113.28 L971.63,113.54 L971.83,113.41 L972.50,113.52 L973.17,114.16 L973.84,114.27 L974.51,114.32 L975.18,114.00 L975.85,114.20 L976.52,114.38 L977.19,114.98 L977.86,114.55 L978.53,115.13 L978.60,114.94 L979.20,115.34 L979.87,115.54 L980.54,116.14 L981.21,115.94 L981.88,116.43 L982.55,116.47 L983.22,116.73 L983.24,117.03 L983.89,116.75 L984.56,117.03 L985.23,116.95 L985.90,116.98 L986.57,117.71 L987.24,117.28 L987.91,117.77 L988.58,117.71 L989.25,117.79 L989.92,117.81 L990.21,117.72 L990.59,117.86 L991.26,117.47 L991.93,117.02 L992.53,116.56 L992.60,116.61 L993.27,116.69 L993.94,116.70 L994.61,116.57 L995.28,116.52 L995.95,116.26 L996.62,116.74 L997.29,116.47 L997.96,116.16 L998.63,116.22 L999.30,116.72 L999.50,116.45 L999.97,116.28 L1000.64,116.38 L1001.31,116.60 L1001.98,116.73 L1002.65,116.35 L1003.32,116.40 L1003.99,116.44 L1004.66,116.16 L1005.33,116.78 L1006.00,116.17 L1006.67,116.85 L1007.34,116.28 L1008.01,116.28 L1008.68,116.79 L1009.35,116.78 L1010.02,116.36 L1010.69,116.60 L1011.11,116.56 L1011.36,116.54 L1012.03,116.69 L1012.70,116.28 L1013.37,116.72 L1014.04,116.82 L1014.71,116.59 L1015.38,116.72 L1016.05,116.71 L1016.72,116.29 L1017.39,116.60 L1018.06,116.57 L1018.08,116.33 L1018.73,116.55 L1019.40,116.36 L1020.07,116.88 L1020.74,117.25 L1021.41,116.97 L1022.08,117.37 L1022.75,117.71 L1023.42,117.65 L1024.09,117.40 L1024.76,117.98 L1025.04,117.96 L1025.43,117.68 L1026.10,117.95 L1026.77,117.64 L1027.44,117.22 L1028.11,117.48 L1028.78,117.11 L1029.45,116.74 L1029.69,116.80 L1030.12,117.08 L1030.79,117.19 L1031.46,117.26 L1032.13,117.32 L1032.80,117.22 L1033.47,117.32 L1034.14,117.32 L1034.33,117.26 L1034.81,117.40 L1035.48,117.90 L1036.15,117.61 L1036.82,117.58 L1037.49,118.20 L1038.16,118.21 L1038.83,118.42 L1038.98,118.42 L1039.50,118.52 L1040.17,118.30 L1040.84,118.30 L1041.51,118.25 L1042.18,118.79 L1042.85,118.92 L1043.52,118.80 L1044.19,118.42 L1044.86,119.08 L1045.53,119.00 L1046.20,118.81 L1046.87,118.48 L1047.54,119.12 L1048.21,119.00 L1048.88,119.03 L1049.55,118.63 L1050.22,119.18 L1050.89,118.71 L1051.56,119.07 L1052.23,118.86 L1052.90,119.05 L1053.57,119.47 L1054.24,119.40 L1054.91,119.49 L1055.58,119.15 L1056.25,119.25 L1056.61,119.35 L1056.92,119.58 L1057.59,119.50 L1058.26,120.11 L1058.93,120.85 L1058.93,120.51 L1059.60,120.77 L1060.27,120.93 L1060.94,120.60 L1061.61,120.96 L1062.28,121.10 L1062.95,121.12 L1063.62,121.01 L1064.29,120.89 L1064.96,120.86 L1065.63,121.56 L1066.30,121.67 L1066.97,121.28 L1067.64,121.70 L1068.31,121.53 L1068.98,121.76 L1069.65,121.99 L1070.32,121.70 L1070.99,121.99 L1071.66,121.80 L1072.33,122.06 L1073.00,121.80 L1073.67,122.04 L1074.03,122.25 L1074.34,122.13 L1075.01,122.65 L1075.68,122.15 L1076.35,122.67 L1077.02,122.25 L1077.69,122.97 L1078.36,122.45 L1079.03,122.46 L1079.70,122.61 L1080.37,123.20 L1081.04,123.08 L1081.71,123.30 L1082.38,123.09 L1083.05,122.88 L1083.72,123.11 L1084.39,123.26 L1085.06,123.71 L1085.73,123.18 L1086.40,123.31 L1087.07,123.80 L1087.74,123.35 L1088.41,124.03 L1089.08,123.61 L1089.75,123.87 L1090.42,124.01 L1091.09,124.25 L1091.44,123.99 L1091.76,123.76 L1092.43,124.46 L1093.10,124.13 L1093.77,124.66 L1094.44,124.31 L1095.11,124.99 L1095.78,124.72 L1096.45,124.88 L1097.12,124.91 L1097.79,125.26 L1098.46,125.41 L1099.13,126.03 L1099.80,125.91 L1100.47,125.88 L1101.14,126.48 L1101.81,126.04 L1102.48,126.22 L1103.06,126.55 L1103.15,126.89 L1103.82,127.00 L1104.49,126.91 L1105.16,127.23 L1105.83,126.68 L1106.50,127.40 L1107.17,127.36 L1107.84,127.45 L1108.51,127.68 L1109.18,127.26 L1109.85,127.44 L1110.52,127.50 L1111.19,127.85 L1111.86,128.01 L1112.34,128.06 L1112.53,125.91 L1113.20,117.82 L1113.27,117.03 L1113.87,124.27 L1114.20,128.06 L1114.54,128.40 L1115.21,128.54 L1115.88,128.21 L1116.55,128.49 L1116.99,128.87 L1117.22,128.67 L1117.89,128.68 L1118.56,128.92 L1119.23,128.65 L1119.90,128.96 L1120.57,128.76 L1121.24,128.77 L1121.91,129.02 L1122.58,129.19 L1123.25,128.65 L1123.92,128.76 L1124.59,129.22 L1125.26,128.66 L1125.93,128.53 L1126.28,128.87 L1126.60,128.67 L1127.27,129.18 L1127.94,129.17 L1128.61,129.37 L1129.28,129.11 L1129.95,128.83 L1130.62,129.08 L1131.29,129.43 L1131.96,129.25 L1132.63,129.12 L1133.30,129.34 L1133.97,129.46 L1134.64,129.44 L1135.31,129.55 L1135.98,129.39 L1136.65,129.36 L1137.32,129.96 L1137.89,129.80 L1137.99,129.97 L1138.66,129.75 L1139.33,129.54 L1140.00,129.68 L1140.67,129.88 L1141.34,130.13 L1142.01,129.84 L1142.68,130.20 L1143.35,129.89 L1144.02,129.65 L1144.69,129.97 L1145.36,129.97 L1146.03,129.98 L1146.70,130.08 L1147.37,129.58 L1148.04,129.89 L1148.71,130.16 L1149.38,129.69 L1150.05,129.63 L1150.72,129.74 L1151.39,129.83 L1152.06,129.94 L1152.73,129.86 L1153.40,130.10 L1154.07,129.78 L1154.74,129.91 L1155.30,130.03 L1155.41,130.16 L1156.08,130.09 L1156.75,130.42 L1157.42,130.43 L1158.09,129.97 L1158.76,130.05 L1159.43,130.22 L1160.10,130.26 L1160.77,130.15 L1161.44,130.54 L1162.11,130.09 L1162.78,130.31 L1163.45,130.08 L1164.12,130.66 L1164.79,130.48 L1165.46,130.79 L1166.13,130.21 L1166.80,130.64 L1167.47,130.59 L1168.14,130.22 L1168.81,130.80 L1169.48,130.87 L1170.15,130.32 L1170.82,130.97 L1171.49,130.88 L1172.16,130.78 L1172.72,130.73 L1172.83,130.77 L1173.50,130.60 L1174.17,130.49 L1174.84,130.82 L1175.51,131.14 L1176.18,130.70 L1176.85,130.93 L1177.13,130.96 L1177.52,127.51 L1177.95,123.99 L1178.19,126.13 L1178.76,130.73 L1178.86,131.07 L1179.53,131.07 L1180.20,130.70 L1180.87,130.84 L1181.54,130.60 L1182.21,131.04 L1182.88,131.33 L1183.55,131.38 L1184.22,130.88 L1184.33,131.19 L1184.89,131.15 L1185.56,130.89 L1186.23,131.14 L1186.90,131.49 L1187.57,131.04 L1188.24,131.44 L1188.91,131.52 L1189.58,131.42 L1190.25,130.98 L1190.92,131.49 L1191.59,131.50 L1192.26,131.55 L1192.93,130.84 L1193.60,130.84 L1194.27,131.04 L1194.94,131.21 L1195.61,131.14 L1195.94,131.19 L1196.28,130.89 L1196.95,131.25 L1197.62,131.24 L1198.29,131.18 L1198.96,131.07 L1199.63,131.07 L1200.30,131.14 L1200.97,130.66 L1201.64,130.90 L1202.31,130.65 L1202.98,130.60 L1203.65,131.05 L1204.32,130.70 L1204.99,130.68 L1205.66,130.61 L1206.33,130.80 L1206.61,130.73 L1207.00,130.47 L1207.67,130.87 L1208.34,130.49 L1209.01,131.15 L1209.68,130.60 L1210.35,131.07 L1211.02,130.94 L1211.69,130.88 L1212.36,130.82 L1212.42,130.96 L1213.03,127.04 L1213.35,125.16 L1213.70,127.46 L1214.27,130.73 L1214.37,130.75 L1215.04,130.75 L1215.71,130.55 L1216.38,130.82 L1216.60,130.73 L1217.05,125.53 L1217.29,123.07 L1217.72,126.56 L1218.22,130.73 L1218.39,130.85 L1219.06,130.84 L1219.73,130.94 L1220.40,131.00 L1221.07,130.79 L1221.74,131.41 L1222.41,131.28 L1222.87,131.19 L1223.08,131.33 L1223.75,131.43 L1224.42,130.99 L1225.09,130.84 L1225.76,130.75 L1226.43,130.69 L1227.10,130.60 L1227.28,130.73 L1227.77,127.38 L1228.09,125.39 L1228.44,127.31 L1228.90,130.38 L1229.11,130.37 L1229.78,130.23 L1230.45,130.29 L1231.12,130.50 L1231.79,130.25 L1232.46,130.64 L1233.13,130.59 L1233.80,130.26 L1234.47,130.62 L1235.06,130.38 L1235.14,129.16 L1235.81,120.77 L1235.87,120.28 L1236.48,125.61 L1237.03,129.80 L1237.15,129.47 L1237.82,129.47 L1238.49,130.11 L1239.16,129.50 L1239.83,129.99 L1240.50,129.94 L1241.17,129.72 L1241.84,129.76 L1242.51,130.30 L1243.18,129.90 L1243.85,129.81 L1244.52,129.98 L1244.93,130.03 L1245.19,130.18 L1245.86,129.83 L1246.53,129.64 L1247.20,130.11 L1247.87,129.57 L1248.54,129.50 L1249.21,129.43 L1249.88,130.10 L1250.55,129.66 L1251.22,129.84 L1251.89,129.67 L1252.56,129.93 L1253.23,129.43 L1253.90,129.40 L1254.57,129.60 L1255.24,129.07 L1255.91,129.29 L1256.58,129.54 L1257.25,129.37 L1257.92,129.27 L1258.59,129.55 L1258.86,129.22 L1259.26,129.19 L1259.93,129.44 L1260.60,129.22 L1261.27,129.03 L1261.94,129.28 L1262.61,129.19 L1263.28,129.08 L1263.95,129.30 L1264.62,129.22 L1265.29,129.49 L1265.96,129.72 L1266.63,129.77 L1267.30,129.89 L1267.97,129.51 L1268.64,129.80 L1269.31,129.99 L1269.98,129.66 L1270.65,130.07 L1271.32,129.51 L1271.99,130.13 L1272.66,130.14 L1273.33,130.24 L1274.00,130.16 L1274.67,130.11 L1275.34,129.94 L1276.01,130.18 L1276.28,130.03 L1276.68,130.30 L1277.35,130.09 L1278.02,130.12 L1278.69,130.34 L1279.36,129.88 L1280.03,129.91 L1280.70,129.70 L1281.37,130.30 L1282.04,130.13 L1282.71,130.16 L1283.38,129.84 L1284.05,129.80 L1284.72,130.02 L1285.39,130.30 L1286.06,129.93 L1286.73,129.98 L1287.40,129.97 L1288.07,130.28 L1288.74,129.76 L1289.41,130.30 L1290.08,129.68 L1290.75,130.18 L1291.42,130.22 L1292.09,130.01 L1292.76,130.21 L1293.43,129.87 L1293.69,130.03 L1294.10,129.79 L1294.77,129.97 L1295.44,129.93 L1296.11,130.28 L1296.78,130.20 L1297.45,130.30 L1298.12,130.55 L1298.79,130.43 L1299.46,130.47 L1300.13,130.63 L1300.80,130.62 L1301.47,130.52 L1302.14,130.26 L1302.81,130.40 L1303.48,130.61 L1304.15,130.66 L1304.82,130.76 L1305.49,130.68 L1306.16,130.65 L1306.83,130.38 L1307.50,130.67 L1308.17,130.39 L1308.84,130.74 L1309.51,130.43 L1310.18,130.34 L1310.85,131.05 L1311.11,130.73 L1311.52,131.00 L1312.19,130.61 L1312.86,130.44 L1313.53,131.01 L1314.20,130.99 L1314.87,130.56 L1315.54,131.05 L1316.21,131.07 L1316.88,130.90 L1317.55,130.69 L1318.22,130.55 L1318.89,130.57 L1319.56,130.86 L1320.23,131.07 L1320.90,131.02 L1321.57,130.74 L1322.24,131.17 L1322.72,130.96 L1322.91,130.64 L1323.58,131.01 L1324.25,130.68 L1324.92,130.53 L1325.59,130.64 L1326.26,131.06 L1326.93,130.62 L1327.60,130.45 L1328.27,130.76 L1328.94,130.64 L1329.61,130.78 L1330.28,130.76 L1330.95,130.84 L1331.62,130.96 L1332.29,130.53 L1332.96,130.72 L1333.63,130.32 L1334.30,130.40 L1334.97,130.26 L1335.64,130.79 L1336.31,130.39 L1336.98,130.64 L1337.65,130.73 L1338.32,130.36 L1338.99,130.21 L1339.66,130.21 L1340.14,130.38 L1340.33,130.33 L1341.00,130.08 L1341.67,129.69 L1342.34,130.08 L1343.01,129.76 L1343.68,129.76 L1344.35,129.58 L1344.78,129.22 L1345.02,129.47 L1345.69,129.80 L1346.40,129.80" fill="none" stroke="#7abc70" stroke-width="0.95" stroke-linejoin="round"/>
<rect x="77.8" y="274.4" width="8" height="1.25" fill="#73bf69" fill-opacity="0.85"/><rect x="203.4" y="274.4" width="8" height="1.25" fill="#eab839" fill-opacity="0.85"/>
<rect x="733.2" y="274.4" width="8" height="1.25" fill="#73bf69" fill-opacity="0.85"/><rect x="845.4" y="274.4" width="8" height="1.25" fill="#eab839" fill-opacity="0.85"/>
</svg>
<span class="t" style="left:68.36px;top:86.67px;font-size:9.6px;line-height:9.6px;color:#c7d0d9;transform:scaleX(0.9500);transform-origin:0 0;-webkit-text-stroke:0.25px #c7d0d9;">90</span>
<span class="t" style="left:68.36px;top:111.67px;font-size:9.6px;line-height:9.6px;color:#c7d0d9;transform:scaleX(0.9500);transform-origin:0 0;-webkit-text-stroke:0.25px #c7d0d9;">80</span>
<span class="t" style="left:68.36px;top:136.67px;font-size:9.6px;line-height:9.6px;color:#c7d0d9;transform:scaleX(0.9500);transform-origin:0 0;-webkit-text-stroke:0.25px #c7d0d9;">70</span>
<span class="t" style="left:68.36px;top:162.67px;font-size:9.6px;line-height:9.6px;color:#c7d0d9;transform:scaleX(0.9500);transform-origin:0 0;-webkit-text-stroke:0.25px #c7d0d9;">60</span>
<span class="t" style="left:68.36px;top:187.67px;font-size:9.6px;line-height:9.6px;color:#c7d0d9;transform:scaleX(0.9500);transform-origin:0 0;-webkit-text-stroke:0.25px #c7d0d9;">50</span>
<span class="t" style="left:68.36px;top:212.67px;font-size:9.6px;line-height:9.6px;color:#c7d0d9;transform:scaleX(0.9500);transform-origin:0 0;-webkit-text-stroke:0.25px #c7d0d9;">40</span>
<span class="t" style="left:68.36px;top:238.67px;font-size:9.6px;line-height:9.6px;color:#c7d0d9;transform:scaleX(0.9500);transform-origin:0 0;-webkit-text-stroke:0.25px #c7d0d9;">30</span>
<span class="t" style="left:134.00px;top:249.17px;font-size:9.6px;line-height:9.6px;color:#c7d0d9;transform:scaleX(0.9324);transform-origin:0 0;-webkit-text-stroke:0.25px #c7d0d9;">12:54</span>
<span class="t" style="left:215.00px;top:249.17px;font-size:9.6px;line-height:9.6px;color:#c7d0d9;transform:scaleX(0.9324);transform-origin:0 0;-webkit-text-stroke:0.25px #c7d0d9;">12:56</span>
<span class="t" style="left:296.00px;top:249.17px;font-size:9.6px;line-height:9.6px;color:#c7d0d9;transform:scaleX(0.9324);transform-origin:0 0;-webkit-text-stroke:0.25px #c7d0d9;">12:58</span>
<span class="t" style="left:377.00px;top:249.17px;font-size:9.6px;line-height:9.6px;color:#c7d0d9;transform:scaleX(0.9324);transform-origin:0 0;-webkit-text-stroke:0.25px #c7d0d9;">13:00</span>
<span class="t" style="left:458.00px;top:249.17px;font-size:9.6px;line-height:9.6px;color:#c7d0d9;transform:scaleX(0.9324);transform-origin:0 0;-webkit-text-stroke:0.25px #c7d0d9;">13:02</span>
<span class="t" style="left:539.00px;top:249.17px;font-size:9.6px;line-height:9.6px;color:#c7d0d9;transform:scaleX(0.9324);transform-origin:0 0;-webkit-text-stroke:0.25px #c7d0d9;">13:04</span>
<span class="t" style="left:620.00px;top:249.17px;font-size:9.6px;line-height:9.6px;color:#c7d0d9;transform:scaleX(0.9324);transform-origin:0 0;-webkit-text-stroke:0.25px #c7d0d9;">13:06</span>
<span class="t" style="left:724.80px;top:86.67px;font-size:9.6px;line-height:9.6px;color:#c7d0d9;transform:scaleX(0.9312);transform-origin:0 0;-webkit-text-stroke:0.25px #c7d0d9;">55.0</span>
<span class="t" style="left:724.80px;top:111.67px;font-size:9.6px;line-height:9.6px;color:#c7d0d9;transform:scaleX(0.9312);transform-origin:0 0;-webkit-text-stroke:0.25px #c7d0d9;">52.5</span>
<span class="t" style="left:724.80px;top:136.67px;font-size:9.6px;line-height:9.6px;color:#c7d0d9;transform:scaleX(0.9312);transform-origin:0 0;-webkit-text-stroke:0.25px #c7d0d9;">50.0</span>
<span class="t" style="left:724.80px;top:162.67px;font-size:9.6px;line-height:9.6px;color:#c7d0d9;transform:scaleX(0.9312);transform-origin:0 0;-webkit-text-stroke:0.25px #c7d0d9;">47.5</span>
<span class="t" style="left:724.80px;top:187.67px;font-size:9.6px;line-height:9.6px;color:#c7d0d9;transform:scaleX(0.9312);transform-origin:0 0;-webkit-text-stroke:0.25px #c7d0d9;">45.0</span>
<span class="t" style="left:724.80px;top:212.67px;font-size:9.6px;line-height:9.6px;color:#c7d0d9;transform:scaleX(0.9312);transform-origin:0 0;-webkit-text-stroke:0.25px #c7d0d9;">42.5</span>
<span class="t" style="left:724.80px;top:238.67px;font-size:9.6px;line-height:9.6px;color:#c7d0d9;transform:scaleX(0.9312);transform-origin:0 0;-webkit-text-stroke:0.25px #c7d0d9;">40.0</span>
<span class="t" style="left:796.10px;top:249.17px;font-size:9.6px;line-height:9.6px;color:#c7d0d9;transform:scaleX(0.9324);transform-origin:0 0;-webkit-text-stroke:0.25px #c7d0d9;">12:54</span>
<span class="t" style="left:876.27px;top:249.17px;font-size:9.6px;line-height:9.6px;color:#c7d0d9;transform:scaleX(0.9324);transform-origin:0 0;-webkit-text-stroke:0.25px #c7d0d9;">12:56</span>
<span class="t" style="left:956.44px;top:249.17px;font-size:9.6px;line-height:9.6px;color:#c7d0d9;transform:scaleX(0.9324);transform-origin:0 0;-webkit-text-stroke:0.25px #c7d0d9;">12:58</span>
<span class="t" style="left:1036.61px;top:249.17px;font-size:9.6px;line-height:9.6px;color:#c7d0d9;transform:scaleX(0.9324);transform-origin:0 0;-webkit-text-stroke:0.25px #c7d0d9;">13:00</span>
<span class="t" style="left:1116.78px;top:249.17px;font-size:9.6px;line-height:9.6px;color:#c7d0d9;transform:scaleX(0.9324);transform-origin:0 0;-webkit-text-stroke:0.25px #c7d0d9;">13:02</span>
<span class="t" style="left:1196.95px;top:249.17px;font-size:9.6px;line-height:9.6px;color:#c7d0d9;transform:scaleX(0.9324);transform-origin:0 0;-webkit-text-stroke:0.25px #c7d0d9;">13:04</span>
<span class="t" style="left:1277.12px;top:249.17px;font-size:9.6px;line-height:9.6px;color:#c7d0d9;transform:scaleX(0.9324);transform-origin:0 0;-webkit-text-stroke:0.25px #c7d0d9;">13:06</span>
<span class="t" style="left:91.20px;top:268.77px;font-size:9.6px;line-height:9.6px;color:#d8d9da;transform:scaleX(0.9465);transform-origin:0 0;-webkit-text-stroke:0.25px #d8d9da;">Temperature PLC_MQTT</span>
<span class="t" style="left:217.20px;top:268.77px;font-size:9.6px;line-height:9.6px;color:#d8d9da;transform:scaleX(0.9292);transform-origin:0 0;-webkit-text-stroke:0.25px #d8d9da;">Temperature PLC_OPCUA</span>
<span class="t" style="left:747.00px;top:268.77px;font-size:9.6px;line-height:9.6px;color:#d8d9da;transform:scaleX(0.9309);transform-origin:0 0;-webkit-text-stroke:0.25px #d8d9da;">Pressure: PLC_MQTT</span>
<span class="t" style="left:859.00px;top:268.77px;font-size:9.6px;line-height:9.6px;color:#d8d9da;transform:scaleX(0.9165);transform-origin:0 0;-webkit-text-stroke:0.25px #d8d9da;">Pressure: PLC_OPCUA</span>
<div class="gauge" style="left:67.3px;top:353px;width:642.6px;height:212.6px"><div class="fill" style="height:15.4px"></div></div>
<div class="gauge" style="left:718px;top:353px;width:641.7px;height:212.6px"><div class="fill" style="height:168.4px"></div></div>
<span class="t" style="left:373.70px;top:324.02px;font-size:26.2px;line-height:26.2px;color:#5794f2;-webkit-text-stroke:0.3px #5794f2;">47</span>
<span class="t" style="left:1023.80px;top:324.02px;font-size:26.2px;line-height:26.2px;color:#5794f2;-webkit-text-stroke:0.3px #5794f2;">79</span>
<span class="t" style="left:332.40px;top:567.78px;font-size:11.6px;line-height:11.6px;color:#d8d9da;transform:scaleX(0.9491);transform-origin:0 0;-webkit-text-stroke:0.2px #d8d9da;">Pumpsetting: Standard</span>
<span class="t" style="left:988.80px;top:567.78px;font-size:11.6px;line-height:11.6px;color:#d8d9da;transform:scaleX(0.9457);transform-origin:0 0;-webkit-text-stroke:0.2px #d8d9da;">Pumpsetting: Speed</span>
</div></body></html>
